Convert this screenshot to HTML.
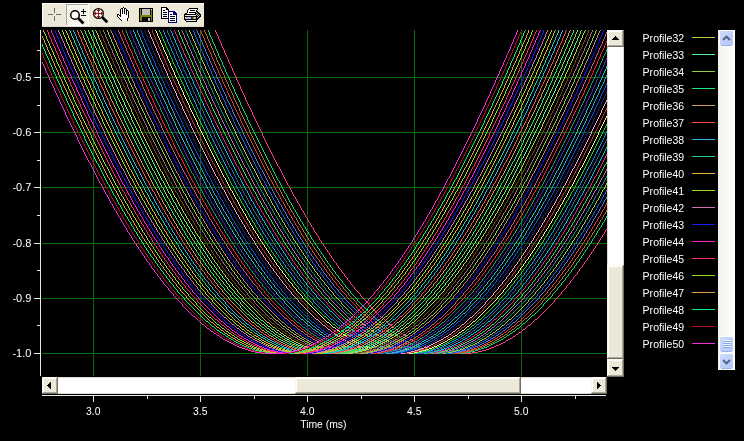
<!DOCTYPE html>
<html><head><meta charset="utf-8"><title>chart</title>
<style>
html,body{margin:0;padding:0;background:#000;}
body{width:744px;height:441px;overflow:hidden;font-family:"Liberation Sans",sans-serif;}
svg{display:block;will-change:transform;}
text{font-family:"Liberation Sans",sans-serif;font-size:11px;fill:#fff;}
</style></head><body>
<svg width="744" height="441" viewBox="0 0 744 441">
<rect x="0" y="0" width="744" height="441" fill="#000"/>
<defs>
<clipPath id="pc"><rect x="41" y="30" width="566" height="346"/></clipPath>
<linearGradient id="trk" x1="0" x2="1" y1="0" y2="0"><stop offset="0" stop-color="#f3f1ec"/><stop offset="1" stop-color="#fefefb"/></linearGradient>
<linearGradient id="btn" x1="0" x2="1" y1="0" y2="1"><stop offset="0" stop-color="#cfdcfd"/><stop offset="1" stop-color="#b3c5f6"/></linearGradient>
<pattern id="chk" x="0" y="0" width="2" height="2" patternUnits="userSpaceOnUse"><rect width="2" height="2" fill="#ece9d8"/><rect x="0" y="0" width="1" height="1" fill="#fff"/><rect x="1" y="1" width="1" height="1" fill="#fff"/></pattern>
</defs>
<g fill="#006e00" shape-rendering="crispEdges">
<rect x="93" y="30" width="1" height="346"/>
<rect x="200" y="30" width="1" height="346"/>
<rect x="307" y="30" width="1" height="346"/>
<rect x="414" y="30" width="1" height="346"/>
<rect x="521" y="30" width="1" height="346"/>
<rect x="42" y="77" width="565" height="1"/>
<rect x="42" y="132" width="565" height="1"/>
<rect x="42" y="187" width="565" height="1"/>
<rect x="42" y="243" width="565" height="1"/>
<rect x="42" y="298" width="565" height="1"/>
<rect x="42" y="353" width="565" height="1"/>
</g>
<g clip-path="url(#pc)" fill="none" stroke-width="1" shape-rendering="crispEdges">
<path d="M215.5 30v2m1 0v2m1 0v2m1 0v3m1 0v2m1 0v2m1 0v3m1 0v2m1 0v2m1 0v3m1 0v2m1 0v2m1 0v2m1 0v3m1 0v2m1 0v2m1 0v2m1 0v3m1 0v2m1 0v2m1 0v2m1 0v3m1 0v2m1 0v2m1 0v2m1 0v3m1 0v2m1 0v2m1 0v2m1 0v2m1 0v3m1 0v2m1 0v2m1 0v2m1 0v2m1 0v2m1 0v2m1 0v3m1 0v2m1 0v2m1 0v2m1 0v2m1 0v2m1 0v2m1 0v2m1 0v2m1 0v2m1 0v3m1 0v2m1 0v2m1 0v2m1 0v2m1 0v2m1 0v2m1 0v2m1 0v2m1 0v2m1 0v2m1 0v2m1 0v2m1 0v2m1 0v2m1 0v2m1 0v1m1 0v2m1 0v2m1 0v2m1 0v2m1 0v2m1 0v2m1 0v2m1 0v2m1 0v2m1 0v1m1 0v2m1 0v2m1 0v2m1 0v2m1 0v2m1 0v1m1 0v2m1 0v2m1 0v2m1 0v1m1 0v2m1 0v2m1 0v2m1 0v1m1 0v2m1 0v2m1 0v2m1 0v1m1 0v2m1 0v2m1 0v1m1 0v2m1 0v2m1 0v1m1 0v2m1 0v2m1 0v1m1 0v2m1 0v1m1 0v2m1 0v2m1 0v1m1 0v2m1 0v1m1 0v2m1 0v1m1 0v2m1 0v1m1 0v2m1 0v1m1 0v2m1 0v1m1 0v2m1 0v1m1 0v2m1 0v1m1 0v1m1 0v2m1 0v1m1 0v2m1 0v1m1 0v1m1 0v2m1 0v1m1 0v1m1 0v2m1 0v1m1 0v1m1 0v2m1 0v1m1 0v1m1 0v2m1 0v1m1 0v1m1 0v1m1 0v2m1 0v1m1 0v1m1 0v1m1 0v1m1 0v1m1 0v2m1 0v1m1 0v1m1 0v1m1 0v1m1 0v1m1 0v1m1 0v1m1 0v2m1 0v1m1 0v1m1 0v1m1 0v1m1 0v1m1 0v1m1 0v1m1 0v1m1 0v1m1 0v1m1 0v1m1 0v1m1 0v1m1 -1v1m1 0v1m1 0v1m1 0v1m1 0v1m1 0v1m1 0v1m1 0v1m1 -1v1m1 0v1m1 0v1m1 0v1m1 0v1m1 -1v1m1 0v1m1 0v1m1 0v1m1 -1v1m1 0v1m1 0v1m1 -1v1m1 0v1m1 0v1m1 -1v1m1 0v1m1 0v1m1 -1v1m1 0v1m1 0v1m1 -1v1m1 0v1m1 -1v1m1 0v1m1 -1v1m1 0v1m1 -1v1m1 0v1m1 -1v1m1 0v1m1 -1v1m1 0v1m1 -1v1m1 0v1m1 -1v1m1 0v1m1 -1v1m1 -1v1m1 0v1m1 -1v1m1 -1v1m1 0v1m1 -1v1m1 -1v1m1 0v1m1 -1v1m1 -1v1m1 0v1m1 -1v1m1 -1v1m1 -1v1m1 0v1m1 -1v1m1 -1v1m1 -1v1m1 -1v1m1 -1v1m1 0v1m1 -1v1m1 -1v1m1 -1v1m1 -1v1m1 -1v1m1 -1v1m1 -1v1m1 -1v1m1 -1v1m1 -1v1m1 -1v1m1 -1v1m1 -1v1m1 -1v1m1 -1v1m1 -1v1m1 -1v1m1 -1v1m1 -1v1m1 -1v1m1 -1v1m1 -1v1m1 -1v1m1 -2v1m1 -1v1m1 -1v1m1 -1v1m1 -1v1m1 -1v1m1 -2v1m1 -1v1m1 -1v1m1 -1v1m1 -2v1m1 -1v1m1 -1v1m1 -1v1m1 -2v1m1 -1v1m1 -1v1m1 -2v1m1 -1v1m1 -2v1m1 -1v1m1 -1v1m1 -2v1m1 -1v1m1 -2v1m1 -1v1m1 -1v1m1 -2v1m1 -1v1m1 -2v1m1 -1v1m1 -2v1m1 -1v1m1 -2v1m1 -2v1m1 -1v1m1 -2v1m1 -1v1m1 -2v1m1 -1v1m1 -2v1m1 -2v1m1 -1v1m1 -2v1m1 -2v1m1 -1v1m1 -2v1m1 -2v1m1 -1v1m1 -2v1m1 -2v1m1 -2v1m1 -1v1m1 -2v1m1 -2v1m1 -2v1m1 -2v1m1 -1v1m1 -2v1m1 -2v1m1 -2v1m1 -2v1m1 -2v1m1 -2v1m1 -1v1m1 -2v1m1 -2v1m1 -2v1m1 -2v1m1 -2v1m1 -2v1m1 -2v1m1 -2v1m1 -2v1m1 -2v1m1 -2v1m1 -2v1m1 -2v1m1 -2v1m1 -2v1m1 -2v1m1 -2v1m1 -3v2m1 -3v1m1 -2v1m1 -2v1m1 -2v1m1 -2v1m1 -2v1m1 -3v2m1 -3v1m1 -2v1m1 -2v1m1 -2v1m1 -3v2m1 -3v1m1 -2v1m1 -2v1m1 -3v2m1 -3v1m1 -2v1m1 -3v2m1 -3v1m1 -2v1m1 -2v1m1 -3v2m1 -3v1m1 -3v2m1 -3v1m1 -2v1m1 -3v2m1 -3v1m1 -3v2m1 -3v1m1 -2v1m1 -3v2m1 -3v1m1 -3v2m1 -3v1m1 -3v2m1 -3v1m1 -3v2m1 -3v1m1 -3v2m1 -3v1m1 -3v2m1 -3v1m1 -3v2m1 -4v2m1 -3v1m1 -3v2m1 -3v1m1 -3v2m1 -4v2m1 -3v1" stroke="#ff3c8c"/>
<path d="M208.5 30v2m1 0v3m1 0v2m1 0v2m1 0v3m1 0v2m1 0v2m1 0v3m1 0v2m1 0v2m1 0v3m1 0v2m1 0v2m1 0v2m1 0v3m1 0v2m1 0v2m1 0v3m1 0v2m1 0v2m1 0v2m1 0v2m1 0v3m1 0v2m1 0v2m1 0v2m1 0v3m1 0v2m1 0v2m1 0v2m1 0v2m1 0v2m1 0v3m1 0v2m1 0v2m1 0v2m1 0v2m1 0v2m1 0v2m1 0v3m1 0v2m1 0v2m1 0v2m1 0v2m1 0v2m1 0v2m1 0v2m1 0v2m1 0v2m1 0v2m1 0v2m1 0v2m1 0v2m1 0v2m1 0v2m1 0v2m1 0v2m1 0v2m1 0v2m1 0v2m1 0v2m1 0v2m1 0v2m1 0v2m1 0v2m1 0v2m1 0v2m1 0v2m1 0v2m1 0v2m1 0v1m1 0v2m1 0v2m1 0v2m1 0v2m1 0v2m1 0v2m1 0v1m1 0v2m1 0v2m1 0v2m1 0v2m1 0v1m1 0v2m1 0v2m1 0v2m1 0v1m1 0v2m1 0v2m1 0v2m1 0v1m1 0v2m1 0v2m1 0v1m1 0v2m1 0v2m1 0v1m1 0v2m1 0v2m1 0v1m1 0v2m1 0v1m1 0v2m1 0v2m1 0v1m1 0v2m1 0v1m1 0v2m1 0v1m1 0v2m1 0v1m1 0v2m1 0v1m1 0v2m1 0v1m1 0v2m1 0v1m1 0v2m1 0v1m1 0v2m1 0v1m1 0v1m1 0v2m1 0v1m1 0v2m1 0v1m1 0v1m1 0v2m1 0v1m1 0v1m1 0v2m1 0v1m1 0v1m1 0v1m1 0v2m1 0v1m1 0v1m1 0v2m1 0v1m1 0v1m1 0v1m1 0v1m1 0v2m1 0v1m1 0v1m1 0v1m1 0v1m1 0v1m1 0v1m1 0v2m1 0v1m1 0v1m1 0v1m1 0v1m1 0v1m1 0v1m1 0v1m1 0v1m1 0v1m1 0v1m1 0v1m1 0v1m1 0v1m1 0v1m1 0v1m1 0v1m1 0v1m1 0v1m1 0v1m1 0v1m1 -1v1m1 0v1m1 0v1m1 0v1m1 0v1m1 0v1m1 -1v1m1 0v1m1 0v1m1 0v1m1 0v1m1 -1v1m1 0v1m1 0v1m1 0v1m1 -1v1m1 0v1m1 0v1m1 -1v1m1 0v1m1 0v1m1 -1v1m1 0v1m1 0v1m1 -1v1m1 0v1m1 -1v1m1 0v1m1 0v1m1 -1v1m1 0v1m1 -1v1m1 0v1m1 -1v1m1 0v1m1 -1v1m1 0v1m1 -1v1m1 -1v1m1 0v1m1 -1v1m1 0v1m1 -1v1m1 0v1m1 -1v1m1 -1v1m1 0v1m1 -1v1m1 -1v1m1 0v1m1 -1v1m1 -1v1m1 -1v1m1 0v1m1 -1v1m1 -1v1m1 -1v1m1 0v1m1 -1v1m1 -1v1m1 -1v1m1 -1v1m1 -1v1m1 0v1m1 -1v1m1 -1v1m1 -1v1m1 -1v1m1 -1v1m1 -1v1m1 -1v1m1 -1v1m1 -1v1m1 -1v1m1 -1v1m1 -1v1m1 -1v1m1 -1v1m1 -1v1m1 -1v1m1 -1v1m1 -1v1m1 -1v1m1 -1v1m1 -1v1m1 -1v1m1 -1v1m1 -2v1m1 -1v1m1 -1v1m1 -1v1m1 -1v1m1 -1v1m1 -2v1m1 -1v1m1 -1v1m1 -1v1m1 -2v1m1 -1v1m1 -1v1m1 -2v1m1 -1v1m1 -1v1m1 -2v1m1 -1v1m1 -1v1m1 -2v1m1 -1v1m1 -1v1m1 -2v1m1 -1v1m1 -2v1m1 -1v1m1 -2v1m1 -1v1m1 -2v1m1 -1v1m1 -2v1m1 -1v1m1 -2v1m1 -1v1m1 -2v1m1 -1v1m1 -2v1m1 -1v1m1 -2v1m1 -2v1m1 -1v1m1 -2v1m1 -2v1m1 -1v1m1 -2v1m1 -2v1m1 -1v1m1 -2v1m1 -2v1m1 -1v1m1 -2v1m1 -2v1m1 -2v1m1 -1v1m1 -2v1m1 -2v1m1 -2v1m1 -2v1m1 -2v1m1 -1v1m1 -2v1m1 -2v1m1 -2v1m1 -2v1m1 -2v1m1 -2v1m1 -2v1m1 -2v1m1 -1v1m1 -2v1m1 -2v1m1 -2v1m1 -2v1m1 -2v1m1 -2v1m1 -2v1m1 -2v1m1 -2v1m1 -3v2m1 -3v1m1 -2v1m1 -2v1m1 -2v1m1 -2v1m1 -2v1m1 -2v1m1 -2v1m1 -3v2m1 -3v1m1 -2v1m1 -2v1m1 -2v1m1 -3v2m1 -3v1m1 -2v1m1 -2v1m1 -3v2m1 -3v1m1 -2v1m1 -2v1m1 -3v2m1 -3v1m1 -2v1m1 -3v2m1 -3v1m1 -2v1m1 -3v2m1 -3v1m1 -2v1m1 -3v2m1 -3v1m1 -3v2m1 -3v1m1 -2v1m1 -3v2m1 -3v1m1 -3v2m1 -3v1m1 -3v2m1 -3v1m1 -3v2m1 -3v1m1 -3v2m1 -3v1m1 -3v2m1 -3v1m1 -3v2m1 -4v2m1 -3v1m1 -3v2m1 -3v1m1 -3v2m1 -4v2m1 -3v1m1 -3v2m1 -3v1m1 -3v2m1 -4v2m1 -3v1m1 -3v2m1 -4v2m1 -4v2" stroke="#10d078"/>
<path d="M204.5 30v2m1 0v2m1 0v2m1 0v3m1 0v2m1 0v2m1 0v3m1 0v2m1 0v2m1 0v3m1 0v2m1 0v2m1 0v3m1 0v2m1 0v2m1 0v2m1 0v3m1 0v2m1 0v2m1 0v2m1 0v3m1 0v2m1 0v2m1 0v2m1 0v3m1 0v2m1 0v2m1 0v2m1 0v2m1 0v3m1 0v2m1 0v2m1 0v2m1 0v2m1 0v2m1 0v3m1 0v2m1 0v2m1 0v2m1 0v2m1 0v2m1 0v2m1 0v2m1 0v2m1 0v2m1 0v3m1 0v2m1 0v2m1 0v2m1 0v2m1 0v2m1 0v2m1 0v2m1 0v2m1 0v2m1 0v2m1 0v2m1 0v2m1 0v2m1 0v2m1 0v2m1 0v2m1 0v2m1 0v2m1 0v2m1 0v1m1 0v2m1 0v2m1 0v2m1 0v2m1 0v2m1 0v2m1 0v2m1 0v2m1 0v1m1 0v2m1 0v2m1 0v2m1 0v2m1 0v2m1 0v1m1 0v2m1 0v2m1 0v2m1 0v1m1 0v2m1 0v2m1 0v2m1 0v1m1 0v2m1 0v2m1 0v1m1 0v2m1 0v2m1 0v2m1 0v1m1 0v2m1 0v1m1 0v2m1 0v2m1 0v1m1 0v2m1 0v2m1 0v1m1 0v2m1 0v1m1 0v2m1 0v1m1 0v2m1 0v1m1 0v2m1 0v1m1 0v2m1 0v1m1 0v2m1 0v1m1 0v2m1 0v1m1 0v2m1 0v1m1 0v2m1 0v1m1 0v1m1 0v2m1 0v1m1 0v2m1 0v1m1 0v1m1 0v2m1 0v1m1 0v1m1 0v2m1 0v1m1 0v1m1 0v1m1 0v2m1 0v1m1 0v1m1 0v1m1 0v2m1 0v1m1 0v1m1 0v1m1 0v1m1 0v2m1 0v1m1 0v1m1 0v1m1 0v1m1 0v1m1 0v1m1 0v1m1 0v2m1 0v1m1 0v1m1 0v1m1 0v1m1 0v1m1 0v1m1 0v1m1 0v1m1 0v1m1 0v1m1 0v1m1 0v1m1 0v1m1 0v1m1 0v1m1 -1v1m1 0v1m1 0v1m1 0v1m1 0v1m1 0v1m1 0v1m1 -1v1m1 0v1m1 0v1m1 0v1m1 0v1m1 -1v1m1 0v1m1 0v1m1 0v1m1 -1v1m1 0v1m1 0v1m1 0v1m1 -1v1m1 0v1m1 0v1m1 -1v1m1 0v1m1 -1v1m1 0v1m1 0v1m1 -1v1m1 0v1m1 -1v1m1 0v1m1 -1v1m1 0v1m1 0v1m1 -1v1m1 0v1m1 -1v1m1 -1v1m1 0v1m1 -1v1m1 0v1m1 -1v1m1 0v1m1 -1v1m1 -1v1m1 0v1m1 -1v1m1 -1v1m1 0v1m1 -1v1m1 -1v1m1 0v1m1 -1v1m1 -1v1m1 0v1m1 -1v1m1 -1v1m1 -1v1m1 0v1m1 -1v1m1 -1v1m1 -1v1m1 -1v1m1 -1v1m1 0v1m1 -1v1m1 -1v1m1 -1v1m1 -1v1m1 -1v1m1 -1v1m1 -1v1m1 -1v1m1 -1v1m1 -1v1m1 -1v1m1 -1v1m1 -1v1m1 -1v1m1 -1v1m1 -1v1m1 -1v1m1 -1v1m1 -1v1m1 -1v1m1 -1v1m1 -1v1m1 -1v1m1 -2v1m1 -1v1m1 -1v1m1 -1v1m1 -1v1m1 -1v1m1 -2v1m1 -1v1m1 -1v1m1 -1v1m1 -2v1m1 -1v1m1 -1v1m1 -2v1m1 -1v1m1 -1v1m1 -1v1m1 -2v1m1 -1v1m1 -2v1m1 -1v1m1 -1v1m1 -2v1m1 -1v1m1 -2v1m1 -1v1m1 -2v1m1 -1v1m1 -1v1m1 -2v1m1 -1v1m1 -2v1m1 -1v1m1 -2v1m1 -2v1m1 -1v1m1 -2v1m1 -1v1m1 -2v1m1 -2v1m1 -1v1m1 -2v1m1 -1v1m1 -2v1m1 -2v1m1 -1v1m1 -2v1m1 -2v1m1 -2v1m1 -1v1m1 -2v1m1 -2v1m1 -1v1m1 -2v1m1 -2v1m1 -2v1m1 -2v1m1 -1v1m1 -2v1m1 -2v1m1 -2v1m1 -2v1m1 -2v1m1 -2v1m1 -2v1m1 -1v1m1 -2v1m1 -2v1m1 -2v1m1 -2v1m1 -2v1m1 -2v1m1 -2v1m1 -2v1m1 -2v1m1 -2v1m1 -2v1m1 -2v1m1 -2v1m1 -2v1m1 -2v1m1 -3v2m1 -3v1m1 -2v1m1 -2v1m1 -2v1m1 -2v1m1 -2v1m1 -2v1m1 -3v2m1 -3v1m1 -2v1m1 -2v1m1 -2v1m1 -3v2m1 -3v1m1 -2v1m1 -2v1m1 -3v2m1 -3v1m1 -2v1m1 -3v2m1 -3v1m1 -2v1m1 -3v2m1 -3v1m1 -2v1m1 -3v2m1 -3v1m1 -2v1m1 -3v2m1 -3v1m1 -3v2m1 -3v1m1 -3v2m1 -3v1m1 -2v1m1 -3v2m1 -3v1m1 -3v2m1 -3v1m1 -3v2m1 -3v1m1 -3v2m1 -3v1m1 -3v2m1 -4v2m1 -3v1m1 -3v2m1 -3v1m1 -3v2m1 -4v2m1 -3v1m1 -3v2m1 -3v1m1 -3v2m1 -4v2m1 -3v1m1 -3v2m1 -4v2m1 -3v1m1 -3v2m1 -4v2m1 -3v1m1 -3v2m1 -4v2" stroke="#b07030"/>
<path d="M200.5 30v1m1 0v3m1 0v2m1 0v2m1 0v3m1 0v2m1 0v2m1 0v3m1 0v2m1 0v2m1 0v2m1 0v3m1 0v2m1 0v2m1 0v3m1 0v2m1 0v2m1 0v2m1 0v3m1 0v2m1 0v2m1 0v2m1 0v3m1 0v2m1 0v2m1 0v2m1 0v2m1 0v3m1 0v2m1 0v2m1 0v2m1 0v2m1 0v2m1 0v3m1 0v2m1 0v2m1 0v2m1 0v2m1 0v2m1 0v2m1 0v3m1 0v2m1 0v2m1 0v2m1 0v2m1 0v2m1 0v2m1 0v2m1 0v2m1 0v2m1 0v2m1 0v2m1 0v2m1 0v2m1 0v2m1 0v2m1 0v2m1 0v2m1 0v2m1 0v2m1 0v2m1 0v2m1 0v2m1 0v2m1 0v2m1 0v2m1 0v2m1 0v2m1 0v2m1 0v2m1 0v1m1 0v2m1 0v2m1 0v2m1 0v2m1 0v2m1 0v2m1 0v1m1 0v2m1 0v2m1 0v2m1 0v2m1 0v1m1 0v2m1 0v2m1 0v2m1 0v1m1 0v2m1 0v2m1 0v2m1 0v1m1 0v2m1 0v2m1 0v1m1 0v2m1 0v2m1 0v1m1 0v2m1 0v2m1 0v1m1 0v2m1 0v2m1 0v1m1 0v2m1 0v1m1 0v2m1 0v1m1 0v2m1 0v2m1 0v1m1 0v2m1 0v1m1 0v2m1 0v1m1 0v2m1 0v1m1 0v2m1 0v1m1 0v1m1 0v2m1 0v1m1 0v2m1 0v1m1 0v1m1 0v2m1 0v1m1 0v2m1 0v1m1 0v1m1 0v2m1 0v1m1 0v1m1 0v2m1 0v1m1 0v1m1 0v1m1 0v2m1 0v1m1 0v1m1 0v1m1 0v2m1 0v1m1 0v1m1 0v1m1 0v1m1 0v1m1 0v2m1 0v1m1 0v1m1 0v1m1 0v1m1 0v1m1 0v1m1 0v1m1 0v1m1 0v1m1 0v2m1 0v1m1 0v1m1 0v1m1 0v1m1 0v1m1 0v1m1 0v1m1 -1v1m1 0v1m1 0v1m1 0v1m1 0v1m1 0v1m1 0v1m1 0v1m1 0v1m1 0v1m1 -1v1m1 0v1m1 0v1m1 0v1m1 0v1m1 -1v1m1 0v1m1 0v1m1 0v1m1 0v1m1 -1v1m1 0v1m1 0v1m1 -1v1m1 0v1m1 0v1m1 -1v1m1 0v1m1 0v1m1 -1v1m1 0v1m1 0v1m1 -1v1m1 0v1m1 -1v1m1 0v1m1 -1v1m1 0v1m1 -1v1m1 0v1m1 -1v1m1 0v1m1 -1v1m1 0v1m1 -1v1m1 0v1m1 -1v1m1 0v1m1 -1v1m1 -1v1m1 0v1m1 -1v1m1 -1v1m1 0v1m1 -1v1m1 -1v1m1 0v1m1 -1v1m1 -1v1m1 0v1m1 -1v1m1 -1v1m1 -1v1m1 -1v1m1 0v1m1 -1v1m1 -1v1m1 -1v1m1 -1v1m1 0v1m1 -1v1m1 -1v1m1 -1v1m1 -1v1m1 -1v1m1 -1v1m1 -1v1m1 -1v1m1 -1v1m1 -1v1m1 -1v1m1 -1v1m1 -1v1m1 -1v1m1 -1v1m1 -1v1m1 -1v1m1 -1v1m1 -1v1m1 -1v1m1 -1v1m1 -1v1m1 -1v1m1 -1v1m1 -2v1m1 -1v1m1 -1v1m1 -1v1m1 -1v1m1 -2v1m1 -1v1m1 -1v1m1 -1v1m1 -2v1m1 -1v1m1 -1v1m1 -1v1m1 -2v1m1 -1v1m1 -1v1m1 -2v1m1 -1v1m1 -1v1m1 -2v1m1 -1v1m1 -2v1m1 -1v1m1 -1v1m1 -2v1m1 -1v1m1 -2v1m1 -1v1m1 -2v1m1 -1v1m1 -2v1m1 -1v1m1 -2v1m1 -1v1m1 -2v1m1 -2v1m1 -1v1m1 -2v1m1 -1v1m1 -2v1m1 -2v1m1 -1v1m1 -2v1m1 -2v1m1 -1v1m1 -2v1m1 -2v1m1 -1v1m1 -2v1m1 -2v1m1 -2v1m1 -1v1m1 -2v1m1 -2v1m1 -2v1m1 -1v1m1 -2v1m1 -2v1m1 -2v1m1 -2v1m1 -2v1m1 -1v1m1 -2v1m1 -2v1m1 -2v1m1 -2v1m1 -2v1m1 -2v1m1 -2v1m1 -2v1m1 -2v1m1 -2v1m1 -2v1m1 -2v1m1 -2v1m1 -2v1m1 -2v1m1 -2v1m1 -2v1m1 -2v1m1 -2v1m1 -2v1m1 -2v1m1 -3v2m1 -3v1m1 -2v1m1 -2v1m1 -2v1m1 -2v1m1 -3v2m1 -3v1m1 -2v1m1 -2v1m1 -2v1m1 -3v2m1 -3v1m1 -2v1m1 -2v1m1 -3v2m1 -3v1m1 -2v1m1 -3v2m1 -3v1m1 -2v1m1 -3v2m1 -3v1m1 -2v1m1 -3v2m1 -3v1m1 -2v1m1 -3v2m1 -3v1m1 -3v2m1 -3v1m1 -3v2m1 -3v1m1 -3v2m1 -3v1m1 -3v2m1 -3v1m1 -3v2m1 -3v1m1 -3v2m1 -3v1m1 -3v2m1 -3v1m1 -3v2m1 -3v1m1 -3v2m1 -3v1m1 -3v2m1 -4v2m1 -3v1m1 -3v2m1 -4v2m1 -3v1m1 -3v2m1 -4v2m1 -3v1m1 -3v2m1 -4v2m1 -3v1m1 -3v2m1 -4v2m1 -4v2m1 -3v1m1 -3v2m1 -4v2m1 -4v2" stroke="#d84030"/>
<path d="M196.5 30v1m1 0v2m1 0v2m1 0v3m1 0v2m1 0v2m1 0v3m1 0v2m1 0v2m1 0v3m1 0v2m1 0v2m1 0v2m1 0v3m1 0v2m1 0v2m1 0v3m1 0v2m1 0v2m1 0v2m1 0v3m1 0v2m1 0v2m1 0v2m1 0v2m1 0v3m1 0v2m1 0v2m1 0v2m1 0v2m1 0v3m1 0v2m1 0v2m1 0v2m1 0v2m1 0v2m1 0v3m1 0v2m1 0v2m1 0v2m1 0v2m1 0v2m1 0v2m1 0v2m1 0v2m1 0v2m1 0v3m1 0v2m1 0v2m1 0v2m1 0v2m1 0v2m1 0v2m1 0v2m1 0v2m1 0v2m1 0v2m1 0v2m1 0v2m1 0v2m1 0v2m1 0v2m1 0v2m1 0v2m1 0v2m1 0v1m1 0v2m1 0v2m1 0v2m1 0v2m1 0v2m1 0v2m1 0v2m1 0v2m1 0v1m1 0v2m1 0v2m1 0v2m1 0v2m1 0v2m1 0v1m1 0v2m1 0v2m1 0v2m1 0v1m1 0v2m1 0v2m1 0v2m1 0v1m1 0v2m1 0v2m1 0v2m1 0v1m1 0v2m1 0v2m1 0v1m1 0v2m1 0v2m1 0v1m1 0v2m1 0v2m1 0v1m1 0v2m1 0v1m1 0v2m1 0v1m1 0v2m1 0v2m1 0v1m1 0v2m1 0v1m1 0v2m1 0v1m1 0v2m1 0v1m1 0v2m1 0v1m1 0v2m1 0v1m1 0v1m1 0v2m1 0v1m1 0v2m1 0v1m1 0v1m1 0v2m1 0v1m1 0v2m1 0v1m1 0v1m1 0v2m1 0v1m1 0v1m1 0v1m1 0v2m1 0v1m1 0v1m1 0v2m1 0v1m1 0v1m1 0v1m1 0v1m1 0v2m1 0v1m1 0v1m1 0v1m1 0v1m1 0v1m1 0v2m1 0v1m1 0v1m1 0v1m1 0v1m1 0v1m1 0v1m1 0v1m1 0v1m1 0v1m1 0v1m1 0v1m1 0v1m1 0v1m1 0v1m1 0v1m1 0v1m1 0v1m1 0v1m1 0v1m1 0v1m1 0v1m1 0v1m1 0v1m1 0v1m1 -1v1m1 0v1m1 0v1m1 0v1m1 0v1m1 -1v1m1 0v1m1 0v1m1 0v1m1 0v1m1 -1v1m1 0v1m1 0v1m1 -1v1m1 0v1m1 0v1m1 0v1m1 -1v1m1 0v1m1 -1v1m1 0v1m1 0v1m1 -1v1m1 0v1m1 0v1m1 -1v1m1 0v1m1 -1v1m1 0v1m1 -1v1m1 0v1m1 -1v1m1 0v1m1 -1v1m1 0v1m1 -1v1m1 0v1m1 -1v1m1 -1v1m1 0v1m1 -1v1m1 0v1m1 -1v1m1 -1v1m1 0v1m1 -1v1m1 -1v1m1 0v1m1 -1v1m1 -1v1m1 -1v1m1 0v1m1 -1v1m1 -1v1m1 -1v1m1 0v1m1 -1v1m1 -1v1m1 -1v1m1 -1v1m1 0v1m1 -1v1m1 -1v1m1 -1v1m1 -1v1m1 -1v1m1 -1v1m1 -1v1m1 -1v1m1 -1v1m1 -1v1m1 -1v1m1 -1v1m1 -1v1m1 -1v1m1 -1v1m1 -1v1m1 -1v1m1 -1v1m1 -1v1m1 -1v1m1 -1v1m1 -1v1m1 -1v1m1 -1v1m1 -2v1m1 -1v1m1 -1v1m1 -1v1m1 -1v1m1 -2v1m1 -1v1m1 -1v1m1 -1v1m1 -2v1m1 -1v1m1 -1v1m1 -1v1m1 -2v1m1 -1v1m1 -1v1m1 -2v1m1 -1v1m1 -1v1m1 -2v1m1 -1v1m1 -2v1m1 -1v1m1 -1v1m1 -2v1m1 -1v1m1 -2v1m1 -1v1m1 -2v1m1 -1v1m1 -2v1m1 -1v1m1 -2v1m1 -1v1m1 -2v1m1 -1v1m1 -2v1m1 -2v1m1 -1v1m1 -2v1m1 -1v1m1 -2v1m1 -2v1m1 -1v1m1 -2v1m1 -2v1m1 -1v1m1 -2v1m1 -2v1m1 -2v1m1 -1v1m1 -2v1m1 -2v1m1 -2v1m1 -1v1m1 -2v1m1 -2v1m1 -2v1m1 -2v1m1 -2v1m1 -1v1m1 -2v1m1 -2v1m1 -2v1m1 -2v1m1 -2v1m1 -2v1m1 -2v1m1 -2v1m1 -2v1m1 -2v1m1 -2v1m1 -2v1m1 -2v1m1 -2v1m1 -2v1m1 -2v1m1 -2v1m1 -2v1m1 -2v1m1 -2v1m1 -2v1m1 -2v1m1 -2v1m1 -2v1m1 -3v2m1 -3v1m1 -2v1m1 -2v1m1 -2v1m1 -2v1m1 -3v2m1 -3v1m1 -2v1m1 -2v1m1 -3v2m1 -3v1m1 -2v1m1 -2v1m1 -3v2m1 -3v1m1 -2v1m1 -3v2m1 -3v1m1 -2v1m1 -3v2m1 -3v1m1 -2v1m1 -3v2m1 -3v1m1 -3v2m1 -3v1m1 -2v1m1 -3v2m1 -3v1m1 -3v2m1 -3v1m1 -3v2m1 -3v1m1 -3v2m1 -3v1m1 -3v2m1 -3v1m1 -3v2m1 -3v1m1 -3v2m1 -3v1m1 -3v2m1 -3v1m1 -3v2m1 -4v2m1 -3v1m1 -3v2m1 -4v2m1 -3v1m1 -3v2m1 -3v1m1 -3v2m1 -4v2m1 -4v2m1 -3v1m1 -3v2m1 -4v2m1 -3v1m1 -3v2m1 -4v2m1 -4v2m1 -3v1m1 -3v2m1 -4v2m1 -4v2m1 -3v1m1 -3v2" stroke="#5878d8"/>
<path d="M193.5 30v2m1 0v3m1 0v2m1 0v2m1 0v3m1 0v2m1 0v2m1 0v3m1 0v2m1 0v2m1 0v3m1 0v2m1 0v2m1 0v2m1 0v3m1 0v2m1 0v2m1 0v2m1 0v3m1 0v2m1 0v2m1 0v2m1 0v3m1 0v2m1 0v2m1 0v2m1 0v2m1 0v3m1 0v2m1 0v2m1 0v2m1 0v2m1 0v3m1 0v2m1 0v2m1 0v2m1 0v2m1 0v2m1 0v2m1 0v2m1 0v3m1 0v2m1 0v2m1 0v2m1 0v2m1 0v2m1 0v2m1 0v2m1 0v2m1 0v2m1 0v2m1 0v2m1 0v2m1 0v2m1 0v2m1 0v2m1 0v2m1 0v2m1 0v2m1 0v2m1 0v2m1 0v2m1 0v2m1 0v2m1 0v2m1 0v2m1 0v2m1 0v2m1 0v2m1 0v2m1 0v1m1 0v2m1 0v2m1 0v2m1 0v2m1 0v2m1 0v1m1 0v2m1 0v2m1 0v2m1 0v2m1 0v1m1 0v2m1 0v2m1 0v2m1 0v2m1 0v1m1 0v2m1 0v2m1 0v1m1 0v2m1 0v2m1 0v2m1 0v1m1 0v2m1 0v2m1 0v1m1 0v2m1 0v1m1 0v2m1 0v2m1 0v1m1 0v2m1 0v1m1 0v2m1 0v2m1 0v1m1 0v2m1 0v1m1 0v2m1 0v1m1 0v2m1 0v1m1 0v2m1 0v1m1 0v2m1 0v1m1 0v2m1 0v1m1 0v2m1 0v1m1 0v1m1 0v2m1 0v1m1 0v2m1 0v1m1 0v1m1 0v2m1 0v1m1 0v1m1 0v2m1 0v1m1 0v1m1 0v1m1 0v2m1 0v1m1 0v1m1 0v1m1 0v2m1 0v1m1 0v1m1 0v1m1 0v2m1 0v1m1 0v1m1 0v1m1 0v1m1 0v1m1 0v1m1 0v2m1 0v1m1 0v1m1 0v1m1 0v1m1 0v1m1 0v1m1 0v1m1 0v1m1 0v1m1 0v1m1 0v1m1 0v1m1 0v1m1 0v1m1 0v1m1 0v1m1 0v1m1 0v1m1 0v1m1 0v1m1 -1v1m1 0v1m1 0v1m1 0v1m1 0v1m1 0v1m1 -1v1m1 0v1m1 0v1m1 0v1m1 0v1m1 -1v1m1 0v1m1 0v1m1 0v1m1 -1v1m1 0v1m1 0v1m1 -1v1m1 0v1m1 0v1m1 -1v1m1 0v1m1 0v1m1 -1v1m1 0v1m1 -1v1m1 0v1m1 0v1m1 -1v1m1 0v1m1 -1v1m1 0v1m1 -1v1m1 0v1m1 -1v1m1 0v1m1 -1v1m1 -1v1m1 0v1m1 -1v1m1 0v1m1 -1v1m1 -1v1m1 0v1m1 -1v1m1 0v1m1 -1v1m1 -1v1m1 0v1m1 -1v1m1 -1v1m1 -1v1m1 0v1m1 -1v1m1 -1v1m1 -1v1m1 0v1m1 -1v1m1 -1v1m1 -1v1m1 -1v1m1 -1v1m1 0v1m1 -1v1m1 -1v1m1 -1v1m1 -1v1m1 -1v1m1 -1v1m1 -1v1m1 -1v1m1 -1v1m1 -1v1m1 -1v1m1 -1v1m1 -1v1m1 -1v1m1 -1v1m1 -1v1m1 -1v1m1 -1v1m1 -1v1m1 -1v1m1 -1v1m1 -1v1m1 -1v1m1 -2v1m1 -1v1m1 -1v1m1 -1v1m1 -1v1m1 -1v1m1 -2v1m1 -1v1m1 -1v1m1 -1v1m1 -2v1m1 -1v1m1 -1v1m1 -2v1m1 -1v1m1 -1v1m1 -2v1m1 -1v1m1 -1v1m1 -2v1m1 -1v1m1 -1v1m1 -2v1m1 -1v1m1 -2v1m1 -1v1m1 -2v1m1 -1v1m1 -2v1m1 -1v1m1 -2v1m1 -1v1m1 -2v1m1 -1v1m1 -2v1m1 -1v1m1 -2v1m1 -1v1m1 -2v1m1 -2v1m1 -1v1m1 -2v1m1 -2v1m1 -1v1m1 -2v1m1 -2v1m1 -1v1m1 -2v1m1 -2v1m1 -1v1m1 -2v1m1 -2v1m1 -2v1m1 -1v1m1 -2v1m1 -2v1m1 -2v1m1 -2v1m1 -1v1m1 -2v1m1 -2v1m1 -2v1m1 -2v1m1 -2v1m1 -2v1m1 -2v1m1 -2v1m1 -1v1m1 -2v1m1 -2v1m1 -2v1m1 -2v1m1 -2v1m1 -2v1m1 -2v1m1 -2v1m1 -2v1m1 -2v1m1 -3v2m1 -3v1m1 -2v1m1 -2v1m1 -2v1m1 -2v1m1 -2v1m1 -2v1m1 -2v1m1 -3v2m1 -3v1m1 -2v1m1 -2v1m1 -2v1m1 -3v2m1 -3v1m1 -2v1m1 -2v1m1 -2v1m1 -3v2m1 -3v1m1 -2v1m1 -3v2m1 -3v1m1 -2v1m1 -3v2m1 -3v1m1 -2v1m1 -3v2m1 -3v1m1 -2v1m1 -3v2m1 -3v1m1 -3v2m1 -3v1m1 -2v1m1 -3v2m1 -3v1m1 -3v2m1 -3v1m1 -3v2m1 -3v1m1 -3v2m1 -3v1m1 -3v2m1 -3v1m1 -3v2m1 -3v1m1 -3v2m1 -4v2m1 -3v1m1 -3v2m1 -3v1m1 -3v2m1 -3v1m1 -3v2m1 -4v2m1 -3v1m1 -3v2m1 -4v2m1 -3v1m1 -3v2m1 -4v2m1 -3v1m1 -3v2m1 -4v2m1 -4v2m1 -3v1m1 -3v2m1 -4v2m1 -4v2m1 -3v1m1 -3v2m1 -4v2m1 -4v2m1 -4v2m1 -3v1m1 -3v2m1 -4v2" stroke="#2060e0"/>
<path d="M189.5 30v2m1 0v2m1 0v2m1 0v3m1 0v2m1 0v2m1 0v3m1 0v2m1 0v2m1 0v3m1 0v2m1 0v2m1 0v3m1 0v2m1 0v2m1 0v2m1 0v3m1 0v2m1 0v2m1 0v2m1 0v3m1 0v2m1 0v2m1 0v2m1 0v2m1 0v3m1 0v2m1 0v2m1 0v2m1 0v2m1 0v3m1 0v2m1 0v2m1 0v2m1 0v2m1 0v2m1 0v3m1 0v2m1 0v2m1 0v2m1 0v2m1 0v2m1 0v2m1 0v2m1 0v2m1 0v2m1 0v3m1 0v2m1 0v2m1 0v2m1 0v2m1 0v2m1 0v2m1 0v2m1 0v2m1 0v2m1 0v2m1 0v2m1 0v2m1 0v2m1 0v2m1 0v2m1 0v2m1 0v2m1 0v1m1 0v2m1 0v2m1 0v2m1 0v2m1 0v2m1 0v2m1 0v2m1 0v2m1 0v1m1 0v2m1 0v2m1 0v2m1 0v2m1 0v2m1 0v1m1 0v2m1 0v2m1 0v2m1 0v2m1 0v1m1 0v2m1 0v2m1 0v2m1 0v1m1 0v2m1 0v2m1 0v1m1 0v2m1 0v2m1 0v1m1 0v2m1 0v2m1 0v1m1 0v2m1 0v2m1 0v1m1 0v2m1 0v1m1 0v2m1 0v2m1 0v1m1 0v2m1 0v1m1 0v2m1 0v1m1 0v2m1 0v1m1 0v2m1 0v1m1 0v2m1 0v1m1 0v2m1 0v1m1 0v2m1 0v1m1 0v2m1 0v1m1 0v1m1 0v2m1 0v1m1 0v2m1 0v1m1 0v1m1 0v2m1 0v1m1 0v1m1 0v2m1 0v1m1 0v1m1 0v1m1 0v2m1 0v1m1 0v1m1 0v1m1 0v2m1 0v1m1 0v1m1 0v1m1 0v1m1 0v2m1 0v1m1 0v1m1 0v1m1 0v1m1 0v1m1 0v1m1 0v1m1 0v2m1 0v1m1 0v1m1 0v1m1 0v1m1 0v1m1 0v1m1 0v1m1 0v1m1 0v1m1 0v1m1 0v1m1 0v1m1 0v1m1 0v1m1 -1v1m1 0v1m1 0v1m1 0v1m1 0v1m1 0v1m1 0v1m1 0v1m1 -1v1m1 0v1m1 0v1m1 0v1m1 0v1m1 -1v1m1 0v1m1 0v1m1 0v1m1 -1v1m1 0v1m1 0v1m1 0v1m1 -1v1m1 0v1m1 0v1m1 -1v1m1 0v1m1 -1v1m1 0v1m1 0v1m1 -1v1m1 0v1m1 -1v1m1 0v1m1 -1v1m1 0v1m1 -1v1m1 0v1m1 -1v1m1 0v1m1 -1v1m1 0v1m1 -1v1m1 0v1m1 -1v1m1 0v1m1 -1v1m1 -1v1m1 0v1m1 -1v1m1 -1v1m1 0v1m1 -1v1m1 -1v1m1 0v1m1 -1v1m1 -1v1m1 0v1m1 -1v1m1 -1v1m1 -1v1m1 0v1m1 -1v1m1 -1v1m1 -1v1m1 -1v1m1 -1v1m1 0v1m1 -1v1m1 -1v1m1 -1v1m1 -1v1m1 -1v1m1 -1v1m1 -1v1m1 -1v1m1 -1v1m1 -1v1m1 -1v1m1 -1v1m1 -1v1m1 -1v1m1 -1v1m1 -1v1m1 -1v1m1 -1v1m1 -1v1m1 -1v1m1 -1v1m1 -1v1m1 -1v1m1 -2v1m1 -1v1m1 -1v1m1 -1v1m1 -1v1m1 -1v1m1 -2v1m1 -1v1m1 -1v1m1 -1v1m1 -2v1m1 -1v1m1 -1v1m1 -1v1m1 -2v1m1 -1v1m1 -1v1m1 -2v1m1 -1v1m1 -2v1m1 -1v1m1 -1v1m1 -2v1m1 -1v1m1 -2v1m1 -1v1m1 -1v1m1 -2v1m1 -1v1m1 -2v1m1 -1v1m1 -2v1m1 -1v1m1 -2v1m1 -2v1m1 -1v1m1 -2v1m1 -1v1m1 -2v1m1 -1v1m1 -2v1m1 -2v1m1 -1v1m1 -2v1m1 -2v1m1 -1v1m1 -2v1m1 -2v1m1 -1v1m1 -2v1m1 -2v1m1 -2v1m1 -1v1m1 -2v1m1 -2v1m1 -2v1m1 -2v1m1 -1v1m1 -2v1m1 -2v1m1 -2v1m1 -2v1m1 -2v1m1 -2v1m1 -1v1m1 -2v1m1 -2v1m1 -2v1m1 -2v1m1 -2v1m1 -2v1m1 -2v1m1 -2v1m1 -2v1m1 -2v1m1 -2v1m1 -2v1m1 -2v1m1 -2v1m1 -2v1m1 -2v1m1 -2v1m1 -3v2m1 -3v1m1 -2v1m1 -2v1m1 -2v1m1 -2v1m1 -2v1m1 -3v2m1 -3v1m1 -2v1m1 -2v1m1 -2v1m1 -3v2m1 -3v1m1 -2v1m1 -2v1m1 -3v2m1 -3v1m1 -2v1m1 -3v2m1 -3v1m1 -2v1m1 -3v2m1 -3v1m1 -2v1m1 -3v2m1 -3v1m1 -2v1m1 -3v2m1 -3v1m1 -3v2m1 -3v1m1 -2v1m1 -3v2m1 -3v1m1 -3v2m1 -3v1m1 -3v2m1 -3v1m1 -3v2m1 -3v1m1 -3v2m1 -3v1m1 -3v2m1 -4v2m1 -3v1m1 -3v2m1 -3v1m1 -3v2m1 -3v1m1 -3v2m1 -4v2m1 -3v1m1 -3v2m1 -4v2m1 -3v1m1 -3v2m1 -4v2m1 -3v1m1 -3v2m1 -4v2m1 -3v1m1 -3v2m1 -4v2m1 -4v2m1 -3v1m1 -3v2m1 -4v2m1 -4v2m1 -3v1m1 -3v2m1 -4v2m1 -4v2m1 -4v2m1 -4v2m1 -3v1m1 -3v2m1 -4v2m1 -4v2" stroke="#a8c848"/>
<path d="M185.5 30v1m1 0v2m1 0v3m1 0v2m1 0v2m1 0v3m1 0v2m1 0v2m1 0v3m1 0v2m1 0v2m1 0v3m1 0v2m1 0v2m1 0v2m1 0v3m1 0v2m1 0v2m1 0v3m1 0v2m1 0v2m1 0v2m1 0v2m1 0v3m1 0v2m1 0v2m1 0v2m1 0v3m1 0v2m1 0v2m1 0v2m1 0v2m1 0v2m1 0v3m1 0v2m1 0v2m1 0v2m1 0v2m1 0v2m1 0v2m1 0v3m1 0v2m1 0v2m1 0v2m1 0v2m1 0v2m1 0v2m1 0v2m1 0v2m1 0v2m1 0v2m1 0v2m1 0v2m1 0v2m1 0v2m1 0v2m1 0v2m1 0v2m1 0v2m1 0v2m1 0v2m1 0v2m1 0v2m1 0v2m1 0v2m1 0v2m1 0v2m1 0v2m1 0v2m1 0v2m1 0v1m1 0v2m1 0v2m1 0v2m1 0v2m1 0v2m1 0v2m1 0v1m1 0v2m1 0v2m1 0v2m1 0v2m1 0v1m1 0v2m1 0v2m1 0v2m1 0v1m1 0v2m1 0v2m1 0v2m1 0v1m1 0v2m1 0v2m1 0v1m1 0v2m1 0v2m1 0v1m1 0v2m1 0v2m1 0v1m1 0v2m1 0v1m1 0v2m1 0v2m1 0v1m1 0v2m1 0v1m1 0v2m1 0v1m1 0v2m1 0v2m1 0v1m1 0v2m1 0v1m1 0v2m1 0v1m1 0v1m1 0v2m1 0v1m1 0v2m1 0v1m1 0v2m1 0v1m1 0v1m1 0v2m1 0v1m1 0v2m1 0v1m1 0v1m1 0v2m1 0v1m1 0v1m1 0v1m1 0v2m1 0v1m1 0v1m1 0v2m1 0v1m1 0v1m1 0v1m1 0v2m1 0v1m1 0v1m1 0v1m1 0v1m1 0v1m1 0v2m1 0v1m1 0v1m1 0v1m1 0v1m1 0v1m1 0v1m1 0v1m1 0v1m1 0v1m1 0v1m1 0v2m1 0v1m1 0v1m1 0v1m1 0v1m1 0v1m1 -1v1m1 0v1m1 0v1m1 0v1m1 0v1m1 0v1m1 0v1m1 0v1m1 0v1m1 0v1m1 0v1m1 -1v1m1 0v1m1 0v1m1 0v1m1 0v1m1 -1v1m1 0v1m1 0v1m1 0v1m1 -1v1m1 0v1m1 0v1m1 0v1m1 -1v1m1 0v1m1 0v1m1 -1v1m1 0v1m1 0v1m1 -1v1m1 0v1m1 -1v1m1 0v1m1 0v1m1 -1v1m1 0v1m1 -1v1m1 0v1m1 -1v1m1 0v1m1 -1v1m1 0v1m1 -1v1m1 0v1m1 -1v1m1 0v1m1 -1v1m1 0v1m1 -1v1m1 -1v1m1 0v1m1 -1v1m1 -1v1m1 0v1m1 -1v1m1 -1v1m1 0v1m1 -1v1m1 -1v1m1 0v1m1 -1v1m1 -1v1m1 -1v1m1 -1v1m1 0v1m1 -1v1m1 -1v1m1 -1v1m1 -1v1m1 0v1m1 -1v1m1 -1v1m1 -1v1m1 -1v1m1 -1v1m1 -1v1m1 -1v1m1 -1v1m1 -1v1m1 -1v1m1 -1v1m1 -1v1m1 -1v1m1 -1v1m1 -1v1m1 -1v1m1 -1v1m1 -1v1m1 -1v1m1 -1v1m1 -1v1m1 -1v1m1 -1v1m1 -1v1m1 -2v1m1 -1v1m1 -1v1m1 -1v1m1 -1v1m1 -2v1m1 -1v1m1 -1v1m1 -1v1m1 -2v1m1 -1v1m1 -1v1m1 -1v1m1 -2v1m1 -1v1m1 -1v1m1 -2v1m1 -1v1m1 -1v1m1 -2v1m1 -1v1m1 -2v1m1 -1v1m1 -1v1m1 -2v1m1 -1v1m1 -2v1m1 -1v1m1 -2v1m1 -1v1m1 -2v1m1 -1v1m1 -2v1m1 -1v1m1 -2v1m1 -2v1m1 -1v1m1 -2v1m1 -1v1m1 -2v1m1 -2v1m1 -1v1m1 -2v1m1 -2v1m1 -1v1m1 -2v1m1 -2v1m1 -1v1m1 -2v1m1 -2v1m1 -2v1m1 -1v1m1 -2v1m1 -2v1m1 -2v1m1 -1v1m1 -2v1m1 -2v1m1 -2v1m1 -2v1m1 -2v1m1 -1v1m1 -2v1m1 -2v1m1 -2v1m1 -2v1m1 -2v1m1 -2v1m1 -2v1m1 -2v1m1 -2v1m1 -2v1m1 -2v1m1 -2v1m1 -2v1m1 -2v1m1 -2v1m1 -2v1m1 -2v1m1 -2v1m1 -2v1m1 -2v1m1 -2v1m1 -3v2m1 -3v1m1 -2v1m1 -2v1m1 -2v1m1 -2v1m1 -2v1m1 -3v2m1 -3v1m1 -2v1m1 -2v1m1 -3v2m1 -3v1m1 -2v1m1 -2v1m1 -3v2m1 -3v1m1 -2v1m1 -3v2m1 -3v1m1 -2v1m1 -3v2m1 -3v1m1 -2v1m1 -3v2m1 -3v1m1 -2v1m1 -3v2m1 -3v1m1 -3v2m1 -3v1m1 -3v2m1 -3v1m1 -2v1m1 -3v2m1 -3v1m1 -3v2m1 -3v1m1 -3v2m1 -3v1m1 -3v2m1 -4v2m1 -3v1m1 -3v2m1 -3v1m1 -3v2m1 -3v1m1 -3v2m1 -4v2m1 -3v1m1 -3v2m1 -4v2m1 -3v1m1 -3v2m1 -4v2m1 -3v1m1 -3v2m1 -4v2m1 -3v1m1 -3v2m1 -4v2m1 -3v1m1 -3v2m1 -4v2m1 -4v2m1 -3v1m1 -3v2m1 -4v2m1 -4v2m1 -4v2m1 -3v1m1 -3v2m1 -4v2m1 -4v2m1 -4v2m1 -4v2m1 -3v1m1 -3v2m1 -4v2m1 -4v2m1 -4v2" stroke="#109070"/>
<path d="M181.5 30v1m1 0v2m1 0v2m1 0v3m1 0v2m1 0v2m1 0v3m1 0v2m1 0v2m1 0v2m1 0v3m1 0v2m1 0v2m1 0v3m1 0v2m1 0v2m1 0v2m1 0v3m1 0v2m1 0v2m1 0v2m1 0v3m1 0v2m1 0v2m1 0v2m1 0v3m1 0v2m1 0v2m1 0v2m1 0v2m1 0v3m1 0v2m1 0v2m1 0v2m1 0v2m1 0v2m1 0v2m1 0v3m1 0v2m1 0v2m1 0v2m1 0v2m1 0v2m1 0v2m1 0v2m1 0v2m1 0v2m1 0v3m1 0v2m1 0v2m1 0v2m1 0v2m1 0v2m1 0v2m1 0v2m1 0v2m1 0v2m1 0v2m1 0v2m1 0v2m1 0v2m1 0v2m1 0v2m1 0v2m1 0v1m1 0v2m1 0v2m1 0v2m1 0v2m1 0v2m1 0v2m1 0v2m1 0v2m1 0v2m1 0v1m1 0v2m1 0v2m1 0v2m1 0v2m1 0v2m1 0v1m1 0v2m1 0v2m1 0v2m1 0v1m1 0v2m1 0v2m1 0v2m1 0v1m1 0v2m1 0v2m1 0v2m1 0v1m1 0v2m1 0v2m1 0v1m1 0v2m1 0v2m1 0v1m1 0v2m1 0v1m1 0v2m1 0v2m1 0v1m1 0v2m1 0v1m1 0v2m1 0v2m1 0v1m1 0v2m1 0v1m1 0v2m1 0v1m1 0v2m1 0v1m1 0v2m1 0v1m1 0v2m1 0v1m1 0v1m1 0v2m1 0v1m1 0v2m1 0v1m1 0v1m1 0v2m1 0v1m1 0v2m1 0v1m1 0v1m1 0v2m1 0v1m1 0v1m1 0v1m1 0v2m1 0v1m1 0v1m1 0v2m1 0v1m1 0v1m1 0v1m1 0v1m1 0v2m1 0v1m1 0v1m1 0v1m1 0v1m1 0v1m1 0v2m1 0v1m1 0v1m1 0v1m1 0v1m1 0v1m1 0v1m1 0v1m1 0v1m1 0v1m1 0v1m1 0v1m1 0v1m1 0v1m1 0v1m1 0v1m1 0v1m1 0v1m1 0v1m1 0v1m1 0v1m1 0v1m1 0v1m1 0v1m1 -1v1m1 0v1m1 0v1m1 0v1m1 0v1m1 0v1m1 -1v1m1 0v1m1 0v1m1 0v1m1 0v1m1 -1v1m1 0v1m1 0v1m1 -1v1m1 0v1m1 0v1m1 0v1m1 -1v1m1 0v1m1 -1v1m1 0v1m1 0v1m1 -1v1m1 0v1m1 0v1m1 -1v1m1 0v1m1 -1v1m1 0v1m1 -1v1m1 0v1m1 -1v1m1 0v1m1 -1v1m1 0v1m1 -1v1m1 0v1m1 -1v1m1 -1v1m1 0v1m1 -1v1m1 0v1m1 -1v1m1 -1v1m1 0v1m1 -1v1m1 -1v1m1 0v1m1 -1v1m1 -1v1m1 -1v1m1 0v1m1 -1v1m1 -1v1m1 -1v1m1 0v1m1 -1v1m1 -1v1m1 -1v1m1 -1v1m1 0v1m1 -1v1m1 -1v1m1 -1v1m1 -1v1m1 -1v1m1 -1v1m1 -1v1m1 -1v1m1 -1v1m1 -1v1m1 -1v1m1 -1v1m1 -1v1m1 -1v1m1 -1v1m1 -1v1m1 -1v1m1 -1v1m1 -1v1m1 -1v1m1 -1v1m1 -1v1m1 -1v1m1 -1v1m1 -2v1m1 -1v1m1 -1v1m1 -1v1m1 -1v1m1 -2v1m1 -1v1m1 -1v1m1 -1v1m1 -1v1m1 -2v1m1 -1v1m1 -1v1m1 -2v1m1 -1v1m1 -1v1m1 -2v1m1 -1v1m1 -1v1m1 -2v1m1 -1v1m1 -2v1m1 -1v1m1 -1v1m1 -2v1m1 -1v1m1 -2v1m1 -1v1m1 -2v1m1 -1v1m1 -2v1m1 -1v1m1 -2v1m1 -1v1m1 -2v1m1 -1v1m1 -2v1m1 -2v1m1 -1v1m1 -2v1m1 -1v1m1 -2v1m1 -2v1m1 -1v1m1 -2v1m1 -2v1m1 -1v1m1 -2v1m1 -2v1m1 -2v1m1 -1v1m1 -2v1m1 -2v1m1 -2v1m1 -1v1m1 -2v1m1 -2v1m1 -2v1m1 -2v1m1 -2v1m1 -1v1m1 -2v1m1 -2v1m1 -2v1m1 -2v1m1 -2v1m1 -2v1m1 -2v1m1 -2v1m1 -2v1m1 -2v1m1 -2v1m1 -2v1m1 -2v1m1 -2v1m1 -2v1m1 -2v1m1 -2v1m1 -2v1m1 -2v1m1 -2v1m1 -2v1m1 -2v1m1 -2v1m1 -2v1m1 -3v2m1 -3v1m1 -2v1m1 -2v1m1 -2v1m1 -2v1m1 -3v2m1 -3v1m1 -2v1m1 -2v1m1 -3v2m1 -3v1m1 -2v1m1 -2v1m1 -3v2m1 -3v1m1 -2v1m1 -3v2m1 -3v1m1 -2v1m1 -3v2m1 -3v1m1 -2v1m1 -3v2m1 -3v1m1 -2v1m1 -3v2m1 -3v1m1 -3v2m1 -3v1m1 -3v2m1 -3v1m1 -3v2m1 -3v1m1 -3v2m1 -3v1m1 -3v2m1 -3v1m1 -3v2m1 -3v1m1 -3v2m1 -3v1m1 -3v2m1 -3v1m1 -3v2m1 -4v2m1 -3v1m1 -3v2m1 -3v1m1 -3v2m1 -4v2m1 -3v1m1 -3v2m1 -4v2m1 -3v1m1 -3v2m1 -4v2m1 -4v2m1 -3v1m1 -3v2m1 -4v2m1 -3v1m1 -3v2m1 -4v2m1 -4v2m1 -4v2m1 -3v1m1 -3v2m1 -4v2m1 -4v2m1 -4v2m1 -3v1m1 -3v2m1 -4v2m1 -4v2m1 -4v2m1 -4v2m1 -4v2m1 -3v1m1 -3v2m1 -4v2m1 -4v2m1 -4v2" stroke="#c060c0"/>
<path d="M178.5 30v2m1 0v3m1 0v2m1 0v2m1 0v3m1 0v2m1 0v2m1 0v3m1 0v2m1 0v2m1 0v2m1 0v3m1 0v2m1 0v2m1 0v3m1 0v2m1 0v2m1 0v2m1 0v3m1 0v2m1 0v2m1 0v2m1 0v3m1 0v2m1 0v2m1 0v2m1 0v2m1 0v3m1 0v2m1 0v2m1 0v2m1 0v2m1 0v2m1 0v3m1 0v2m1 0v2m1 0v2m1 0v2m1 0v2m1 0v2m1 0v3m1 0v2m1 0v2m1 0v2m1 0v2m1 0v2m1 0v2m1 0v2m1 0v2m1 0v2m1 0v2m1 0v2m1 0v2m1 0v2m1 0v2m1 0v2m1 0v2m1 0v2m1 0v2m1 0v2m1 0v2m1 0v2m1 0v2m1 0v2m1 0v2m1 0v2m1 0v2m1 0v2m1 0v2m1 0v1m1 0v2m1 0v2m1 0v2m1 0v2m1 0v2m1 0v2m1 0v1m1 0v2m1 0v2m1 0v2m1 0v2m1 0v1m1 0v2m1 0v2m1 0v2m1 0v1m1 0v2m1 0v2m1 0v2m1 0v1m1 0v2m1 0v2m1 0v1m1 0v2m1 0v2m1 0v1m1 0v2m1 0v2m1 0v1m1 0v2m1 0v2m1 0v1m1 0v2m1 0v1m1 0v2m1 0v2m1 0v1m1 0v2m1 0v1m1 0v2m1 0v1m1 0v2m1 0v1m1 0v2m1 0v1m1 0v2m1 0v1m1 0v2m1 0v1m1 0v1m1 0v2m1 0v1m1 0v2m1 0v1m1 0v1m1 0v2m1 0v1m1 0v2m1 0v1m1 0v1m1 0v2m1 0v1m1 0v1m1 0v1m1 0v2m1 0v1m1 0v1m1 0v1m1 0v2m1 0v1m1 0v1m1 0v1m1 0v1m1 0v2m1 0v1m1 0v1m1 0v1m1 0v1m1 0v1m1 0v1m1 0v2m1 0v1m1 0v1m1 0v1m1 0v1m1 0v1m1 0v1m1 0v1m1 0v1m1 0v1m1 0v1m1 0v1m1 0v1m1 0v1m1 0v1m1 0v1m1 0v1m1 0v1m1 0v1m1 -1v1m1 0v1m1 0v1m1 0v1m1 0v1m1 0v1m1 0v1m1 -1v1m1 0v1m1 0v1m1 0v1m1 0v1m1 -1v1m1 0v1m1 0v1m1 0v1m1 -1v1m1 0v1m1 0v1m1 -1v1m1 0v1m1 0v1m1 -1v1m1 0v1m1 0v1m1 -1v1m1 0v1m1 -1v1m1 0v1m1 -1v1m1 0v1m1 0v1m1 -1v1m1 0v1m1 -1v1m1 0v1m1 -1v1m1 0v1m1 -1v1m1 -1v1m1 0v1m1 -1v1m1 0v1m1 -1v1m1 -1v1m1 0v1m1 -1v1m1 0v1m1 -1v1m1 -1v1m1 0v1m1 -1v1m1 -1v1m1 -1v1m1 0v1m1 -1v1m1 -1v1m1 -1v1m1 0v1m1 -1v1m1 -1v1m1 -1v1m1 -1v1m1 -1v1m1 0v1m1 -1v1m1 -1v1m1 -1v1m1 -1v1m1 -1v1m1 -1v1m1 -1v1m1 -1v1m1 -1v1m1 -1v1m1 -1v1m1 -1v1m1 -1v1m1 -1v1m1 -1v1m1 -1v1m1 -1v1m1 -1v1m1 -1v1m1 -1v1m1 -1v1m1 -1v1m1 -1v1m1 -2v1m1 -1v1m1 -1v1m1 -1v1m1 -1v1m1 -1v1m1 -2v1m1 -1v1m1 -1v1m1 -1v1m1 -2v1m1 -1v1m1 -1v1m1 -2v1m1 -1v1m1 -1v1m1 -2v1m1 -1v1m1 -1v1m1 -2v1m1 -1v1m1 -1v1m1 -2v1m1 -1v1m1 -2v1m1 -1v1m1 -2v1m1 -1v1m1 -2v1m1 -1v1m1 -2v1m1 -1v1m1 -2v1m1 -1v1m1 -2v1m1 -1v1m1 -2v1m1 -1v1m1 -2v1m1 -2v1m1 -1v1m1 -2v1m1 -2v1m1 -1v1m1 -2v1m1 -2v1m1 -1v1m1 -2v1m1 -2v1m1 -1v1m1 -2v1m1 -2v1m1 -2v1m1 -1v1m1 -2v1m1 -2v1m1 -2v1m1 -2v1m1 -1v1m1 -2v1m1 -2v1m1 -2v1m1 -2v1m1 -2v1m1 -2v1m1 -2v1m1 -2v1m1 -1v1m1 -2v1m1 -2v1m1 -2v1m1 -2v1m1 -2v1m1 -2v1m1 -2v1m1 -2v1m1 -2v1m1 -2v1m1 -2v1m1 -3v2m1 -3v1m1 -2v1m1 -2v1m1 -2v1m1 -2v1m1 -2v1m1 -2v1m1 -3v2m1 -3v1m1 -2v1m1 -2v1m1 -2v1m1 -2v1m1 -3v2m1 -3v1m1 -2v1m1 -2v1m1 -3v2m1 -3v1m1 -2v1m1 -3v2m1 -3v1m1 -2v1m1 -3v2m1 -3v1m1 -2v1m1 -3v2m1 -3v1m1 -2v1m1 -3v2m1 -3v1m1 -3v2m1 -3v1m1 -2v1m1 -3v2m1 -3v1m1 -3v2m1 -3v1m1 -3v2m1 -3v1m1 -3v2m1 -3v1m1 -3v2m1 -3v1m1 -3v2m1 -3v1m1 -3v2m1 -3v1m1 -3v2m1 -4v2m1 -3v1m1 -3v2m1 -3v1m1 -3v2m1 -4v2m1 -3v1m1 -3v2m1 -4v2m1 -3v1m1 -3v2m1 -4v2m1 -3v1m1 -3v2m1 -4v2m1 -4v2m1 -3v1m1 -3v2m1 -4v2m1 -4v2m1 -3v1m1 -3v2m1 -4v2m1 -4v2m1 -3v1m1 -3v2m1 -4v2m1 -4v2m1 -4v2m1 -4v2m1 -4v2m1 -3v1m1 -3v2m1 -4v2m1 -4v2m1 -4v2m1 -4v2m1 -4v2m1 -4v2m1 -4v2m1 -4v2m1 -3v1m1 -3v2" stroke="#30e050"/>
<path d="M174.5 30v2m1 0v2m1 0v2m1 0v3m1 0v2m1 0v2m1 0v3m1 0v2m1 0v2m1 0v3m1 0v2m1 0v2m1 0v2m1 0v3m1 0v2m1 0v2m1 0v3m1 0v2m1 0v2m1 0v2m1 0v3m1 0v2m1 0v2m1 0v2m1 0v2m1 0v3m1 0v2m1 0v2m1 0v2m1 0v2m1 0v3m1 0v2m1 0v2m1 0v2m1 0v2m1 0v2m1 0v3m1 0v2m1 0v2m1 0v2m1 0v2m1 0v2m1 0v2m1 0v2m1 0v2m1 0v2m1 0v2m1 0v3m1 0v2m1 0v2m1 0v2m1 0v2m1 0v2m1 0v2m1 0v2m1 0v2m1 0v2m1 0v2m1 0v2m1 0v2m1 0v2m1 0v2m1 0v2m1 0v1m1 0v2m1 0v2m1 0v2m1 0v2m1 0v2m1 0v2m1 0v2m1 0v2m1 0v2m1 0v1m1 0v2m1 0v2m1 0v2m1 0v2m1 0v2m1 0v1m1 0v2m1 0v2m1 0v2m1 0v2m1 0v1m1 0v2m1 0v2m1 0v2m1 0v1m1 0v2m1 0v2m1 0v1m1 0v2m1 0v2m1 0v1m1 0v2m1 0v2m1 0v1m1 0v2m1 0v2m1 0v1m1 0v2m1 0v1m1 0v2m1 0v2m1 0v1m1 0v2m1 0v1m1 0v2m1 0v1m1 0v2m1 0v1m1 0v2m1 0v1m1 0v2m1 0v1m1 0v2m1 0v1m1 0v2m1 0v1m1 0v2m1 0v1m1 0v1m1 0v2m1 0v1m1 0v1m1 0v2m1 0v1m1 0v2m1 0v1m1 0v1m1 0v1m1 0v2m1 0v1m1 0v1m1 0v2m1 0v1m1 0v1m1 0v1m1 0v2m1 0v1m1 0v1m1 0v1m1 0v1m1 0v2m1 0v1m1 0v1m1 0v1m1 0v1m1 0v1m1 0v1m1 0v1m1 0v1m1 0v2m1 0v1m1 0v1m1 0v1m1 0v1m1 0v1m1 0v1m1 0v1m1 0v1m1 0v1m1 0v1m1 0v1m1 0v1m1 0v1m1 -1v1m1 0v1m1 0v1m1 0v1m1 0v1m1 0v1m1 0v1m1 0v1m1 -1v1m1 0v1m1 0v1m1 0v1m1 0v1m1 -1v1m1 0v1m1 0v1m1 0v1m1 -1v1m1 0v1m1 0v1m1 -1v1m1 0v1m1 0v1m1 0v1m1 -1v1m1 0v1m1 -1v1m1 0v1m1 0v1m1 -1v1m1 0v1m1 -1v1m1 0v1m1 -1v1m1 0v1m1 -1v1m1 0v1m1 -1v1m1 0v1m1 -1v1m1 0v1m1 -1v1m1 0v1m1 -1v1m1 0v1m1 -1v1m1 -1v1m1 0v1m1 -1v1m1 -1v1m1 0v1m1 -1v1m1 -1v1m1 0v1m1 -1v1m1 -1v1m1 0v1m1 -1v1m1 -1v1m1 -1v1m1 0v1m1 -1v1m1 -1v1m1 -1v1m1 -1v1m1 -1v1m1 0v1m1 -1v1m1 -1v1m1 -1v1m1 -1v1m1 -1v1m1 -1v1m1 -1v1m1 -1v1m1 -1v1m1 -1v1m1 -1v1m1 -1v1m1 -1v1m1 -1v1m1 -1v1m1 -1v1m1 -1v1m1 -1v1m1 -1v1m1 -1v1m1 -1v1m1 -1v1m1 -1v1m1 -2v1m1 -1v1m1 -1v1m1 -1v1m1 -1v1m1 -1v1m1 -2v1m1 -1v1m1 -1v1m1 -1v1m1 -2v1m1 -1v1m1 -1v1m1 -1v1m1 -2v1m1 -1v1m1 -1v1m1 -2v1m1 -1v1m1 -2v1m1 -1v1m1 -1v1m1 -2v1m1 -1v1m1 -2v1m1 -1v1m1 -1v1m1 -2v1m1 -1v1m1 -2v1m1 -1v1m1 -2v1m1 -1v1m1 -2v1m1 -2v1m1 -1v1m1 -2v1m1 -1v1m1 -2v1m1 -1v1m1 -2v1m1 -2v1m1 -1v1m1 -2v1m1 -2v1m1 -1v1m1 -2v1m1 -2v1m1 -1v1m1 -2v1m1 -2v1m1 -2v1m1 -1v1m1 -2v1m1 -2v1m1 -2v1m1 -2v1m1 -1v1m1 -2v1m1 -2v1m1 -2v1m1 -2v1m1 -2v1m1 -2v1m1 -1v1m1 -2v1m1 -2v1m1 -2v1m1 -2v1m1 -2v1m1 -2v1m1 -2v1m1 -2v1m1 -2v1m1 -2v1m1 -2v1m1 -2v1m1 -2v1m1 -2v1m1 -2v1m1 -2v1m1 -2v1m1 -3v2m1 -3v1m1 -2v1m1 -2v1m1 -2v1m1 -2v1m1 -2v1m1 -3v2m1 -3v1m1 -2v1m1 -2v1m1 -2v1m1 -3v2m1 -3v1m1 -2v1m1 -2v1m1 -3v2m1 -3v1m1 -2v1m1 -3v2m1 -3v1m1 -2v1m1 -3v2m1 -3v1m1 -2v1m1 -3v2m1 -3v1m1 -2v1m1 -3v2m1 -3v1m1 -3v2m1 -3v1m1 -2v1m1 -3v2m1 -3v1m1 -3v2m1 -3v1m1 -3v2m1 -3v1m1 -3v2m1 -3v1m1 -3v2m1 -3v1m1 -3v2m1 -3v1m1 -3v2m1 -4v2m1 -3v1m1 -3v2m1 -3v1m1 -3v2m1 -4v2m1 -3v1m1 -3v2m1 -4v2m1 -3v1m1 -3v2m1 -4v2m1 -3v1m1 -3v2m1 -4v2m1 -3v1m1 -3v2m1 -4v2m1 -4v2m1 -3v1m1 -3v2m1 -4v2m1 -4v2m1 -3v1m1 -3v2m1 -4v2m1 -4v2m1 -4v2m1 -3v1m1 -3v2m1 -4v2m1 -4v2m1 -4v2m1 -4v2m1 -4v2m1 -4v2m1 -3v1m1 -3v2m1 -4v2m1 -4v2m1 -4v2m1 -4v2m1 -4v2m1 -4v2m1 -4v2m1 -4v2m1 -4v2m1 -4v2" stroke="#e02080"/>
<path d="M170.5 30v1m1 0v2m1 0v3m1 0v2m1 0v2m1 0v3m1 0v2m1 0v2m1 0v3m1 0v2m1 0v2m1 0v3m1 0v2m1 0v2m1 0v2m1 0v3m1 0v2m1 0v2m1 0v2m1 0v3m1 0v2m1 0v2m1 0v2m1 0v3m1 0v2m1 0v2m1 0v2m1 0v2m1 0v3m1 0v2m1 0v2m1 0v2m1 0v2m1 0v3m1 0v2m1 0v2m1 0v2m1 0v2m1 0v2m1 0v2m1 0v2m1 0v3m1 0v2m1 0v2m1 0v2m1 0v2m1 0v2m1 0v2m1 0v2m1 0v2m1 0v2m1 0v2m1 0v2m1 0v2m1 0v2m1 0v2m1 0v2m1 0v2m1 0v2m1 0v2m1 0v2m1 0v2m1 0v2m1 0v2m1 0v2m1 0v2m1 0v2m1 0v2m1 0v2m1 0v1m1 0v2m1 0v2m1 0v2m1 0v2m1 0v2m1 0v2m1 0v1m1 0v2m1 0v2m1 0v2m1 0v2m1 0v2m1 0v1m1 0v2m1 0v2m1 0v2m1 0v1m1 0v2m1 0v2m1 0v2m1 0v1m1 0v2m1 0v2m1 0v1m1 0v2m1 0v2m1 0v1m1 0v2m1 0v2m1 0v1m1 0v2m1 0v1m1 0v2m1 0v2m1 0v1m1 0v2m1 0v1m1 0v2m1 0v1m1 0v2m1 0v1m1 0v2m1 0v1m1 0v2m1 0v1m1 0v2m1 0v1m1 0v2m1 0v1m1 0v2m1 0v1m1 0v2m1 0v1m1 0v1m1 0v2m1 0v1m1 0v1m1 0v2m1 0v1m1 0v2m1 0v1m1 0v1m1 0v1m1 0v2m1 0v1m1 0v1m1 0v2m1 0v1m1 0v1m1 0v1m1 0v1m1 0v2m1 0v1m1 0v1m1 0v1m1 0v1m1 0v2m1 0v1m1 0v1m1 0v1m1 0v1m1 0v1m1 0v1m1 0v1m1 0v1m1 0v1m1 0v1m1 0v1m1 0v1m1 0v2m1 0v1m1 -1v1m1 0v1m1 0v1m1 0v1m1 0v1m1 0v1m1 0v1m1 0v1m1 0v1m1 0v1m1 0v1m1 0v1m1 0v1m1 -1v1m1 0v1m1 0v1m1 0v1m1 0v1m1 -1v1m1 0v1m1 0v1m1 0v1m1 -1v1m1 0v1m1 0v1m1 0v1m1 -1v1m1 0v1m1 0v1m1 -1v1m1 0v1m1 0v1m1 -1v1m1 0v1m1 -1v1m1 0v1m1 0v1m1 -1v1m1 0v1m1 -1v1m1 0v1m1 -1v1m1 0v1m1 -1v1m1 0v1m1 -1v1m1 0v1m1 -1v1m1 0v1m1 -1v1m1 -1v1m1 0v1m1 -1v1m1 0v1m1 -1v1m1 -1v1m1 0v1m1 -1v1m1 -1v1m1 0v1m1 -1v1m1 -1v1m1 0v1m1 -1v1m1 -1v1m1 -1v1m1 -1v1m1 0v1m1 -1v1m1 -1v1m1 -1v1m1 -1v1m1 0v1m1 -1v1m1 -1v1m1 -1v1m1 -1v1m1 -1v1m1 -1v1m1 -1v1m1 -1v1m1 -1v1m1 -1v1m1 -1v1m1 -1v1m1 -1v1m1 -1v1m1 -1v1m1 -1v1m1 -1v1m1 -1v1m1 -1v1m1 -1v1m1 -1v1m1 -1v1m1 -1v1m1 -1v1m1 -2v1m1 -1v1m1 -1v1m1 -1v1m1 -1v1m1 -2v1m1 -1v1m1 -1v1m1 -1v1m1 -2v1m1 -1v1m1 -1v1m1 -1v1m1 -2v1m1 -1v1m1 -1v1m1 -2v1m1 -1v1m1 -1v1m1 -2v1m1 -1v1m1 -2v1m1 -1v1m1 -1v1m1 -2v1m1 -1v1m1 -2v1m1 -1v1m1 -2v1m1 -1v1m1 -2v1m1 -1v1m1 -2v1m1 -1v1m1 -2v1m1 -2v1m1 -1v1m1 -2v1m1 -1v1m1 -2v1m1 -2v1m1 -1v1m1 -2v1m1 -2v1m1 -1v1m1 -2v1m1 -2v1m1 -1v1m1 -2v1m1 -2v1m1 -1v1m1 -2v1m1 -2v1m1 -2v1m1 -2v1m1 -1v1m1 -2v1m1 -2v1m1 -2v1m1 -2v1m1 -2v1m1 -1v1m1 -2v1m1 -2v1m1 -2v1m1 -2v1m1 -2v1m1 -2v1m1 -2v1m1 -2v1m1 -2v1m1 -2v1m1 -2v1m1 -2v1m1 -2v1m1 -2v1m1 -2v1m1 -2v1m1 -2v1m1 -2v1m1 -2v1m1 -2v1m1 -2v1m1 -3v2m1 -3v1m1 -2v1m1 -2v1m1 -2v1m1 -2v1m1 -2v1m1 -3v2m1 -3v1m1 -2v1m1 -2v1m1 -3v2m1 -3v1m1 -2v1m1 -2v1m1 -3v2m1 -3v1m1 -2v1m1 -3v2m1 -3v1m1 -2v1m1 -3v2m1 -3v1m1 -2v1m1 -3v2m1 -3v1m1 -2v1m1 -3v2m1 -3v1m1 -3v2m1 -3v1m1 -3v2m1 -3v1m1 -2v1m1 -3v2m1 -3v1m1 -3v2m1 -3v1m1 -3v2m1 -3v1m1 -3v2m1 -4v2m1 -3v1m1 -3v2m1 -3v1m1 -3v2m1 -3v1m1 -3v2m1 -4v2m1 -3v1m1 -3v2m1 -3v1m1 -3v2m1 -4v2m1 -3v1m1 -3v2m1 -4v2m1 -4v2m1 -3v1m1 -3v2m1 -4v2m1 -3v1m1 -3v2m1 -4v2m1 -4v2m1 -3v1m1 -3v2m1 -4v2m1 -4v2m1 -4v2m1 -3v1m1 -3v2m1 -4v2m1 -4v2m1 -4v2m1 -4v2m1 -3v1m1 -3v2m1 -4v2m1 -4v2m1 -4v2m1 -4v2m1 -4v2m1 -4v2m1 -4v2m1 -4v2m1 -3v1m1 -3v2m1 -4v2m1 -4v2m1 -4v2m1 -4v2m1 -4v2m1 -4v2m1 -4v2m1 -4v2" stroke="#00c0e0"/>
<path d="M167.5 30v3m1 0v2m1 0v2m1 0v3m1 0v2m1 0v2m1 0v3m1 0v2m1 0v2m1 0v3m1 0v2m1 0v2m1 0v3m1 0v2m1 0v2m1 0v2m1 0v3m1 0v2m1 0v2m1 0v2m1 0v3m1 0v2m1 0v2m1 0v2m1 0v2m1 0v3m1 0v2m1 0v2m1 0v2m1 0v2m1 0v3m1 0v2m1 0v2m1 0v2m1 0v2m1 0v2m1 0v3m1 0v2m1 0v2m1 0v2m1 0v2m1 0v2m1 0v2m1 0v2m1 0v2m1 0v2m1 0v2m1 0v3m1 0v2m1 0v2m1 0v2m1 0v2m1 0v2m1 0v2m1 0v2m1 0v2m1 0v2m1 0v2m1 0v2m1 0v2m1 0v2m1 0v2m1 0v2m1 0v1m1 0v2m1 0v2m1 0v2m1 0v2m1 0v2m1 0v2m1 0v2m1 0v2m1 0v1m1 0v2m1 0v2m1 0v2m1 0v2m1 0v2m1 0v1m1 0v2m1 0v2m1 0v2m1 0v2m1 0v1m1 0v2m1 0v2m1 0v2m1 0v1m1 0v2m1 0v2m1 0v1m1 0v2m1 0v2m1 0v2m1 0v1m1 0v2m1 0v2m1 0v1m1 0v2m1 0v1m1 0v2m1 0v2m1 0v1m1 0v2m1 0v1m1 0v2m1 0v1m1 0v2m1 0v2m1 0v1m1 0v2m1 0v1m1 0v2m1 0v1m1 0v2m1 0v1m1 0v1m1 0v2m1 0v1m1 0v2m1 0v1m1 0v2m1 0v1m1 0v1m1 0v2m1 0v1m1 0v1m1 0v2m1 0v1m1 0v1m1 0v2m1 0v1m1 0v1m1 0v2m1 0v1m1 0v1m1 0v1m1 0v2m1 0v1m1 0v1m1 0v1m1 0v2m1 0v1m1 0v1m1 0v1m1 0v1m1 0v1m1 0v2m1 0v1m1 0v1m1 0v1m1 0v1m1 0v1m1 0v1m1 0v1m1 0v1m1 0v1m1 0v1m1 0v1m1 0v1m1 0v1m1 0v1m1 0v1m1 0v1m1 0v1m1 0v1m1 0v1m1 0v1m1 0v1m1 0v1m1 0v1m1 -1v1m1 0v1m1 0v1m1 0v1m1 0v1m1 0v1m1 -1v1m1 0v1m1 0v1m1 0v1m1 0v1m1 -1v1m1 0v1m1 0v1m1 -1v1m1 0v1m1 0v1m1 0v1m1 -1v1m1 0v1m1 -1v1m1 0v1m1 0v1m1 -1v1m1 0v1m1 -1v1m1 0v1m1 0v1m1 -1v1m1 0v1m1 -1v1m1 0v1m1 -1v1m1 0v1m1 -1v1m1 0v1m1 -1v1m1 0v1m1 -1v1m1 -1v1m1 0v1m1 -1v1m1 0v1m1 -1v1m1 -1v1m1 0v1m1 -1v1m1 -1v1m1 0v1m1 -1v1m1 -1v1m1 -1v1m1 0v1m1 -1v1m1 -1v1m1 -1v1m1 0v1m1 -1v1m1 -1v1m1 -1v1m1 -1v1m1 0v1m1 -1v1m1 -1v1m1 -1v1m1 -1v1m1 -1v1m1 -1v1m1 -1v1m1 -1v1m1 -1v1m1 -1v1m1 -1v1m1 -1v1m1 -1v1m1 -1v1m1 -1v1m1 -1v1m1 -1v1m1 -1v1m1 -1v1m1 -1v1m1 -1v1m1 -1v1m1 -1v1m1 -1v1m1 -2v1m1 -1v1m1 -1v1m1 -1v1m1 -1v1m1 -2v1m1 -1v1m1 -1v1m1 -1v1m1 -1v1m1 -2v1m1 -1v1m1 -1v1m1 -2v1m1 -1v1m1 -1v1m1 -2v1m1 -1v1m1 -1v1m1 -2v1m1 -1v1m1 -2v1m1 -1v1m1 -1v1m1 -2v1m1 -1v1m1 -2v1m1 -1v1m1 -2v1m1 -1v1m1 -2v1m1 -1v1m1 -2v1m1 -1v1m1 -2v1m1 -1v1m1 -2v1m1 -2v1m1 -1v1m1 -2v1m1 -1v1m1 -2v1m1 -2v1m1 -1v1m1 -2v1m1 -2v1m1 -1v1m1 -2v1m1 -2v1m1 -2v1m1 -1v1m1 -2v1m1 -2v1m1 -2v1m1 -1v1m1 -2v1m1 -2v1m1 -2v1m1 -2v1m1 -1v1m1 -2v1m1 -2v1m1 -2v1m1 -2v1m1 -2v1m1 -2v1m1 -2v1m1 -2v1m1 -2v1m1 -2v1m1 -2v1m1 -2v1m1 -2v1m1 -2v1m1 -2v1m1 -2v1m1 -2v1m1 -2v1m1 -2v1m1 -2v1m1 -2v1m1 -2v1m1 -2v1m1 -2v1m1 -2v1m1 -2v1m1 -3v2m1 -3v1m1 -2v1m1 -2v1m1 -2v1m1 -3v2m1 -3v1m1 -2v1m1 -2v1m1 -2v1m1 -3v2m1 -3v1m1 -2v1m1 -3v2m1 -3v1m1 -2v1m1 -3v2m1 -3v1m1 -2v1m1 -3v2m1 -3v1m1 -2v1m1 -3v2m1 -3v1m1 -2v1m1 -3v2m1 -3v1m1 -3v2m1 -3v1m1 -3v2m1 -3v1m1 -3v2m1 -3v1m1 -3v2m1 -3v1m1 -3v2m1 -3v1m1 -3v2m1 -3v1m1 -3v2m1 -3v1m1 -3v2m1 -3v1m1 -3v2m1 -4v2m1 -3v1m1 -3v2m1 -3v1m1 -3v2m1 -4v2m1 -3v1m1 -3v2m1 -4v2m1 -3v1m1 -3v2m1 -4v2m1 -3v1m1 -3v2m1 -4v2m1 -4v2m1 -3v1m1 -3v2m1 -4v2m1 -4v2m1 -4v2m1 -3v1m1 -3v2m1 -4v2m1 -4v2m1 -4v2m1 -3v1m1 -3v2m1 -4v2m1 -4v2m1 -4v2m1 -4v2m1 -4v2m1 -3v1m1 -3v2m1 -4v2m1 -4v2m1 -4v2m1 -4v2m1 -4v2m1 -4v2m1 -4v2m1 -4v2m1 -4v2m1 -4v2m1 -4v2m1 -4v2m1 -4v2m1 -4v2m1 -4v2m1 -4v2m1 -4v2m1 -4v2" stroke="#406080"/>
<path d="M163.5 30v2m1 0v3m1 0v2m1 0v2m1 0v3m1 0v2m1 0v2m1 0v2m1 0v3m1 0v2m1 0v2m1 0v3m1 0v2m1 0v2m1 0v3m1 0v2m1 0v2m1 0v2m1 0v3m1 0v2m1 0v2m1 0v2m1 0v2m1 0v3m1 0v2m1 0v2m1 0v2m1 0v3m1 0v2m1 0v2m1 0v2m1 0v2m1 0v2m1 0v3m1 0v2m1 0v2m1 0v2m1 0v2m1 0v2m1 0v2m1 0v2m1 0v3m1 0v2m1 0v2m1 0v2m1 0v2m1 0v2m1 0v2m1 0v2m1 0v2m1 0v2m1 0v2m1 0v2m1 0v2m1 0v2m1 0v2m1 0v2m1 0v2m1 0v2m1 0v2m1 0v2m1 0v2m1 0v2m1 0v2m1 0v2m1 0v2m1 0v2m1 0v2m1 0v1m1 0v2m1 0v2m1 0v2m1 0v2m1 0v2m1 0v2m1 0v2m1 0v1m1 0v2m1 0v2m1 0v2m1 0v2m1 0v1m1 0v2m1 0v2m1 0v2m1 0v1m1 0v2m1 0v2m1 0v2m1 0v1m1 0v2m1 0v2m1 0v1m1 0v2m1 0v2m1 0v1m1 0v2m1 0v2m1 0v1m1 0v2m1 0v2m1 0v1m1 0v2m1 0v1m1 0v2m1 0v2m1 0v1m1 0v2m1 0v1m1 0v2m1 0v1m1 0v2m1 0v1m1 0v2m1 0v1m1 0v2m1 0v1m1 0v2m1 0v1m1 0v1m1 0v2m1 0v1m1 0v2m1 0v1m1 0v1m1 0v2m1 0v1m1 0v1m1 0v2m1 0v1m1 0v1m1 0v2m1 0v1m1 0v1m1 0v2m1 0v1m1 0v1m1 0v1m1 0v2m1 0v1m1 0v1m1 0v1m1 0v1m1 0v2m1 0v1m1 0v1m1 0v1m1 0v1m1 0v1m1 0v1m1 0v2m1 0v1m1 0v1m1 0v1m1 0v1m1 0v1m1 0v1m1 0v1m1 0v1m1 0v1m1 0v1m1 0v1m1 0v1m1 0v1m1 0v1m1 0v1m1 0v1m1 0v1m1 0v1m1 -1v1m1 0v1m1 0v1m1 0v1m1 0v1m1 0v1m1 0v1m1 -1v1m1 0v1m1 0v1m1 0v1m1 0v1m1 -1v1m1 0v1m1 0v1m1 0v1m1 -1v1m1 0v1m1 0v1m1 -1v1m1 0v1m1 0v1m1 -1v1m1 0v1m1 0v1m1 -1v1m1 0v1m1 -1v1m1 0v1m1 -1v1m1 0v1m1 0v1m1 -1v1m1 0v1m1 -1v1m1 0v1m1 -1v1m1 0v1m1 -1v1m1 -1v1m1 0v1m1 -1v1m1 0v1m1 -1v1m1 -1v1m1 0v1m1 -1v1m1 0v1m1 -1v1m1 -1v1m1 0v1m1 -1v1m1 -1v1m1 -1v1m1 0v1m1 -1v1m1 -1v1m1 -1v1m1 0v1m1 -1v1m1 -1v1m1 -1v1m1 -1v1m1 -1v1m1 0v1m1 -1v1m1 -1v1m1 -1v1m1 -1v1m1 -1v1m1 -1v1m1 -1v1m1 -1v1m1 -1v1m1 -1v1m1 -1v1m1 -1v1m1 -1v1m1 -1v1m1 -1v1m1 -1v1m1 -1v1m1 -1v1m1 -1v1m1 -1v1m1 -1v1m1 -1v1m1 -1v1m1 -2v1m1 -1v1m1 -1v1m1 -1v1m1 -1v1m1 -1v1m1 -2v1m1 -1v1m1 -1v1m1 -1v1m1 -2v1m1 -1v1m1 -1v1m1 -2v1m1 -1v1m1 -1v1m1 -2v1m1 -1v1m1 -1v1m1 -2v1m1 -1v1m1 -1v1m1 -2v1m1 -1v1m1 -2v1m1 -1v1m1 -2v1m1 -1v1m1 -2v1m1 -1v1m1 -2v1m1 -1v1m1 -2v1m1 -1v1m1 -2v1m1 -1v1m1 -2v1m1 -1v1m1 -2v1m1 -2v1m1 -1v1m1 -2v1m1 -2v1m1 -1v1m1 -2v1m1 -2v1m1 -1v1m1 -2v1m1 -2v1m1 -1v1m1 -2v1m1 -2v1m1 -2v1m1 -1v1m1 -2v1m1 -2v1m1 -2v1m1 -2v1m1 -1v1m1 -2v1m1 -2v1m1 -2v1m1 -2v1m1 -2v1m1 -2v1m1 -2v1m1 -1v1m1 -2v1m1 -2v1m1 -2v1m1 -2v1m1 -2v1m1 -2v1m1 -2v1m1 -2v1m1 -2v1m1 -2v1m1 -2v1m1 -2v1m1 -3v2m1 -3v1m1 -2v1m1 -2v1m1 -2v1m1 -2v1m1 -2v1m1 -2v1m1 -2v1m1 -3v2m1 -3v1m1 -2v1m1 -2v1m1 -2v1m1 -3v2m1 -3v1m1 -2v1m1 -2v1m1 -3v2m1 -3v1m1 -2v1m1 -3v2m1 -3v1m1 -2v1m1 -2v1m1 -3v2m1 -3v1m1 -3v2m1 -3v1m1 -2v1m1 -3v2m1 -3v1m1 -2v1m1 -3v2m1 -3v1m1 -3v2m1 -3v1m1 -3v2m1 -3v1m1 -3v2m1 -3v1m1 -3v2m1 -3v1m1 -3v2m1 -3v1m1 -3v2m1 -3v1m1 -3v2m1 -3v1m1 -3v2m1 -4v2m1 -3v1m1 -3v2m1 -3v1m1 -3v2m1 -4v2m1 -3v1m1 -3v2m1 -4v2m1 -3v1m1 -3v2m1 -4v2m1 -3v1m1 -3v2m1 -4v2m1 -3v1m1 -3v2m1 -4v2m1 -4v2m1 -3v1m1 -3v2m1 -4v2m1 -4v2m1 -4v2m1 -3v1m1 -3v2m1 -4v2m1 -4v2m1 -4v2m1 -4v2m1 -3v1m1 -3v2m1 -4v2m1 -4v2m1 -4v2m1 -4v2m1 -4v2m1 -4v2m1 -4v2m1 -4v2m1 -3v1m1 -3v2m1 -4v2m1 -4v2m1 -4v2m1 -4v2m1 -4v2m1 -4v2m1 -4v2m1 -4v2m1 -4v2m1 -4v2m1 -4v2m1 -4v2m1 -4v2m1 -4v2m1 -5v3m1 -5v2" stroke="#1090f0"/>
<path d="M159.5 30v2m1 0v2m1 0v2m1 0v3m1 0v2m1 0v2m1 0v3m1 0v2m1 0v2m1 0v2m1 0v3m1 0v2m1 0v2m1 0v3m1 0v2m1 0v2m1 0v2m1 0v3m1 0v2m1 0v2m1 0v2m1 0v3m1 0v2m1 0v2m1 0v2m1 0v3m1 0v2m1 0v2m1 0v2m1 0v2m1 0v3m1 0v2m1 0v2m1 0v2m1 0v2m1 0v2m1 0v2m1 0v3m1 0v2m1 0v2m1 0v2m1 0v2m1 0v2m1 0v2m1 0v2m1 0v2m1 0v2m1 0v2m1 0v3m1 0v2m1 0v2m1 0v2m1 0v2m1 0v2m1 0v2m1 0v2m1 0v2m1 0v2m1 0v2m1 0v2m1 0v2m1 0v2m1 0v1m1 0v2m1 0v2m1 0v2m1 0v2m1 0v2m1 0v2m1 0v2m1 0v2m1 0v2m1 0v2m1 0v1m1 0v2m1 0v2m1 0v2m1 0v2m1 0v2m1 0v1m1 0v2m1 0v2m1 0v2m1 0v1m1 0v2m1 0v2m1 0v2m1 0v1m1 0v2m1 0v2m1 0v2m1 0v1m1 0v2m1 0v2m1 0v1m1 0v2m1 0v2m1 0v1m1 0v2m1 0v2m1 0v1m1 0v2m1 0v1m1 0v2m1 0v2m1 0v1m1 0v2m1 0v1m1 0v2m1 0v1m1 0v2m1 0v1m1 0v2m1 0v1m1 0v2m1 0v1m1 0v2m1 0v1m1 0v2m1 0v1m1 0v1m1 0v2m1 0v1m1 0v2m1 0v1m1 0v1m1 0v2m1 0v1m1 0v1m1 0v2m1 0v1m1 0v1m1 0v2m1 0v1m1 0v1m1 0v2m1 0v1m1 0v1m1 0v1m1 0v2m1 0v1m1 0v1m1 0v1m1 0v1m1 0v1m1 0v2m1 0v1m1 0v1m1 0v1m1 0v1m1 0v1m1 0v1m1 0v1m1 0v2m1 0v1m1 0v1m1 0v1m1 0v1m1 0v1m1 0v1m1 0v1m1 0v1m1 0v1m1 0v1m1 0v1m1 0v1m1 -1v1m1 0v1m1 0v1m1 0v1m1 0v1m1 0v1m1 0v1m1 0v1m1 0v1m1 -1v1m1 0v1m1 0v1m1 0v1m1 0v1m1 -1v1m1 0v1m1 0v1m1 0v1m1 -1v1m1 0v1m1 0v1m1 -1v1m1 0v1m1 0v1m1 -1v1m1 0v1m1 0v1m1 -1v1m1 0v1m1 0v1m1 -1v1m1 0v1m1 -1v1m1 0v1m1 -1v1m1 0v1m1 -1v1m1 0v1m1 -1v1m1 0v1m1 -1v1m1 0v1m1 -1v1m1 0v1m1 -1v1m1 0v1m1 -1v1m1 -1v1m1 0v1m1 -1v1m1 -1v1m1 0v1m1 -1v1m1 -1v1m1 0v1m1 -1v1m1 -1v1m1 0v1m1 -1v1m1 -1v1m1 -1v1m1 0v1m1 -1v1m1 -1v1m1 -1v1m1 -1v1m1 -1v1m1 0v1m1 -1v1m1 -1v1m1 -1v1m1 -1v1m1 -1v1m1 -1v1m1 -1v1m1 -1v1m1 -1v1m1 -1v1m1 -1v1m1 -1v1m1 -1v1m1 -1v1m1 -1v1m1 -1v1m1 -1v1m1 -1v1m1 -1v1m1 -1v1m1 -1v1m1 -1v1m1 -1v1m1 -2v1m1 -1v1m1 -1v1m1 -1v1m1 -1v1m1 -1v1m1 -2v1m1 -1v1m1 -1v1m1 -1v1m1 -2v1m1 -1v1m1 -1v1m1 -1v1m1 -2v1m1 -1v1m1 -1v1m1 -2v1m1 -1v1m1 -2v1m1 -1v1m1 -1v1m1 -2v1m1 -1v1m1 -2v1m1 -1v1m1 -1v1m1 -2v1m1 -1v1m1 -2v1m1 -1v1m1 -2v1m1 -1v1m1 -2v1m1 -2v1m1 -1v1m1 -2v1m1 -1v1m1 -2v1m1 -1v1m1 -2v1m1 -2v1m1 -1v1m1 -2v1m1 -2v1m1 -1v1m1 -2v1m1 -2v1m1 -1v1m1 -2v1m1 -2v1m1 -2v1m1 -1v1m1 -2v1m1 -2v1m1 -2v1m1 -2v1m1 -1v1m1 -2v1m1 -2v1m1 -2v1m1 -2v1m1 -2v1m1 -2v1m1 -1v1m1 -2v1m1 -2v1m1 -2v1m1 -2v1m1 -2v1m1 -2v1m1 -2v1m1 -2v1m1 -2v1m1 -2v1m1 -2v1m1 -2v1m1 -2v1m1 -2v1m1 -2v1m1 -2v1m1 -2v1m1 -3v2m1 -3v1m1 -2v1m1 -2v1m1 -2v1m1 -2v1m1 -2v1m1 -3v2m1 -3v1m1 -2v1m1 -2v1m1 -2v1m1 -3v2m1 -3v1m1 -2v1m1 -2v1m1 -3v2m1 -3v1m1 -2v1m1 -3v2m1 -3v1m1 -2v1m1 -2v1m1 -3v2m1 -3v1m1 -3v2m1 -3v1m1 -2v1m1 -3v2m1 -3v1m1 -3v2m1 -3v1m1 -2v1m1 -3v2m1 -3v1m1 -3v2m1 -3v1m1 -3v2m1 -3v1m1 -3v2m1 -3v1m1 -3v2m1 -3v1m1 -3v2m1 -3v1m1 -3v2m1 -4v2m1 -3v1m1 -3v2m1 -3v1m1 -3v2m1 -4v2m1 -3v1m1 -3v2m1 -4v2m1 -3v1m1 -3v2m1 -4v2m1 -3v1m1 -3v2m1 -4v2m1 -3v1m1 -3v2m1 -4v2m1 -4v2m1 -3v1m1 -3v2m1 -4v2m1 -4v2m1 -3v1m1 -3v2m1 -4v2m1 -4v2m1 -4v2m1 -3v1m1 -3v2m1 -4v2m1 -4v2m1 -4v2m1 -4v2m1 -4v2m1 -3v1m1 -3v2m1 -4v2m1 -4v2m1 -4v2m1 -4v2m1 -4v2m1 -4v2m1 -4v2m1 -4v2m1 -4v2m1 -4v2m1 -4v2m1 -4v2m1 -4v2m1 -4v2m1 -4v2m1 -4v2m1 -4v2m1 -4v2m1 -4v2m1 -4v2m1 -4v2m1 -4v2m1 -4v2m1 -4v2m1 -4v2m1 -4v2" stroke="#20d020"/>
<path d="M155.5 30v1m1 0v2m1 0v3m1 0v2m1 0v2m1 0v3m1 0v2m1 0v2m1 0v3m1 0v2m1 0v2m1 0v2m1 0v3m1 0v2m1 0v2m1 0v3m1 0v2m1 0v2m1 0v2m1 0v3m1 0v2m1 0v2m1 0v2m1 0v3m1 0v2m1 0v2m1 0v2m1 0v2m1 0v3m1 0v2m1 0v2m1 0v2m1 0v2m1 0v2m1 0v3m1 0v2m1 0v2m1 0v2m1 0v2m1 0v2m1 0v2m1 0v2m1 0v3m1 0v2m1 0v2m1 0v2m1 0v2m1 0v2m1 0v2m1 0v2m1 0v2m1 0v2m1 0v2m1 0v2m1 0v2m1 0v2m1 0v2m1 0v2m1 0v2m1 0v2m1 0v2m1 0v2m1 0v2m1 0v2m1 0v2m1 0v2m1 0v2m1 0v2m1 0v2m1 0v1m1 0v2m1 0v2m1 0v2m1 0v2m1 0v2m1 0v2m1 0v1m1 0v2m1 0v2m1 0v2m1 0v2m1 0v1m1 0v2m1 0v2m1 0v2m1 0v2m1 0v1m1 0v2m1 0v2m1 0v1m1 0v2m1 0v2m1 0v2m1 0v1m1 0v2m1 0v2m1 0v1m1 0v2m1 0v2m1 0v1m1 0v2m1 0v1m1 0v2m1 0v2m1 0v1m1 0v2m1 0v1m1 0v2m1 0v1m1 0v2m1 0v1m1 0v2m1 0v1m1 0v2m1 0v1m1 0v2m1 0v1m1 0v2m1 0v1m1 0v2m1 0v1m1 0v2m1 0v1m1 0v1m1 0v2m1 0v1m1 0v1m1 0v2m1 0v1m1 0v1m1 0v2m1 0v1m1 0v1m1 0v2m1 0v1m1 0v1m1 0v1m1 0v2m1 0v1m1 0v1m1 0v1m1 0v2m1 0v1m1 0v1m1 0v1m1 0v1m1 0v1m1 0v2m1 0v1m1 0v1m1 0v1m1 0v1m1 0v1m1 0v1m1 0v1m1 0v1m1 0v1m1 0v1m1 0v1m1 0v1m1 0v1m1 0v1m1 0v1m1 0v1m1 0v1m1 0v1m1 0v1m1 0v1m1 0v1m1 0v1m1 0v1m1 0v1m1 0v1m1 -1v1m1 0v1m1 0v1m1 0v1m1 0v1m1 0v1m1 -1v1m1 0v1m1 0v1m1 0v1m1 -1v1m1 0v1m1 0v1m1 0v1m1 -1v1m1 0v1m1 0v1m1 -1v1m1 0v1m1 0v1m1 -1v1m1 0v1m1 -1v1m1 0v1m1 0v1m1 -1v1m1 0v1m1 -1v1m1 0v1m1 -1v1m1 0v1m1 -1v1m1 0v1m1 -1v1m1 0v1m1 -1v1m1 0v1m1 -1v1m1 -1v1m1 0v1m1 -1v1m1 0v1m1 -1v1m1 -1v1m1 0v1m1 -1v1m1 -1v1m1 0v1m1 -1v1m1 -1v1m1 0v1m1 -1v1m1 -1v1m1 -1v1m1 -1v1m1 0v1m1 -1v1m1 -1v1m1 -1v1m1 -1v1m1 0v1m1 -1v1m1 -1v1m1 -1v1m1 -1v1m1 -1v1m1 -1v1m1 -1v1m1 -1v1m1 -1v1m1 -1v1m1 -1v1m1 -1v1m1 -1v1m1 -1v1m1 -1v1m1 -1v1m1 -1v1m1 -1v1m1 -1v1m1 -1v1m1 -1v1m1 -1v1m1 -1v1m1 -1v1m1 -2v1m1 -1v1m1 -1v1m1 -1v1m1 -1v1m1 -2v1m1 -1v1m1 -1v1m1 -1v1m1 -2v1m1 -1v1m1 -1v1m1 -1v1m1 -2v1m1 -1v1m1 -1v1m1 -2v1m1 -1v1m1 -1v1m1 -2v1m1 -1v1m1 -2v1m1 -1v1m1 -1v1m1 -2v1m1 -1v1m1 -2v1m1 -1v1m1 -2v1m1 -1v1m1 -2v1m1 -1v1m1 -2v1m1 -1v1m1 -2v1m1 -2v1m1 -1v1m1 -2v1m1 -1v1m1 -2v1m1 -2v1m1 -1v1m1 -2v1m1 -1v1m1 -2v1m1 -2v1m1 -2v1m1 -1v1m1 -2v1m1 -2v1m1 -1v1m1 -2v1m1 -2v1m1 -2v1m1 -2v1m1 -1v1m1 -2v1m1 -2v1m1 -2v1m1 -2v1m1 -2v1m1 -1v1m1 -2v1m1 -2v1m1 -2v1m1 -2v1m1 -2v1m1 -2v1m1 -2v1m1 -2v1m1 -2v1m1 -2v1m1 -2v1m1 -2v1m1 -2v1m1 -2v1m1 -2v1m1 -2v1m1 -2v1m1 -2v1m1 -2v1m1 -2v1m1 -2v1m1 -2v1m1 -3v2m1 -3v1m1 -2v1m1 -2v1m1 -2v1m1 -2v1m1 -3v2m1 -3v1m1 -2v1m1 -2v1m1 -3v2m1 -3v1m1 -2v1m1 -2v1m1 -3v2m1 -3v1m1 -2v1m1 -2v1m1 -3v2m1 -3v1m1 -2v1m1 -3v2m1 -3v1m1 -3v2m1 -3v1m1 -2v1m1 -3v2m1 -3v1m1 -3v2m1 -3v1m1 -2v1m1 -3v2m1 -3v1m1 -3v2m1 -3v1m1 -3v2m1 -3v1m1 -3v2m1 -3v1m1 -3v2m1 -3v1m1 -3v2m1 -4v2m1 -3v1m1 -3v2m1 -3v1m1 -3v2m1 -4v2m1 -3v1m1 -3v2m1 -3v1m1 -3v2m1 -4v2m1 -3v1m1 -3v2m1 -4v2m1 -3v1m1 -3v2m1 -4v2m1 -4v2m1 -3v1m1 -3v2m1 -4v2m1 -4v2m1 -3v1m1 -3v2m1 -4v2m1 -4v2m1 -3v1m1 -3v2m1 -4v2m1 -4v2m1 -4v2m1 -4v2m1 -3v1m1 -3v2m1 -4v2m1 -4v2m1 -4v2m1 -4v2m1 -4v2m1 -4v2m1 -4v2m1 -4v2m1 -3v1m1 -3v2m1 -4v2m1 -4v2m1 -4v2m1 -4v2m1 -4v2m1 -4v2m1 -4v2m1 -4v2m1 -4v2m1 -4v2m1 -4v2m1 -4v2m1 -4v2m1 -4v2m1 -4v2m1 -5v3m1 -5v2m1 -4v2m1 -4v2m1 -4v2m1 -4v2m1 -4v2m1 -4v2m1 -4v2" stroke="#f0f098"/>
<path d="M152.5 30v3m1 0v2m1 0v2m1 0v3m1 0v2m1 0v2m1 0v3m1 0v2m1 0v2m1 0v3m1 0v2m1 0v2m1 0v2m1 0v3m1 0v2m1 0v2m1 0v3m1 0v2m1 0v2m1 0v2m1 0v3m1 0v2m1 0v2m1 0v2m1 0v2m1 0v3m1 0v2m1 0v2m1 0v2m1 0v2m1 0v3m1 0v2m1 0v2m1 0v2m1 0v2m1 0v2m1 0v2m1 0v3m1 0v2m1 0v2m1 0v2m1 0v2m1 0v2m1 0v2m1 0v2m1 0v2m1 0v2m1 0v2m1 0v3m1 0v2m1 0v2m1 0v2m1 0v2m1 0v2m1 0v2m1 0v2m1 0v2m1 0v2m1 0v2m1 0v2m1 0v2m1 0v1m1 0v2m1 0v2m1 0v2m1 0v2m1 0v2m1 0v2m1 0v2m1 0v2m1 0v2m1 0v2m1 0v1m1 0v2m1 0v2m1 0v2m1 0v2m1 0v2m1 0v1m1 0v2m1 0v2m1 0v2m1 0v2m1 0v1m1 0v2m1 0v2m1 0v2m1 0v1m1 0v2m1 0v2m1 0v1m1 0v2m1 0v2m1 0v1m1 0v2m1 0v2m1 0v1m1 0v2m1 0v2m1 0v1m1 0v2m1 0v2m1 0v1m1 0v2m1 0v1m1 0v2m1 0v1m1 0v2m1 0v2m1 0v1m1 0v2m1 0v1m1 0v2m1 0v1m1 0v2m1 0v1m1 0v1m1 0v2m1 0v1m1 0v2m1 0v1m1 0v2m1 0v1m1 0v1m1 0v2m1 0v1m1 0v1m1 0v2m1 0v1m1 0v1m1 0v2m1 0v1m1 0v1m1 0v2m1 0v1m1 0v1m1 0v1m1 0v2m1 0v1m1 0v1m1 0v1m1 0v2m1 0v1m1 0v1m1 0v1m1 0v1m1 0v1m1 0v1m1 0v2m1 0v1m1 0v1m1 0v1m1 0v1m1 0v1m1 0v1m1 0v1m1 0v1m1 0v1m1 0v1m1 0v1m1 0v1m1 0v1m1 0v1m1 0v1m1 0v1m1 0v1m1 0v1m1 0v1m1 0v1m1 0v1m1 0v1m1 -1v1m1 0v1m1 0v1m1 0v1m1 0v1m1 0v1m1 -1v1m1 0v1m1 0v1m1 0v1m1 0v1m1 -1v1m1 0v1m1 0v1m1 -1v1m1 0v1m1 0v1m1 -1v1m1 0v1m1 0v1m1 -1v1m1 0v1m1 0v1m1 -1v1m1 0v1m1 -1v1m1 0v1m1 0v1m1 -1v1m1 0v1m1 -1v1m1 0v1m1 -1v1m1 0v1m1 -1v1m1 0v1m1 -1v1m1 0v1m1 -1v1m1 -1v1m1 0v1m1 -1v1m1 0v1m1 -1v1m1 -1v1m1 0v1m1 -1v1m1 -1v1m1 0v1m1 -1v1m1 -1v1m1 -1v1m1 0v1m1 -1v1m1 -1v1m1 -1v1m1 0v1m1 -1v1m1 -1v1m1 -1v1m1 -1v1m1 0v1m1 -1v1m1 -1v1m1 -1v1m1 -1v1m1 -1v1m1 -1v1m1 -1v1m1 -1v1m1 -1v1m1 -1v1m1 -1v1m1 -1v1m1 -1v1m1 -1v1m1 -1v1m1 -1v1m1 -1v1m1 -1v1m1 -1v1m1 -1v1m1 -1v1m1 -1v1m1 -1v1m1 -1v1m1 -2v1m1 -1v1m1 -1v1m1 -1v1m1 -1v1m1 -2v1m1 -1v1m1 -1v1m1 -1v1m1 -1v1m1 -2v1m1 -1v1m1 -1v1m1 -2v1m1 -1v1m1 -1v1m1 -2v1m1 -1v1m1 -1v1m1 -2v1m1 -1v1m1 -1v1m1 -2v1m1 -1v1m1 -2v1m1 -1v1m1 -2v1m1 -1v1m1 -2v1m1 -1v1m1 -2v1m1 -1v1m1 -2v1m1 -1v1m1 -2v1m1 -1v1m1 -2v1m1 -2v1m1 -1v1m1 -2v1m1 -1v1m1 -2v1m1 -2v1m1 -1v1m1 -2v1m1 -2v1m1 -1v1m1 -2v1m1 -2v1m1 -2v1m1 -1v1m1 -2v1m1 -2v1m1 -2v1m1 -1v1m1 -2v1m1 -2v1m1 -2v1m1 -2v1m1 -1v1m1 -2v1m1 -2v1m1 -2v1m1 -2v1m1 -2v1m1 -2v1m1 -2v1m1 -2v1m1 -2v1m1 -2v1m1 -2v1m1 -1v1m1 -2v1m1 -2v1m1 -3v2m1 -3v1m1 -2v1m1 -2v1m1 -2v1m1 -2v1m1 -2v1m1 -2v1m1 -2v1m1 -2v1m1 -2v1m1 -2v1m1 -3v2m1 -3v1m1 -2v1m1 -2v1m1 -2v1m1 -3v2m1 -3v1m1 -2v1m1 -2v1m1 -2v1m1 -3v2m1 -3v1m1 -2v1m1 -3v2m1 -3v1m1 -2v1m1 -2v1m1 -3v2m1 -3v1m1 -2v1m1 -3v2m1 -3v1m1 -3v2m1 -3v1m1 -2v1m1 -3v2m1 -3v1m1 -3v2m1 -3v1m1 -3v2m1 -3v1m1 -2v1m1 -3v2m1 -3v1m1 -3v2m1 -3v1m1 -3v2m1 -4v2m1 -3v1m1 -3v2m1 -3v1m1 -3v2m1 -3v1m1 -3v2m1 -4v2m1 -3v1m1 -3v2m1 -3v1m1 -3v2m1 -4v2m1 -3v1m1 -3v2m1 -4v2m1 -3v1m1 -3v2m1 -4v2m1 -3v1m1 -3v2m1 -4v2m1 -4v2m1 -3v1m1 -3v2m1 -4v2m1 -4v2m1 -3v1m1 -3v2m1 -4v2m1 -4v2m1 -4v2m1 -3v1m1 -3v2m1 -4v2m1 -4v2m1 -4v2m1 -4v2m1 -4v2m1 -3v1m1 -3v2m1 -4v2m1 -4v2m1 -4v2m1 -4v2m1 -4v2m1 -4v2m1 -4v2m1 -4v2m1 -4v2m1 -4v2m1 -4v2m1 -4v2m1 -4v2m1 -4v2m1 -4v2m1 -4v2m1 -4v2m1 -4v2m1 -4v2m1 -4v2m1 -4v2m1 -4v2m1 -4v2m1 -4v2m1 -4v2m1 -4v2m1 -4v2m1 -5v3m1 -5v2m1 -4v2m1 -4v2m1 -4v2m1 -4v2m1 -4v2" stroke="#b83828"/>
<path d="M148.5 30v2m1 0v2m1 0v3m1 0v2m1 0v2m1 0v3m1 0v2m1 0v2m1 0v3m1 0v2m1 0v2m1 0v3m1 0v2m1 0v2m1 0v2m1 0v3m1 0v2m1 0v2m1 0v2m1 0v3m1 0v2m1 0v2m1 0v2m1 0v3m1 0v2m1 0v2m1 0v2m1 0v2m1 0v3m1 0v2m1 0v2m1 0v2m1 0v2m1 0v2m1 0v3m1 0v2m1 0v2m1 0v2m1 0v2m1 0v2m1 0v2m1 0v2m1 0v3m1 0v2m1 0v2m1 0v2m1 0v2m1 0v2m1 0v2m1 0v2m1 0v2m1 0v2m1 0v2m1 0v2m1 0v2m1 0v2m1 0v2m1 0v2m1 0v2m1 0v2m1 0v2m1 0v2m1 0v2m1 0v2m1 0v2m1 0v2m1 0v2m1 0v2m1 0v1m1 0v2m1 0v2m1 0v2m1 0v2m1 0v2m1 0v2m1 0v1m1 0v2m1 0v2m1 0v2m1 0v2m1 0v2m1 0v1m1 0v2m1 0v2m1 0v2m1 0v1m1 0v2m1 0v2m1 0v2m1 0v1m1 0v2m1 0v2m1 0v1m1 0v2m1 0v2m1 0v1m1 0v2m1 0v2m1 0v1m1 0v2m1 0v2m1 0v1m1 0v2m1 0v1m1 0v2m1 0v1m1 0v2m1 0v2m1 0v1m1 0v2m1 0v1m1 0v2m1 0v1m1 0v2m1 0v1m1 0v2m1 0v1m1 0v2m1 0v1m1 0v1m1 0v2m1 0v1m1 0v2m1 0v1m1 0v1m1 0v2m1 0v1m1 0v1m1 0v2m1 0v1m1 0v1m1 0v2m1 0v1m1 0v1m1 0v2m1 0v1m1 0v1m1 0v1m1 0v2m1 0v1m1 0v1m1 0v1m1 0v1m1 0v2m1 0v1m1 0v1m1 0v1m1 0v1m1 0v1m1 0v1m1 0v2m1 0v1m1 0v1m1 0v1m1 0v1m1 0v1m1 0v1m1 0v1m1 0v1m1 0v1m1 0v1m1 0v1m1 0v1m1 0v1m1 0v1m1 0v1m1 0v1m1 0v1m1 0v1m1 -1v1m1 0v1m1 0v1m1 0v1m1 0v1m1 0v1m1 0v1m1 -1v1m1 0v1m1 0v1m1 0v1m1 0v1m1 -1v1m1 0v1m1 0v1m1 0v1m1 -1v1m1 0v1m1 0v1m1 -1v1m1 0v1m1 0v1m1 -1v1m1 0v1m1 0v1m1 -1v1m1 0v1m1 -1v1m1 0v1m1 -1v1m1 0v1m1 0v1m1 -1v1m1 0v1m1 -1v1m1 0v1m1 -1v1m1 0v1m1 -1v1m1 -1v1m1 0v1m1 -1v1m1 0v1m1 -1v1m1 -1v1m1 0v1m1 -1v1m1 0v1m1 -1v1m1 -1v1m1 0v1m1 -1v1m1 -1v1m1 -1v1m1 0v1m1 -1v1m1 -1v1m1 -1v1m1 0v1m1 -1v1m1 -1v1m1 -1v1m1 -1v1m1 -1v1m1 0v1m1 -1v1m1 -1v1m1 -1v1m1 -1v1m1 -1v1m1 -1v1m1 -1v1m1 -1v1m1 -1v1m1 -1v1m1 -1v1m1 -1v1m1 -1v1m1 -1v1m1 -1v1m1 -1v1m1 -1v1m1 -1v1m1 -1v1m1 -1v1m1 -1v1m1 -1v1m1 -1v1m1 -2v1m1 -1v1m1 -1v1m1 -1v1m1 -1v1m1 -1v1m1 -2v1m1 -1v1m1 -1v1m1 -1v1m1 -2v1m1 -1v1m1 -1v1m1 -2v1m1 -1v1m1 -1v1m1 -2v1m1 -1v1m1 -1v1m1 -2v1m1 -1v1m1 -1v1m1 -2v1m1 -1v1m1 -2v1m1 -1v1m1 -2v1m1 -1v1m1 -2v1m1 -1v1m1 -2v1m1 -1v1m1 -2v1m1 -1v1m1 -2v1m1 -1v1m1 -2v1m1 -1v1m1 -2v1m1 -2v1m1 -1v1m1 -2v1m1 -1v1m1 -2v1m1 -2v1m1 -1v1m1 -2v1m1 -2v1m1 -2v1m1 -1v1m1 -2v1m1 -2v1m1 -2v1m1 -1v1m1 -2v1m1 -2v1m1 -2v1m1 -2v1m1 -1v1m1 -2v1m1 -2v1m1 -2v1m1 -2v1m1 -2v1m1 -2v1m1 -2v1m1 -1v1m1 -2v1m1 -2v1m1 -2v1m1 -2v1m1 -2v1m1 -2v1m1 -2v1m1 -2v1m1 -2v1m1 -2v1m1 -2v1m1 -2v1m1 -2v1m1 -3v2m1 -3v1m1 -2v1m1 -2v1m1 -2v1m1 -2v1m1 -2v1m1 -2v1m1 -3v2m1 -3v1m1 -2v1m1 -2v1m1 -2v1m1 -3v2m1 -3v1m1 -2v1m1 -2v1m1 -3v2m1 -3v1m1 -2v1m1 -2v1m1 -3v2m1 -3v1m1 -2v1m1 -3v2m1 -3v1m1 -2v1m1 -3v2m1 -3v1m1 -3v2m1 -3v1m1 -2v1m1 -3v2m1 -3v1m1 -3v2m1 -3v1m1 -3v2m1 -3v1m1 -3v2m1 -3v1m1 -3v2m1 -3v1m1 -3v2m1 -3v1m1 -3v2m1 -3v1m1 -3v2m1 -3v1m1 -3v2m1 -4v2m1 -3v1m1 -3v2m1 -3v1m1 -3v2m1 -4v2m1 -3v1m1 -3v2m1 -4v2m1 -3v1m1 -3v2m1 -4v2m1 -3v1m1 -3v2m1 -4v2m1 -3v1m1 -3v2m1 -4v2m1 -4v2m1 -3v1m1 -3v2m1 -4v2m1 -4v2m1 -4v2m1 -3v1m1 -3v2m1 -4v2m1 -4v2m1 -4v2m1 -4v2m1 -3v1m1 -3v2m1 -4v2m1 -4v2m1 -4v2m1 -4v2m1 -4v2m1 -4v2m1 -4v2m1 -3v1m1 -3v2m1 -4v2m1 -4v2m1 -4v2m1 -4v2m1 -4v2m1 -4v2m1 -4v2m1 -4v2m1 -4v2m1 -4v2m1 -4v2m1 -4v2m1 -4v2m1 -4v2m1 -4v2m1 -4v2m1 -5v3m1 -5v2m1 -4v2m1 -4v2m1 -4v2m1 -4v2m1 -4v2m1 -4v2m1 -4v2m1 -4v2m1 -5v3m1 -5v2m1 -4v2m1 -4v2m1 -4v2m1 -4v2" stroke="#f0a0d8"/>
<path d="M144.5 30v1m1 0v3m1 0v2m1 0v3m1 0v2m1 0v2m1 0v2m1 0v3m1 0v2m1 0v2m1 0v3m1 0v2m1 0v2m1 0v3m1 0v2m1 0v2m1 0v2m1 0v3m1 0v2m1 0v2m1 0v2m1 0v3m1 0v2m1 0v2m1 0v2m1 0v2m1 0v3m1 0v2m1 0v2m1 0v2m1 0v2m1 0v3m1 0v2m1 0v2m1 0v2m1 0v2m1 0v2m1 0v3m1 0v2m1 0v2m1 0v2m1 0v2m1 0v2m1 0v2m1 0v2m1 0v2m1 0v2m1 0v2m1 0v2m1 0v3m1 0v2m1 0v2m1 0v2m1 0v2m1 0v2m1 0v2m1 0v2m1 0v2m1 0v2m1 0v2m1 0v2m1 0v1m1 0v2m1 0v2m1 0v2m1 0v2m1 0v2m1 0v2m1 0v2m1 0v2m1 0v2m1 0v2m1 0v1m1 0v2m1 0v2m1 0v2m1 0v2m1 0v2m1 0v1m1 0v2m1 0v2m1 0v2m1 0v2m1 0v1m1 0v2m1 0v2m1 0v2m1 0v1m1 0v2m1 0v2m1 0v2m1 0v1m1 0v2m1 0v2m1 0v1m1 0v2m1 0v2m1 0v1m1 0v2m1 0v2m1 0v1m1 0v2m1 0v1m1 0v2m1 0v2m1 0v1m1 0v2m1 0v1m1 0v2m1 0v1m1 0v2m1 0v1m1 0v2m1 0v1m1 0v2m1 0v1m1 0v2m1 0v1m1 0v2m1 0v1m1 0v1m1 0v2m1 0v1m1 0v2m1 0v1m1 0v1m1 0v2m1 0v1m1 0v1m1 0v2m1 0v1m1 0v1m1 0v2m1 0v1m1 0v1m1 0v2m1 0v1m1 0v1m1 0v1m1 0v1m1 0v2m1 0v1m1 0v1m1 0v1m1 0v1m1 0v2m1 0v1m1 0v1m1 0v1m1 0v1m1 0v1m1 0v1m1 0v1m1 0v1m1 0v2m1 0v1m1 0v1m1 0v1m1 0v1m1 0v1m1 0v1m1 0v1m1 0v1m1 0v1m1 0v1m1 0v1m1 -1v1m1 0v1m1 0v1m1 0v1m1 0v1m1 0v1m1 0v1m1 0v1m1 0v1m1 -1v1m1 0v1m1 0v1m1 0v1m1 0v1m1 -1v1m1 0v1m1 0v1m1 0v1m1 -1v1m1 0v1m1 0v1m1 -1v1m1 0v1m1 0v1m1 -1v1m1 0v1m1 0v1m1 -1v1m1 0v1m1 0v1m1 -1v1m1 0v1m1 -1v1m1 0v1m1 -1v1m1 0v1m1 -1v1m1 0v1m1 -1v1m1 0v1m1 -1v1m1 0v1m1 -1v1m1 0v1m1 -1v1m1 0v1m1 -1v1m1 -1v1m1 0v1m1 -1v1m1 -1v1m1 0v1m1 -1v1m1 -1v1m1 0v1m1 -1v1m1 -1v1m1 0v1m1 -1v1m1 -1v1m1 -1v1m1 0v1m1 -1v1m1 -1v1m1 -1v1m1 -1v1m1 -1v1m1 0v1m1 -1v1m1 -1v1m1 -1v1m1 -1v1m1 -1v1m1 -1v1m1 -1v1m1 -1v1m1 -1v1m1 -1v1m1 -1v1m1 -1v1m1 -1v1m1 -1v1m1 -1v1m1 -1v1m1 -1v1m1 -1v1m1 -1v1m1 -1v1m1 -1v1m1 -1v1m1 -1v1m1 -2v1m1 -1v1m1 -1v1m1 -1v1m1 -1v1m1 -1v1m1 -2v1m1 -1v1m1 -1v1m1 -1v1m1 -2v1m1 -1v1m1 -1v1m1 -1v1m1 -2v1m1 -1v1m1 -1v1m1 -2v1m1 -1v1m1 -2v1m1 -1v1m1 -1v1m1 -2v1m1 -1v1m1 -2v1m1 -1v1m1 -1v1m1 -2v1m1 -1v1m1 -2v1m1 -1v1m1 -2v1m1 -1v1m1 -2v1m1 -2v1m1 -1v1m1 -2v1m1 -1v1m1 -2v1m1 -1v1m1 -2v1m1 -2v1m1 -1v1m1 -2v1m1 -2v1m1 -1v1m1 -2v1m1 -2v1m1 -1v1m1 -2v1m1 -2v1m1 -2v1m1 -1v1m1 -2v1m1 -2v1m1 -2v1m1 -2v1m1 -1v1m1 -2v1m1 -2v1m1 -2v1m1 -2v1m1 -2v1m1 -1v1m1 -2v1m1 -2v1m1 -2v1m1 -2v1m1 -2v1m1 -2v1m1 -2v1m1 -2v1m1 -2v1m1 -2v1m1 -2v1m1 -2v1m1 -2v1m1 -2v1m1 -2v1m1 -2v1m1 -2v1m1 -2v1m1 -2v1m1 -3v2m1 -3v1m1 -2v1m1 -2v1m1 -2v1m1 -2v1m1 -3v2m1 -3v1m1 -2v1m1 -2v1m1 -2v1m1 -3v2m1 -3v1m1 -2v1m1 -2v1m1 -3v2m1 -3v1m1 -2v1m1 -2v1m1 -3v2m1 -3v1m1 -2v1m1 -3v2m1 -3v1m1 -3v2m1 -3v1m1 -2v1m1 -3v2m1 -3v1m1 -2v1m1 -3v2m1 -3v1m1 -3v2m1 -3v1m1 -3v2m1 -3v1m1 -3v2m1 -3v1m1 -3v2m1 -3v1m1 -3v2m1 -3v1m1 -3v2m1 -3v1m1 -3v2m1 -4v2m1 -3v1m1 -3v2m1 -3v1m1 -3v2m1 -4v2m1 -3v1m1 -3v2m1 -3v1m1 -3v2m1 -4v2m1 -3v1m1 -3v2m1 -4v2m1 -4v2m1 -3v1m1 -3v2m1 -4v2m1 -3v1m1 -3v2m1 -4v2m1 -4v2m1 -4v2m1 -3v1m1 -3v2m1 -4v2m1 -4v2m1 -4v2m1 -3v1m1 -3v2m1 -4v2m1 -4v2m1 -4v2m1 -4v2m1 -4v2m1 -3v1m1 -3v2m1 -4v2m1 -4v2m1 -4v2m1 -4v2m1 -4v2m1 -4v2m1 -4v2m1 -4v2m1 -4v2m1 -4v2m1 -4v2m1 -4v2m1 -4v2m1 -4v2m1 -4v2m1 -4v2m1 -4v2m1 -4v2m1 -4v2m1 -4v2m1 -4v2m1 -4v2m1 -4v2m1 -4v2m1 -4v2m1 -4v2m1 -4v2m1 -5v3m1 -5v2m1 -4v2m1 -4v2m1 -4v2m1 -4v2m1 -4v2m1 -4v2m1 -5v3m1 -5v2m1 -4v2m1 -4v2m1 -4v2m1 -5v3" stroke="#202850"/>
<path d="M140.5 30v1m1 0v2m1 0v3m1 0v2m1 0v2m1 0v3m1 0v2m1 0v2m1 0v3m1 0v2m1 0v2m1 0v2m1 0v3m1 0v2m1 0v2m1 0v3m1 0v2m1 0v2m1 0v2m1 0v3m1 0v2m1 0v2m1 0v2m1 0v2m1 0v3m1 0v2m1 0v2m1 0v2m1 0v3m1 0v2m1 0v2m1 0v2m1 0v2m1 0v2m1 0v3m1 0v2m1 0v2m1 0v2m1 0v2m1 0v2m1 0v2m1 0v2m1 0v3m1 0v2m1 0v2m1 0v2m1 0v2m1 0v2m1 0v2m1 0v2m1 0v2m1 0v2m1 0v2m1 0v2m1 0v2m1 0v2m1 0v2m1 0v2m1 0v2m1 0v2m1 0v2m1 0v2m1 0v2m1 0v2m1 0v2m1 0v2m1 0v2m1 0v2m1 0v1m1 0v2m1 0v2m1 0v2m1 0v2m1 0v2m1 0v2m1 0v2m1 0v1m1 0v2m1 0v2m1 0v2m1 0v2m1 0v1m1 0v2m1 0v2m1 0v2m1 0v1m1 0v2m1 0v2m1 0v2m1 0v1m1 0v2m1 0v2m1 0v2m1 0v1m1 0v2m1 0v2m1 0v1m1 0v2m1 0v1m1 0v2m1 0v2m1 0v1m1 0v2m1 0v2m1 0v1m1 0v2m1 0v1m1 0v2m1 0v1m1 0v2m1 0v1m1 0v2m1 0v1m1 0v2m1 0v1m1 0v2m1 0v1m1 0v2m1 0v1m1 0v2m1 0v1m1 0v1m1 0v2m1 0v1m1 0v2m1 0v1m1 0v1m1 0v2m1 0v1m1 0v1m1 0v2m1 0v1m1 0v1m1 0v2m1 0v1m1 0v1m1 0v1m1 0v2m1 0v1m1 0v1m1 0v1m1 0v2m1 0v1m1 0v1m1 0v1m1 0v1m1 0v1m1 0v2m1 0v1m1 0v1m1 0v1m1 0v1m1 0v1m1 0v1m1 0v1m1 0v1m1 0v1m1 0v1m1 0v1m1 0v1m1 0v1m1 0v1m1 0v1m1 0v1m1 0v1m1 0v1m1 0v1m1 0v1m1 0v1m1 0v1m1 0v1m1 0v1m1 0v1m1 -1v1m1 0v1m1 0v1m1 0v1m1 0v1m1 0v1m1 -1v1m1 0v1m1 0v1m1 0v1m1 -1v1m1 0v1m1 0v1m1 0v1m1 -1v1m1 0v1m1 0v1m1 -1v1m1 0v1m1 0v1m1 -1v1m1 0v1m1 -1v1m1 0v1m1 0v1m1 -1v1m1 0v1m1 -1v1m1 0v1m1 -1v1m1 0v1m1 -1v1m1 0v1m1 -1v1m1 0v1m1 -1v1m1 0v1m1 -1v1m1 -1v1m1 0v1m1 -1v1m1 0v1m1 -1v1m1 -1v1m1 0v1m1 -1v1m1 -1v1m1 0v1m1 -1v1m1 -1v1m1 0v1m1 -1v1m1 -1v1m1 -1v1m1 -1v1m1 0v1m1 -1v1m1 -1v1m1 -1v1m1 -1v1m1 0v1m1 -1v1m1 -1v1m1 -1v1m1 -1v1m1 -1v1m1 -1v1m1 -1v1m1 -1v1m1 -1v1m1 -1v1m1 -1v1m1 -1v1m1 -1v1m1 -1v1m1 -1v1m1 -1v1m1 -1v1m1 -1v1m1 -1v1m1 -1v1m1 -1v1m1 -1v1m1 -1v1m1 -1v1m1 -2v1m1 -1v1m1 -1v1m1 -1v1m1 -1v1m1 -2v1m1 -1v1m1 -1v1m1 -1v1m1 -2v1m1 -1v1m1 -1v1m1 -1v1m1 -2v1m1 -1v1m1 -1v1m1 -2v1m1 -1v1m1 -1v1m1 -2v1m1 -1v1m1 -2v1m1 -1v1m1 -1v1m1 -2v1m1 -1v1m1 -2v1m1 -1v1m1 -2v1m1 -1v1m1 -2v1m1 -1v1m1 -2v1m1 -1v1m1 -2v1m1 -1v1m1 -2v1m1 -2v1m1 -1v1m1 -2v1m1 -2v1m1 -1v1m1 -2v1m1 -1v1m1 -2v1m1 -2v1m1 -2v1m1 -1v1m1 -2v1m1 -2v1m1 -1v1m1 -2v1m1 -2v1m1 -2v1m1 -2v1m1 -1v1m1 -2v1m1 -2v1m1 -2v1m1 -2v1m1 -2v1m1 -1v1m1 -2v1m1 -2v1m1 -2v1m1 -2v1m1 -2v1m1 -2v1m1 -2v1m1 -2v1m1 -2v1m1 -2v1m1 -2v1m1 -2v1m1 -2v1m1 -2v1m1 -2v1m1 -2v1m1 -2v1m1 -2v1m1 -2v1m1 -2v1m1 -2v1m1 -2v1m1 -3v2m1 -3v1m1 -2v1m1 -2v1m1 -2v1m1 -2v1m1 -3v2m1 -3v1m1 -2v1m1 -2v1m1 -2v1m1 -3v2m1 -3v1m1 -2v1m1 -3v2m1 -3v1m1 -2v1m1 -2v1m1 -3v2m1 -3v1m1 -2v1m1 -3v2m1 -3v1m1 -3v2m1 -3v1m1 -2v1m1 -3v2m1 -3v1m1 -3v2m1 -3v1m1 -2v1m1 -3v2m1 -3v1m1 -3v2m1 -3v1m1 -3v2m1 -3v1m1 -3v2m1 -3v1m1 -3v2m1 -3v1m1 -3v2m1 -4v2m1 -3v1m1 -3v2m1 -3v1m1 -3v2m1 -4v2m1 -3v1m1 -3v2m1 -3v1m1 -3v2m1 -4v2m1 -3v1m1 -3v2m1 -4v2m1 -3v1m1 -3v2m1 -4v2m1 -4v2m1 -3v1m1 -3v2m1 -4v2m1 -4v2m1 -3v1m1 -3v2m1 -4v2m1 -4v2m1 -3v1m1 -3v2m1 -4v2m1 -4v2m1 -4v2m1 -4v2m1 -3v1m1 -3v2m1 -4v2m1 -4v2m1 -4v2m1 -4v2m1 -4v2m1 -4v2m1 -4v2m1 -3v1m1 -3v2m1 -4v2m1 -4v2m1 -4v2m1 -4v2m1 -4v2m1 -4v2m1 -4v2m1 -4v2m1 -4v2m1 -4v2m1 -4v2m1 -4v2m1 -4v2m1 -4v2m1 -4v2m1 -4v2m1 -4v2m1 -5v3m1 -5v2m1 -4v2m1 -4v2m1 -4v2m1 -4v2m1 -4v2m1 -4v2m1 -4v2m1 -4v2m1 -5v3m1 -5v2m1 -4v2m1 -4v2m1 -4v2m1 -4v2m1 -5v3m1 -5v2m1 -4v2m1 -4v2m1 -4v2m1 -5v3m1 -5v2" stroke="#1050e0"/>
<path d="M137.5 30v3m1 0v2m1 0v2m1 0v3m1 0v2m1 0v2m1 0v3m1 0v2m1 0v2m1 0v3m1 0v2m1 0v2m1 0v2m1 0v3m1 0v2m1 0v2m1 0v2m1 0v3m1 0v2m1 0v2m1 0v2m1 0v3m1 0v2m1 0v2m1 0v2m1 0v3m1 0v2m1 0v2m1 0v2m1 0v2m1 0v2m1 0v3m1 0v2m1 0v2m1 0v2m1 0v2m1 0v2m1 0v3m1 0v2m1 0v2m1 0v2m1 0v2m1 0v2m1 0v2m1 0v2m1 0v2m1 0v2m1 0v2m1 0v2m1 0v3m1 0v2m1 0v2m1 0v2m1 0v2m1 0v2m1 0v2m1 0v2m1 0v2m1 0v2m1 0v2m1 0v1m1 0v2m1 0v2m1 0v2m1 0v2m1 0v2m1 0v2m1 0v2m1 0v2m1 0v2m1 0v2m1 0v1m1 0v2m1 0v2m1 0v2m1 0v2m1 0v2m1 0v2m1 0v1m1 0v2m1 0v2m1 0v2m1 0v2m1 0v1m1 0v2m1 0v2m1 0v2m1 0v1m1 0v2m1 0v2m1 0v1m1 0v2m1 0v2m1 0v1m1 0v2m1 0v2m1 0v1m1 0v2m1 0v2m1 0v1m1 0v2m1 0v2m1 0v1m1 0v2m1 0v1m1 0v2m1 0v1m1 0v2m1 0v1m1 0v2m1 0v2m1 0v1m1 0v2m1 0v1m1 0v1m1 0v2m1 0v1m1 0v2m1 0v1m1 0v2m1 0v1m1 0v2m1 0v1m1 0v1m1 0v2m1 0v1m1 0v1m1 0v2m1 0v1m1 0v1m1 0v2m1 0v1m1 0v1m1 0v2m1 0v1m1 0v1m1 0v1m1 0v2m1 0v1m1 0v1m1 0v1m1 0v1m1 0v2m1 0v1m1 0v1m1 0v1m1 0v1m1 0v1m1 0v2m1 0v1m1 0v1m1 0v1m1 0v1m1 0v1m1 0v1m1 0v1m1 0v1m1 0v1m1 0v1m1 0v1m1 0v1m1 0v1m1 0v1m1 0v1m1 0v1m1 0v1m1 0v1m1 0v1m1 0v1m1 0v1m1 0v1m1 -1v1m1 0v1m1 0v1m1 0v1m1 0v1m1 0v1m1 -1v1m1 0v1m1 0v1m1 0v1m1 -1v1m1 0v1m1 0v1m1 0v1m1 -1v1m1 0v1m1 0v1m1 -1v1m1 0v1m1 0v1m1 -1v1m1 0v1m1 0v1m1 -1v1m1 0v1m1 -1v1m1 0v1m1 0v1m1 -1v1m1 0v1m1 -1v1m1 0v1m1 -1v1m1 0v1m1 -1v1m1 0v1m1 -1v1m1 0v1m1 -1v1m1 -1v1m1 0v1m1 -1v1m1 0v1m1 -1v1m1 -1v1m1 0v1m1 -1v1m1 -1v1m1 0v1m1 -1v1m1 -1v1m1 -1v1m1 0v1m1 -1v1m1 -1v1m1 -1v1m1 0v1m1 -1v1m1 -1v1m1 -1v1m1 -1v1m1 0v1m1 -1v1m1 -1v1m1 -1v1m1 -1v1m1 -1v1m1 -1v1m1 -1v1m1 -1v1m1 -1v1m1 -1v1m1 -1v1m1 -1v1m1 -1v1m1 -1v1m1 -1v1m1 -1v1m1 -1v1m1 -1v1m1 -1v1m1 -1v1m1 -1v1m1 -1v1m1 -1v1m1 -1v1m1 -2v1m1 -1v1m1 -1v1m1 -1v1m1 -1v1m1 -2v1m1 -1v1m1 -1v1m1 -1v1m1 -1v1m1 -2v1m1 -1v1m1 -1v1m1 -2v1m1 -1v1m1 -1v1m1 -2v1m1 -1v1m1 -1v1m1 -2v1m1 -1v1m1 -1v1m1 -2v1m1 -1v1m1 -2v1m1 -1v1m1 -2v1m1 -1v1m1 -2v1m1 -1v1m1 -2v1m1 -1v1m1 -2v1m1 -1v1m1 -2v1m1 -1v1m1 -2v1m1 -2v1m1 -1v1m1 -2v1m1 -1v1m1 -2v1m1 -2v1m1 -1v1m1 -2v1m1 -2v1m1 -1v1m1 -2v1m1 -2v1m1 -1v1m1 -2v1m1 -2v1m1 -2v1m1 -2v1m1 -1v1m1 -2v1m1 -2v1m1 -2v1m1 -2v1m1 -1v1m1 -2v1m1 -2v1m1 -2v1m1 -2v1m1 -2v1m1 -2v1m1 -2v1m1 -2v1m1 -2v1m1 -2v1m1 -1v1m1 -2v1m1 -2v1m1 -2v1m1 -2v1m1 -3v2m1 -3v1m1 -2v1m1 -2v1m1 -2v1m1 -2v1m1 -2v1m1 -2v1m1 -2v1m1 -2v1m1 -2v1m1 -3v2m1 -3v1m1 -2v1m1 -2v1m1 -2v1m1 -2v1m1 -3v2m1 -3v1m1 -2v1m1 -2v1m1 -3v2m1 -3v1m1 -2v1m1 -2v1m1 -3v2m1 -3v1m1 -2v1m1 -3v2m1 -3v1m1 -2v1m1 -3v2m1 -3v1m1 -3v2m1 -3v1m1 -2v1m1 -3v2m1 -3v1m1 -3v2m1 -3v1m1 -3v2m1 -3v1m1 -2v1m1 -3v2m1 -3v1m1 -3v2m1 -3v1m1 -3v2m1 -3v1m1 -3v2m1 -4v2m1 -3v1m1 -3v2m1 -3v1m1 -3v2m1 -3v1m1 -3v2m1 -4v2m1 -3v1m1 -3v2m1 -4v2m1 -3v1m1 -3v2m1 -4v2m1 -3v1m1 -3v2m1 -4v2m1 -3v1m1 -3v2m1 -4v2m1 -4v2m1 -3v1m1 -3v2m1 -4v2m1 -4v2m1 -3v1m1 -3v2m1 -4v2m1 -4v2m1 -4v2m1 -3v1m1 -3v2m1 -4v2m1 -4v2m1 -4v2m1 -4v2m1 -4v2m1 -3v1m1 -3v2m1 -4v2m1 -4v2m1 -4v2m1 -4v2m1 -4v2m1 -4v2m1 -4v2m1 -4v2m1 -4v2m1 -4v2m1 -4v2m1 -4v2m1 -4v2m1 -4v2m1 -4v2m1 -4v2m1 -4v2m1 -4v2m1 -4v2m1 -4v2m1 -4v2m1 -4v2m1 -4v2m1 -4v2m1 -4v2m1 -4v2m1 -4v2m1 -4v2m1 -5v3m1 -5v2m1 -4v2m1 -4v2m1 -4v2m1 -4v2m1 -4v2m1 -5v3m1 -5v2m1 -4v2m1 -4v2m1 -4v2m1 -4v2m1 -5v3m1 -5v2m1 -4v2m1 -4v2m1 -4v2m1 -5v3m1 -5v2m1 -4v2" stroke="#30a0c0"/>
<path d="M133.5 30v2m1 0v2m1 0v3m1 0v2m1 0v2m1 0v3m1 0v2m1 0v2m1 0v3m1 0v2m1 0v2m1 0v3m1 0v2m1 0v2m1 0v2m1 0v3m1 0v2m1 0v2m1 0v2m1 0v3m1 0v2m1 0v2m1 0v2m1 0v3m1 0v2m1 0v2m1 0v2m1 0v2m1 0v3m1 0v2m1 0v2m1 0v2m1 0v2m1 0v2m1 0v3m1 0v2m1 0v2m1 0v2m1 0v2m1 0v2m1 0v2m1 0v2m1 0v3m1 0v2m1 0v2m1 0v2m1 0v2m1 0v2m1 0v2m1 0v2m1 0v2m1 0v2m1 0v2m1 0v2m1 0v2m1 0v2m1 0v2m1 0v2m1 0v2m1 0v2m1 0v2m1 0v2m1 0v2m1 0v2m1 0v2m1 0v2m1 0v2m1 0v1m1 0v2m1 0v2m1 0v2m1 0v2m1 0v2m1 0v2m1 0v2m1 0v1m1 0v2m1 0v2m1 0v2m1 0v2m1 0v1m1 0v2m1 0v2m1 0v2m1 0v2m1 0v1m1 0v2m1 0v2m1 0v2m1 0v1m1 0v2m1 0v2m1 0v1m1 0v2m1 0v2m1 0v1m1 0v2m1 0v2m1 0v1m1 0v2m1 0v2m1 0v1m1 0v2m1 0v1m1 0v2m1 0v1m1 0v2m1 0v2m1 0v1m1 0v2m1 0v1m1 0v2m1 0v1m1 0v2m1 0v1m1 0v2m1 0v1m1 0v1m1 0v2m1 0v1m1 0v2m1 0v1m1 0v2m1 0v1m1 0v1m1 0v2m1 0v1m1 0v1m1 0v2m1 0v1m1 0v1m1 0v2m1 0v1m1 0v1m1 0v2m1 0v1m1 0v1m1 0v1m1 0v2m1 0v1m1 0v1m1 0v1m1 0v1m1 0v2m1 0v1m1 0v1m1 0v1m1 0v1m1 0v1m1 0v1m1 0v1m1 0v2m1 0v1m1 0v1m1 0v1m1 0v1m1 0v1m1 0v1m1 0v1m1 0v1m1 0v1m1 0v1m1 0v1m1 0v1m1 0v1m1 0v1m1 0v1m1 0v1m1 0v1m1 -1v1m1 0v1m1 0v1m1 0v1m1 0v1m1 0v1m1 0v1m1 -1v1m1 0v1m1 0v1m1 0v1m1 0v1m1 -1v1m1 0v1m1 0v1m1 -1v1m1 0v1m1 0v1m1 0v1m1 -1v1m1 0v1m1 0v1m1 -1v1m1 0v1m1 0v1m1 -1v1m1 0v1m1 -1v1m1 0v1m1 -1v1m1 0v1m1 0v1m1 -1v1m1 0v1m1 -1v1m1 0v1m1 -1v1m1 0v1m1 -1v1m1 -1v1m1 0v1m1 -1v1m1 0v1m1 -1v1m1 -1v1m1 0v1m1 -1v1m1 0v1m1 -1v1m1 -1v1m1 -1v1m1 0v1m1 -1v1m1 -1v1m1 0v1m1 -1v1m1 -1v1m1 -1v1m1 0v1m1 -1v1m1 -1v1m1 -1v1m1 -1v1m1 -1v1m1 0v1m1 -1v1m1 -1v1m1 -1v1m1 -1v1m1 -1v1m1 -1v1m1 -1v1m1 -1v1m1 -1v1m1 -1v1m1 -1v1m1 -1v1m1 -1v1m1 -1v1m1 -1v1m1 -1v1m1 -1v1m1 -1v1m1 -1v1m1 -1v1m1 -1v1m1 -1v1m1 -1v1m1 -2v1m1 -1v1m1 -1v1m1 -1v1m1 -1v1m1 -1v1m1 -2v1m1 -1v1m1 -1v1m1 -1v1m1 -2v1m1 -1v1m1 -1v1m1 -2v1m1 -1v1m1 -1v1m1 -2v1m1 -1v1m1 -1v1m1 -2v1m1 -1v1m1 -1v1m1 -2v1m1 -1v1m1 -2v1m1 -1v1m1 -2v1m1 -1v1m1 -1v1m1 -2v1m1 -1v1m1 -2v1m1 -2v1m1 -1v1m1 -2v1m1 -1v1m1 -2v1m1 -1v1m1 -2v1m1 -2v1m1 -1v1m1 -2v1m1 -1v1m1 -2v1m1 -2v1m1 -1v1m1 -2v1m1 -2v1m1 -2v1m1 -1v1m1 -2v1m1 -2v1m1 -2v1m1 -1v1m1 -2v1m1 -2v1m1 -2v1m1 -2v1m1 -1v1m1 -2v1m1 -2v1m1 -2v1m1 -2v1m1 -2v1m1 -2v1m1 -2v1m1 -1v1m1 -2v1m1 -2v1m1 -2v1m1 -2v1m1 -2v1m1 -2v1m1 -2v1m1 -2v1m1 -2v1m1 -2v1m1 -2v1m1 -2v1m1 -2v1m1 -3v2m1 -3v1m1 -2v1m1 -2v1m1 -2v1m1 -2v1m1 -2v1m1 -2v1m1 -3v2m1 -3v1m1 -2v1m1 -2v1m1 -2v1m1 -3v2m1 -3v1m1 -2v1m1 -2v1m1 -3v2m1 -3v1m1 -2v1m1 -2v1m1 -3v2m1 -3v1m1 -2v1m1 -3v2m1 -3v1m1 -2v1m1 -3v2m1 -3v1m1 -3v2m1 -3v1m1 -2v1m1 -3v2m1 -3v1m1 -3v2m1 -3v1m1 -3v2m1 -3v1m1 -3v2m1 -3v1m1 -3v2m1 -3v1m1 -3v2m1 -3v1m1 -3v2m1 -3v1m1 -3v2m1 -3v1m1 -3v2m1 -3v1m1 -3v2m1 -4v2m1 -3v1m1 -3v2m1 -4v2m1 -3v1m1 -3v2m1 -4v2m1 -3v1m1 -3v2m1 -4v2m1 -3v1m1 -3v2m1 -4v2m1 -3v1m1 -3v2m1 -4v2m1 -4v2m1 -3v1m1 -3v2m1 -4v2m1 -4v2m1 -4v2m1 -3v1m1 -3v2m1 -4v2m1 -4v2m1 -4v2m1 -3v1m1 -3v2m1 -4v2m1 -4v2m1 -4v2m1 -4v2m1 -4v2m1 -4v2m1 -4v2m1 -3v1m1 -3v2m1 -4v2m1 -4v2m1 -4v2m1 -4v2m1 -4v2m1 -4v2m1 -4v2m1 -4v2m1 -4v2m1 -4v2m1 -4v2m1 -4v2m1 -4v2m1 -4v2m1 -4v2m1 -4v2m1 -4v2m1 -4v2m1 -5v3m1 -5v2m1 -4v2m1 -4v2m1 -4v2m1 -4v2m1 -4v2m1 -4v2m1 -4v2m1 -5v3m1 -5v2m1 -4v2m1 -4v2m1 -4v2m1 -4v2m1 -4v2m1 -5v3m1 -5v2m1 -4v2m1 -4v2m1 -4v2m1 -5v3m1 -5v2m1 -4v2m1 -4v2m1 -5v3m1 -5v2m1 -4v2m1 -4v2m1 -5v3" stroke="#20c0c0"/>
<path d="M129.5 30v1m1 0v3m1 0v2m1 0v2m1 0v3m1 0v2m1 0v2m1 0v3m1 0v2m1 0v2m1 0v3m1 0v2m1 0v2m1 0v3m1 0v2m1 0v2m1 0v2m1 0v3m1 0v2m1 0v2m1 0v2m1 0v3m1 0v2m1 0v2m1 0v2m1 0v2m1 0v3m1 0v2m1 0v2m1 0v2m1 0v2m1 0v3m1 0v2m1 0v2m1 0v2m1 0v2m1 0v2m1 0v2m1 0v3m1 0v2m1 0v2m1 0v2m1 0v2m1 0v2m1 0v2m1 0v2m1 0v2m1 0v2m1 0v2m1 0v2m1 0v3m1 0v2m1 0v2m1 0v2m1 0v2m1 0v2m1 0v2m1 0v2m1 0v2m1 0v2m1 0v1m1 0v2m1 0v2m1 0v2m1 0v2m1 0v2m1 0v2m1 0v2m1 0v2m1 0v2m1 0v2m1 0v2m1 0v1m1 0v2m1 0v2m1 0v2m1 0v2m1 0v2m1 0v1m1 0v2m1 0v2m1 0v2m1 0v2m1 0v1m1 0v2m1 0v2m1 0v2m1 0v1m1 0v2m1 0v2m1 0v2m1 0v1m1 0v2m1 0v2m1 0v1m1 0v2m1 0v2m1 0v1m1 0v2m1 0v1m1 0v2m1 0v2m1 0v1m1 0v2m1 0v1m1 0v2m1 0v2m1 0v1m1 0v2m1 0v1m1 0v2m1 0v1m1 0v2m1 0v1m1 0v2m1 0v1m1 0v2m1 0v1m1 0v2m1 0v1m1 0v1m1 0v2m1 0v1m1 0v2m1 0v1m1 0v1m1 0v2m1 0v1m1 0v1m1 0v2m1 0v1m1 0v1m1 0v2m1 0v1m1 0v1m1 0v1m1 0v2m1 0v1m1 0v1m1 0v1m1 0v2m1 0v1m1 0v1m1 0v1m1 0v1m1 0v2m1 0v1m1 0v1m1 0v1m1 0v1m1 0v1m1 0v1m1 0v1m1 0v1m1 0v2m1 0v1m1 0v1m1 0v1m1 0v1m1 0v1m1 0v1m1 0v1m1 0v1m1 0v1m1 0v1m1 0v1m1 -1v1m1 0v1m1 0v1m1 0v1m1 0v1m1 0v1m1 0v1m1 0v1m1 0v1m1 -1v1m1 0v1m1 0v1m1 0v1m1 0v1m1 -1v1m1 0v1m1 0v1m1 0v1m1 -1v1m1 0v1m1 0v1m1 -1v1m1 0v1m1 0v1m1 -1v1m1 0v1m1 0v1m1 -1v1m1 0v1m1 0v1m1 -1v1m1 0v1m1 -1v1m1 0v1m1 -1v1m1 0v1m1 -1v1m1 0v1m1 -1v1m1 0v1m1 -1v1m1 0v1m1 -1v1m1 0v1m1 -1v1m1 0v1m1 -1v1m1 -1v1m1 0v1m1 -1v1m1 -1v1m1 0v1m1 -1v1m1 -1v1m1 0v1m1 -1v1m1 -1v1m1 0v1m1 -1v1m1 -1v1m1 -1v1m1 0v1m1 -1v1m1 -1v1m1 -1v1m1 -1v1m1 -1v1m1 0v1m1 -1v1m1 -1v1m1 -1v1m1 -1v1m1 -1v1m1 -1v1m1 -1v1m1 -1v1m1 -1v1m1 -1v1m1 -1v1m1 -1v1m1 -1v1m1 -1v1m1 -1v1m1 -1v1m1 -1v1m1 -1v1m1 -1v1m1 -1v1m1 -1v1m1 -1v1m1 -1v1m1 -2v1m1 -1v1m1 -1v1m1 -1v1m1 -1v1m1 -1v1m1 -2v1m1 -1v1m1 -1v1m1 -1v1m1 -2v1m1 -1v1m1 -1v1m1 -1v1m1 -2v1m1 -1v1m1 -1v1m1 -2v1m1 -1v1m1 -2v1m1 -1v1m1 -1v1m1 -2v1m1 -1v1m1 -2v1m1 -1v1m1 -1v1m1 -2v1m1 -1v1m1 -2v1m1 -1v1m1 -2v1m1 -1v1m1 -2v1m1 -1v1m1 -2v1m1 -2v1m1 -1v1m1 -2v1m1 -1v1m1 -2v1m1 -2v1m1 -1v1m1 -2v1m1 -2v1m1 -1v1m1 -2v1m1 -2v1m1 -1v1m1 -2v1m1 -2v1m1 -2v1m1 -1v1m1 -2v1m1 -2v1m1 -2v1m1 -2v1m1 -1v1m1 -2v1m1 -2v1m1 -2v1m1 -2v1m1 -2v1m1 -1v1m1 -2v1m1 -2v1m1 -2v1m1 -2v1m1 -2v1m1 -2v1m1 -2v1m1 -2v1m1 -2v1m1 -2v1m1 -2v1m1 -2v1m1 -2v1m1 -2v1m1 -2v1m1 -2v1m1 -2v1m1 -2v1m1 -2v1m1 -3v2m1 -3v1m1 -2v1m1 -2v1m1 -2v1m1 -2v1m1 -2v1m1 -3v2m1 -3v1m1 -2v1m1 -2v1m1 -3v2m1 -3v1m1 -2v1m1 -2v1m1 -3v2m1 -3v1m1 -2v1m1 -2v1m1 -3v2m1 -3v1m1 -2v1m1 -3v2m1 -3v1m1 -2v1m1 -3v2m1 -3v1m1 -3v2m1 -3v1m1 -2v1m1 -3v2m1 -3v1m1 -3v2m1 -3v1m1 -3v2m1 -3v1m1 -3v2m1 -3v1m1 -3v2m1 -3v1m1 -3v2m1 -3v1m1 -3v2m1 -3v1m1 -3v2m1 -3v1m1 -3v2m1 -4v2m1 -3v1m1 -3v2m1 -3v1m1 -3v2m1 -4v2m1 -3v1m1 -3v2m1 -4v2m1 -3v1m1 -3v2m1 -4v2m1 -4v2m1 -3v1m1 -3v2m1 -4v2m1 -3v1m1 -3v2m1 -4v2m1 -4v2m1 -3v1m1 -3v2m1 -4v2m1 -4v2m1 -4v2m1 -3v1m1 -3v2m1 -4v2m1 -4v2m1 -4v2m1 -4v2m1 -4v2m1 -3v1m1 -3v2m1 -4v2m1 -4v2m1 -4v2m1 -4v2m1 -4v2m1 -4v2m1 -4v2m1 -4v2m1 -4v2m1 -4v2m1 -4v2m1 -4v2m1 -4v2m1 -4v2m1 -4v2m1 -4v2m1 -4v2m1 -4v2m1 -4v2m1 -4v2m1 -4v2m1 -4v2m1 -4v2m1 -4v2m1 -4v2m1 -4v2m1 -4v2m1 -4v2m1 -4v2m1 -5v3m1 -5v2m1 -4v2m1 -4v2m1 -4v2m1 -4v2m1 -4v2m1 -5v3m1 -5v2m1 -4v2m1 -4v2m1 -4v2m1 -4v2m1 -5v3m1 -5v2m1 -4v2m1 -4v2m1 -5v3m1 -5v2m1 -4v2m1 -4v2m1 -5v3m1 -5v2m1 -4v2m1 -4v2m1 -5v3m1 -5v2m1 -4v2" stroke="#5020c0"/>
<path d="M125.5 30v1m1 0v2m1 0v3m1 0v2m1 0v2m1 0v2m1 0v3m1 0v2m1 0v2m1 0v3m1 0v2m1 0v2m1 0v3m1 0v2m1 0v2m1 0v2m1 0v3m1 0v2m1 0v2m1 0v2m1 0v3m1 0v2m1 0v2m1 0v2m1 0v3m1 0v2m1 0v2m1 0v2m1 0v2m1 0v3m1 0v2m1 0v2m1 0v2m1 0v2m1 0v2m1 0v3m1 0v2m1 0v2m1 0v2m1 0v2m1 0v2m1 0v2m1 0v2m1 0v3m1 0v2m1 0v2m1 0v2m1 0v2m1 0v2m1 0v2m1 0v2m1 0v2m1 0v2m1 0v2m1 0v2m1 0v2m1 0v2m1 0v2m1 0v2m1 0v2m1 0v2m1 0v2m1 0v2m1 0v2m1 0v2m1 0v2m1 0v2m1 0v1m1 0v2m1 0v2m1 0v2m1 0v2m1 0v2m1 0v2m1 0v2m1 0v1m1 0v2m1 0v2m1 0v2m1 0v2m1 0v2m1 0v1m1 0v2m1 0v2m1 0v2m1 0v1m1 0v2m1 0v2m1 0v2m1 0v1m1 0v2m1 0v2m1 0v1m1 0v2m1 0v2m1 0v1m1 0v2m1 0v2m1 0v1m1 0v2m1 0v2m1 0v1m1 0v2m1 0v1m1 0v2m1 0v2m1 0v1m1 0v2m1 0v1m1 0v2m1 0v1m1 0v2m1 0v1m1 0v2m1 0v1m1 0v2m1 0v1m1 0v2m1 0v1m1 0v2m1 0v1m1 0v1m1 0v2m1 0v1m1 0v2m1 0v1m1 0v1m1 0v2m1 0v1m1 0v1m1 0v2m1 0v1m1 0v1m1 0v2m1 0v1m1 0v1m1 0v1m1 0v2m1 0v1m1 0v1m1 0v1m1 0v2m1 0v1m1 0v1m1 0v1m1 0v1m1 0v1m1 0v2m1 0v1m1 0v1m1 0v1m1 0v1m1 0v1m1 0v1m1 0v1m1 0v1m1 0v1m1 0v1m1 0v1m1 0v1m1 0v1m1 0v1m1 0v1m1 0v1m1 0v1m1 0v1m1 0v1m1 0v1m1 0v1m1 0v1m1 0v1m1 0v1m1 0v1m1 -1v1m1 0v1m1 0v1m1 0v1m1 0v1m1 0v1m1 -1v1m1 0v1m1 0v1m1 0v1m1 -1v1m1 0v1m1 0v1m1 0v1m1 -1v1m1 0v1m1 0v1m1 -1v1m1 0v1m1 0v1m1 -1v1m1 0v1m1 -1v1m1 0v1m1 0v1m1 -1v1m1 0v1m1 -1v1m1 0v1m1 -1v1m1 0v1m1 -1v1m1 0v1m1 -1v1m1 0v1m1 -1v1m1 0v1m1 -1v1m1 -1v1m1 0v1m1 -1v1m1 0v1m1 -1v1m1 -1v1m1 0v1m1 -1v1m1 -1v1m1 0v1m1 -1v1m1 -1v1m1 -1v1m1 0v1m1 -1v1m1 -1v1m1 -1v1m1 0v1m1 -1v1m1 -1v1m1 -1v1m1 -1v1m1 0v1m1 -1v1m1 -1v1m1 -1v1m1 -1v1m1 -1v1m1 -1v1m1 -1v1m1 -1v1m1 -1v1m1 -1v1m1 -1v1m1 -1v1m1 -1v1m1 -1v1m1 -1v1m1 -1v1m1 -1v1m1 -1v1m1 -1v1m1 -1v1m1 -1v1m1 -1v1m1 -1v1m1 -1v1m1 -2v1m1 -1v1m1 -1v1m1 -1v1m1 -1v1m1 -2v1m1 -1v1m1 -1v1m1 -1v1m1 -2v1m1 -1v1m1 -1v1m1 -1v1m1 -2v1m1 -1v1m1 -1v1m1 -2v1m1 -1v1m1 -1v1m1 -2v1m1 -1v1m1 -2v1m1 -1v1m1 -1v1m1 -2v1m1 -1v1m1 -2v1m1 -1v1m1 -2v1m1 -1v1m1 -2v1m1 -1v1m1 -2v1m1 -1v1m1 -2v1m1 -1v1m1 -2v1m1 -2v1m1 -1v1m1 -2v1m1 -1v1m1 -2v1m1 -2v1m1 -1v1m1 -2v1m1 -2v1m1 -2v1m1 -1v1m1 -2v1m1 -2v1m1 -1v1m1 -2v1m1 -2v1m1 -2v1m1 -1v1m1 -2v1m1 -2v1m1 -2v1m1 -2v1m1 -2v1m1 -1v1m1 -2v1m1 -2v1m1 -2v1m1 -2v1m1 -2v1m1 -2v1m1 -2v1m1 -2v1m1 -2v1m1 -2v1m1 -2v1m1 -2v1m1 -2v1m1 -2v1m1 -2v1m1 -2v1m1 -2v1m1 -2v1m1 -2v1m1 -2v1m1 -2v1m1 -2v1m1 -2v1m1 -3v2m1 -3v1m1 -2v1m1 -2v1m1 -2v1m1 -2v1m1 -3v2m1 -3v1m1 -2v1m1 -2v1m1 -2v1m1 -3v2m1 -3v1m1 -2v1m1 -2v1m1 -3v2m1 -3v1m1 -2v1m1 -3v2m1 -3v1m1 -2v1m1 -3v2m1 -3v1m1 -2v1m1 -3v2m1 -3v1m1 -3v2m1 -3v1m1 -3v2m1 -3v1m1 -2v1m1 -3v2m1 -3v1m1 -3v2m1 -3v1m1 -3v2m1 -3v1m1 -3v2m1 -3v1m1 -3v2m1 -3v1m1 -3v2m1 -3v1m1 -3v2m1 -4v2m1 -3v1m1 -3v2m1 -3v1m1 -3v2m1 -4v2m1 -3v1m1 -3v2m1 -4v2m1 -3v1m1 -3v2m1 -4v2m1 -3v1m1 -3v2m1 -4v2m1 -3v1m1 -3v2m1 -4v2m1 -4v2m1 -3v1m1 -3v2m1 -4v2m1 -4v2m1 -4v2m1 -3v1m1 -3v2m1 -4v2m1 -4v2m1 -4v2m1 -4v2m1 -3v1m1 -3v2m1 -4v2m1 -4v2m1 -4v2m1 -4v2m1 -4v2m1 -4v2m1 -3v1m1 -3v2m1 -4v2m1 -4v2m1 -4v2m1 -4v2m1 -4v2m1 -4v2m1 -4v2m1 -4v2m1 -4v2m1 -4v2m1 -4v2m1 -4v2m1 -4v2m1 -4v2m1 -4v2m1 -4v2m1 -4v2m1 -4v2m1 -4v2m1 -5v3m1 -5v2m1 -4v2m1 -4v2m1 -4v2m1 -4v2m1 -4v2m1 -4v2m1 -4v2m1 -5v3m1 -5v2m1 -4v2m1 -4v2m1 -4v2m1 -4v2m1 -5v3m1 -5v2m1 -4v2m1 -4v2m1 -4v2m1 -5v3m1 -5v2m1 -4v2m1 -4v2m1 -4v2m1 -5v3m1 -5v2m1 -4v2m1 -4v2m1 -5v3m1 -5v2m1 -4v2m1 -5v3m1 -5v2m1 -4v2m1 -4v2m1 -5v3" stroke="#10a070"/>
<path d="M122.5 30v3m1 0v2m1 0v2m1 0v3m1 0v2m1 0v2m1 0v3m1 0v2m1 0v2m1 0v2m1 0v3m1 0v2m1 0v2m1 0v3m1 0v2m1 0v2m1 0v2m1 0v3m1 0v2m1 0v2m1 0v2m1 0v3m1 0v2m1 0v2m1 0v2m1 0v2m1 0v3m1 0v2m1 0v2m1 0v2m1 0v2m1 0v3m1 0v2m1 0v2m1 0v2m1 0v2m1 0v2m1 0v2m1 0v3m1 0v2m1 0v2m1 0v2m1 0v2m1 0v2m1 0v2m1 0v2m1 0v2m1 0v2m1 0v2m1 0v2m1 0v2m1 0v3m1 0v2m1 0v2m1 0v2m1 0v2m1 0v2m1 0v2m1 0v1m1 0v2m1 0v2m1 0v2m1 0v2m1 0v2m1 0v2m1 0v2m1 0v2m1 0v2m1 0v2m1 0v2m1 0v2m1 0v1m1 0v2m1 0v2m1 0v2m1 0v2m1 0v2m1 0v1m1 0v2m1 0v2m1 0v2m1 0v2m1 0v1m1 0v2m1 0v2m1 0v2m1 0v1m1 0v2m1 0v2m1 0v2m1 0v1m1 0v2m1 0v2m1 0v1m1 0v2m1 0v2m1 0v1m1 0v2m1 0v2m1 0v1m1 0v2m1 0v1m1 0v2m1 0v2m1 0v1m1 0v2m1 0v1m1 0v2m1 0v1m1 0v2m1 0v1m1 0v2m1 0v1m1 0v2m1 0v1m1 0v2m1 0v1m1 0v2m1 0v1m1 0v2m1 0v1m1 0v1m1 0v2m1 0v1m1 0v2m1 0v1m1 0v1m1 0v2m1 0v1m1 0v1m1 0v2m1 0v1m1 0v1m1 0v2m1 0v1m1 0v1m1 0v1m1 0v2m1 0v1m1 0v1m1 0v1m1 0v1m1 0v2m1 0v1m1 0v1m1 0v1m1 0v1m1 0v1m1 0v2m1 0v1m1 0v1m1 0v1m1 0v1m1 0v1m1 0v1m1 0v1m1 0v1m1 0v1m1 0v1m1 0v1m1 0v1m1 0v1m1 0v1m1 0v1m1 0v1m1 0v1m1 0v1m1 0v1m1 0v1m1 0v1m1 -1v1m1 0v1m1 0v1m1 0v1m1 0v1m1 0v1m1 0v1m1 -1v1m1 0v1m1 0v1m1 0v1m1 -1v1m1 0v1m1 0v1m1 0v1m1 -1v1m1 0v1m1 0v1m1 -1v1m1 0v1m1 0v1m1 -1v1m1 0v1m1 0v1m1 -1v1m1 0v1m1 -1v1m1 0v1m1 0v1m1 -1v1m1 0v1m1 -1v1m1 0v1m1 -1v1m1 0v1m1 -1v1m1 0v1m1 -1v1m1 0v1m1 -1v1m1 -1v1m1 0v1m1 -1v1m1 0v1m1 -1v1m1 -1v1m1 0v1m1 -1v1m1 -1v1m1 0v1m1 -1v1m1 -1v1m1 -1v1m1 0v1m1 -1v1m1 -1v1m1 -1v1m1 0v1m1 -1v1m1 -1v1m1 -1v1m1 -1v1m1 -1v1m1 0v1m1 -1v1m1 -1v1m1 -1v1m1 -1v1m1 -1v1m1 -1v1m1 -1v1m1 -1v1m1 -1v1m1 -1v1m1 -1v1m1 -1v1m1 -1v1m1 -1v1m1 -1v1m1 -1v1m1 -1v1m1 -1v1m1 -1v1m1 -1v1m1 -1v1m1 -1v1m1 -1v1m1 -2v1m1 -1v1m1 -1v1m1 -1v1m1 -1v1m1 -2v1m1 -1v1m1 -1v1m1 -1v1m1 -1v1m1 -2v1m1 -1v1m1 -1v1m1 -2v1m1 -1v1m1 -1v1m1 -2v1m1 -1v1m1 -1v1m1 -2v1m1 -1v1m1 -1v1m1 -2v1m1 -1v1m1 -2v1m1 -1v1m1 -2v1m1 -1v1m1 -2v1m1 -1v1m1 -2v1m1 -1v1m1 -2v1m1 -1v1m1 -2v1m1 -1v1m1 -2v1m1 -1v1m1 -2v1m1 -2v1m1 -1v1m1 -2v1m1 -2v1m1 -1v1m1 -2v1m1 -2v1m1 -1v1m1 -2v1m1 -2v1m1 -1v1m1 -2v1m1 -2v1m1 -2v1m1 -2v1m1 -1v1m1 -2v1m1 -2v1m1 -2v1m1 -2v1m1 -1v1m1 -2v1m1 -2v1m1 -2v1m1 -2v1m1 -2v1m1 -2v1m1 -2v1m1 -2v1m1 -2v1m1 -1v1m1 -2v1m1 -2v1m1 -2v1m1 -2v1m1 -2v1m1 -2v1m1 -3v2m1 -3v1m1 -2v1m1 -2v1m1 -2v1m1 -2v1m1 -2v1m1 -2v1m1 -2v1m1 -2v1m1 -3v2m1 -3v1m1 -2v1m1 -2v1m1 -2v1m1 -2v1m1 -3v2m1 -3v1m1 -2v1m1 -2v1m1 -3v2m1 -3v1m1 -2v1m1 -2v1m1 -3v2m1 -3v1m1 -2v1m1 -3v2m1 -3v1m1 -2v1m1 -3v2m1 -3v1m1 -3v2m1 -3v1m1 -2v1m1 -3v2m1 -3v1m1 -3v2m1 -3v1m1 -2v1m1 -3v2m1 -3v1m1 -3v2m1 -3v1m1 -3v2m1 -3v1m1 -3v2m1 -3v1m1 -3v2m1 -4v2m1 -3v1m1 -3v2m1 -3v1m1 -3v2m1 -3v1m1 -3v2m1 -4v2m1 -3v1m1 -3v2m1 -4v2m1 -3v1m1 -3v2m1 -4v2m1 -3v1m1 -3v2m1 -4v2m1 -3v1m1 -3v2m1 -4v2m1 -4v2m1 -3v1m1 -3v2m1 -4v2m1 -4v2m1 -3v1m1 -3v2m1 -4v2m1 -4v2m1 -4v2m1 -3v1m1 -3v2m1 -4v2m1 -4v2m1 -4v2m1 -4v2m1 -3v1m1 -3v2m1 -4v2m1 -4v2m1 -4v2m1 -4v2m1 -4v2m1 -4v2m1 -4v2m1 -4v2m1 -4v2m1 -4v2m1 -4v2m1 -4v2m1 -4v2m1 -4v2m1 -4v2m1 -4v2m1 -4v2m1 -4v2m1 -4v2m1 -4v2m1 -4v2m1 -4v2m1 -4v2m1 -4v2m1 -4v2m1 -4v2m1 -4v2m1 -4v2m1 -4v2m1 -4v2m1 -5v3m1 -5v2m1 -4v2m1 -4v2m1 -4v2m1 -4v2m1 -4v2m1 -5v3m1 -5v2m1 -4v2m1 -4v2m1 -4v2m1 -5v3m1 -5v2m1 -4v2m1 -4v2m1 -4v2m1 -5v3m1 -5v2m1 -4v2m1 -4v2m1 -5v3m1 -5v2m1 -4v2m1 -4v2m1 -5v3m1 -5v2m1 -4v2m1 -5v3m1 -5v2m1 -4v2m1 -4v2m1 -5v3m1 -5v2m1 -4v2" stroke="#f02040"/>
<path d="M118.5 30v2m1 0v2m1 0v3m1 0v2m1 0v2m1 0v3m1 0v2m1 0v2m1 0v3m1 0v2m1 0v2m1 0v2m1 0v3m1 0v2m1 0v2m1 0v3m1 0v2m1 0v2m1 0v2m1 0v3m1 0v2m1 0v2m1 0v2m1 0v2m1 0v3m1 0v2m1 0v2m1 0v2m1 0v3m1 0v2m1 0v2m1 0v2m1 0v2m1 0v2m1 0v3m1 0v2m1 0v2m1 0v2m1 0v2m1 0v2m1 0v2m1 0v2m1 0v2m1 0v3m1 0v2m1 0v2m1 0v2m1 0v2m1 0v2m1 0v2m1 0v2m1 0v2m1 0v2m1 0v2m1 0v2m1 0v2m1 0v2m1 0v2m1 0v2m1 0v2m1 0v2m1 0v2m1 0v2m1 0v2m1 0v2m1 0v2m1 0v2m1 0v1m1 0v2m1 0v2m1 0v2m1 0v2m1 0v2m1 0v2m1 0v2m1 0v1m1 0v2m1 0v2m1 0v2m1 0v2m1 0v1m1 0v2m1 0v2m1 0v2m1 0v2m1 0v1m1 0v2m1 0v2m1 0v1m1 0v2m1 0v2m1 0v2m1 0v1m1 0v2m1 0v2m1 0v1m1 0v2m1 0v2m1 0v1m1 0v2m1 0v1m1 0v2m1 0v2m1 0v1m1 0v2m1 0v1m1 0v2m1 0v1m1 0v2m1 0v2m1 0v1m1 0v2m1 0v1m1 0v2m1 0v1m1 0v2m1 0v1m1 0v1m1 0v2m1 0v1m1 0v2m1 0v1m1 0v2m1 0v1m1 0v1m1 0v2m1 0v1m1 0v1m1 0v2m1 0v1m1 0v1m1 0v2m1 0v1m1 0v1m1 0v2m1 0v1m1 0v1m1 0v1m1 0v1m1 0v2m1 0v1m1 0v1m1 0v1m1 0v2m1 0v1m1 0v1m1 0v1m1 0v1m1 0v1m1 0v1m1 0v1m1 0v2m1 0v1m1 0v1m1 0v1m1 0v1m1 0v1m1 0v1m1 0v1m1 0v1m1 0v1m1 0v1m1 0v1m1 0v1m1 0v1m1 0v1m1 0v1m1 0v1m1 -1v1m1 0v1m1 0v1m1 0v1m1 0v1m1 0v1m1 0v1m1 0v1m1 -1v1m1 0v1m1 0v1m1 0v1m1 0v1m1 -1v1m1 0v1m1 0v1m1 -1v1m1 0v1m1 0v1m1 0v1m1 -1v1m1 0v1m1 0v1m1 -1v1m1 0v1m1 -1v1m1 0v1m1 0v1m1 -1v1m1 0v1m1 -1v1m1 0v1m1 0v1m1 -1v1m1 0v1m1 -1v1m1 0v1m1 -1v1m1 -1v1m1 0v1m1 -1v1m1 0v1m1 -1v1m1 0v1m1 -1v1m1 -1v1m1 0v1m1 -1v1m1 0v1m1 -1v1m1 -1v1m1 -1v1m1 0v1m1 -1v1m1 -1v1m1 0v1m1 -1v1m1 -1v1m1 -1v1m1 0v1m1 -1v1m1 -1v1m1 -1v1m1 -1v1m1 -1v1m1 0v1m1 -1v1m1 -1v1m1 -1v1m1 -1v1m1 -1v1m1 -1v1m1 -1v1m1 -1v1m1 -1v1m1 -1v1m1 -1v1m1 -1v1m1 -1v1m1 -1v1m1 -1v1m1 -1v1m1 -1v1m1 -1v1m1 -1v1m1 -1v1m1 -1v1m1 -1v1m1 -1v1m1 -2v1m1 -1v1m1 -1v1m1 -1v1m1 -1v1m1 -1v1m1 -2v1m1 -1v1m1 -1v1m1 -1v1m1 -2v1m1 -1v1m1 -1v1m1 -2v1m1 -1v1m1 -1v1m1 -2v1m1 -1v1m1 -1v1m1 -2v1m1 -1v1m1 -1v1m1 -2v1m1 -1v1m1 -2v1m1 -1v1m1 -2v1m1 -1v1m1 -1v1m1 -2v1m1 -1v1m1 -2v1m1 -2v1m1 -1v1m1 -2v1m1 -1v1m1 -2v1m1 -1v1m1 -2v1m1 -2v1m1 -1v1m1 -2v1m1 -1v1m1 -2v1m1 -2v1m1 -1v1m1 -2v1m1 -2v1m1 -2v1m1 -1v1m1 -2v1m1 -2v1m1 -2v1m1 -1v1m1 -2v1m1 -2v1m1 -2v1m1 -2v1m1 -1v1m1 -2v1m1 -2v1m1 -2v1m1 -2v1m1 -2v1m1 -2v1m1 -1v1m1 -2v1m1 -2v1m1 -2v1m1 -2v1m1 -2v1m1 -2v1m1 -2v1m1 -2v1m1 -2v1m1 -2v1m1 -2v1m1 -2v1m1 -2v1m1 -2v1m1 -3v2m1 -3v1m1 -2v1m1 -2v1m1 -2v1m1 -2v1m1 -2v1m1 -2v1m1 -3v2m1 -3v1m1 -2v1m1 -2v1m1 -2v1m1 -3v2m1 -3v1m1 -2v1m1 -2v1m1 -3v2m1 -3v1m1 -2v1m1 -2v1m1 -3v2m1 -3v1m1 -2v1m1 -3v2m1 -3v1m1 -2v1m1 -3v2m1 -3v1m1 -3v2m1 -3v1m1 -2v1m1 -3v2m1 -3v1m1 -3v2m1 -3v1m1 -3v2m1 -3v1m1 -2v1m1 -3v2m1 -3v1m1 -3v2m1 -4v2m1 -3v1m1 -3v2m1 -3v1m1 -3v2m1 -3v1m1 -3v2m1 -3v1m1 -3v2m1 -4v2m1 -3v1m1 -3v2m1 -3v1m1 -3v2m1 -4v2m1 -3v1m1 -3v2m1 -4v2m1 -3v1m1 -3v2m1 -4v2m1 -4v2m1 -3v1m1 -3v2m1 -4v2m1 -4v2m1 -3v1m1 -3v2m1 -4v2m1 -4v2m1 -3v1m1 -3v2m1 -4v2m1 -4v2m1 -4v2m1 -4v2m1 -3v1m1 -3v2m1 -4v2m1 -4v2m1 -4v2m1 -4v2m1 -4v2m1 -4v2m1 -3v1m1 -3v2m1 -4v2m1 -4v2m1 -4v2m1 -4v2m1 -4v2m1 -4v2m1 -4v2m1 -4v2m1 -4v2m1 -4v2m1 -4v2m1 -4v2m1 -4v2m1 -4v2m1 -4v2m1 -4v2m1 -4v2m1 -4v2m1 -4v2m1 -4v2m1 -5v3m1 -5v2m1 -4v2m1 -4v2m1 -4v2m1 -4v2m1 -4v2m1 -4v2m1 -4v2m1 -5v3m1 -5v2m1 -4v2m1 -4v2m1 -4v2m1 -4v2m1 -5v3m1 -5v2m1 -4v2m1 -4v2m1 -4v2m1 -5v3m1 -5v2m1 -4v2m1 -4v2m1 -5v3m1 -5v2m1 -4v2m1 -4v2m1 -5v3m1 -5v2m1 -4v2m1 -4v2m1 -5v3m1 -5v2m1 -4v2m1 -5v3m1 -5v2m1 -4v2m1 -4v2m1 -5v3m1 -5v2m1 -4v2m1 -5v3m1 -5v2" stroke="#c06070"/>
<path d="M114.5 30v1m1 0v3m1 0v2m1 0v2m1 0v3m1 0v2m1 0v2m1 0v3m1 0v2m1 0v2m1 0v3m1 0v2m1 0v2m1 0v2m1 0v3m1 0v2m1 0v2m1 0v2m1 0v3m1 0v2m1 0v2m1 0v2m1 0v3m1 0v2m1 0v2m1 0v2m1 0v3m1 0v2m1 0v2m1 0v2m1 0v2m1 0v2m1 0v3m1 0v2m1 0v2m1 0v2m1 0v2m1 0v2m1 0v2m1 0v3m1 0v2m1 0v2m1 0v2m1 0v2m1 0v2m1 0v2m1 0v2m1 0v2m1 0v2m1 0v2m1 0v2m1 0v2m1 0v2m1 0v3m1 0v2m1 0v2m1 0v2m1 0v1m1 0v2m1 0v2m1 0v2m1 0v2m1 0v2m1 0v2m1 0v2m1 0v2m1 0v2m1 0v2m1 0v2m1 0v2m1 0v2m1 0v1m1 0v2m1 0v2m1 0v2m1 0v2m1 0v2m1 0v2m1 0v1m1 0v2m1 0v2m1 0v2m1 0v2m1 0v1m1 0v2m1 0v2m1 0v2m1 0v1m1 0v2m1 0v2m1 0v1m1 0v2m1 0v2m1 0v2m1 0v1m1 0v2m1 0v2m1 0v1m1 0v2m1 0v1m1 0v2m1 0v2m1 0v1m1 0v2m1 0v1m1 0v2m1 0v2m1 0v1m1 0v2m1 0v1m1 0v2m1 0v1m1 0v2m1 0v1m1 0v2m1 0v1m1 0v2m1 0v1m1 0v1m1 0v2m1 0v1m1 0v2m1 0v1m1 0v2m1 0v1m1 0v1m1 0v2m1 0v1m1 0v1m1 0v2m1 0v1m1 0v1m1 0v2m1 0v1m1 0v1m1 0v1m1 0v2m1 0v1m1 0v1m1 0v1m1 0v2m1 0v1m1 0v1m1 0v1m1 0v1m1 0v2m1 0v1m1 0v1m1 0v1m1 0v1m1 0v1m1 0v1m1 0v1m1 0v1m1 0v1m1 0v2m1 0v1m1 0v1m1 0v1m1 0v1m1 0v1m1 0v1m1 0v1m1 0v1m1 0v1m1 -1v1m1 0v1m1 0v1m1 0v1m1 0v1m1 0v1m1 0v1m1 0v1m1 0v1m1 -1v1m1 0v1m1 0v1m1 0v1m1 0v1m1 0v1m1 -1v1m1 0v1m1 0v1m1 0v1m1 -1v1m1 0v1m1 0v1m1 -1v1m1 0v1m1 0v1m1 -1v1m1 0v1m1 0v1m1 -1v1m1 0v1m1 0v1m1 -1v1m1 0v1m1 -1v1m1 0v1m1 -1v1m1 0v1m1 -1v1m1 0v1m1 -1v1m1 0v1m1 -1v1m1 0v1m1 -1v1m1 0v1m1 -1v1m1 0v1m1 -1v1m1 -1v1m1 0v1m1 -1v1m1 -1v1m1 0v1m1 -1v1m1 -1v1m1 0v1m1 -1v1m1 -1v1m1 0v1m1 -1v1m1 -1v1m1 -1v1m1 0v1m1 -1v1m1 -1v1m1 -1v1m1 -1v1m1 -1v1m1 0v1m1 -1v1m1 -1v1m1 -1v1m1 -1v1m1 -1v1m1 -1v1m1 -1v1m1 -1v1m1 -1v1m1 -1v1m1 -1v1m1 -1v1m1 -1v1m1 -1v1m1 -1v1m1 -1v1m1 -1v1m1 -1v1m1 -1v1m1 -1v1m1 -1v1m1 -1v1m1 -1v1m1 -2v1m1 -1v1m1 -1v1m1 -1v1m1 -1v1m1 -1v1m1 -2v1m1 -1v1m1 -1v1m1 -1v1m1 -2v1m1 -1v1m1 -1v1m1 -1v1m1 -2v1m1 -1v1m1 -1v1m1 -2v1m1 -1v1m1 -1v1m1 -2v1m1 -1v1m1 -2v1m1 -1v1m1 -2v1m1 -1v1m1 -1v1m1 -2v1m1 -1v1m1 -2v1m1 -1v1m1 -2v1m1 -1v1m1 -2v1m1 -1v1m1 -2v1m1 -2v1m1 -1v1m1 -2v1m1 -1v1m1 -2v1m1 -2v1m1 -1v1m1 -2v1m1 -2v1m1 -1v1m1 -2v1m1 -2v1m1 -1v1m1 -2v1m1 -2v1m1 -2v1m1 -1v1m1 -2v1m1 -2v1m1 -2v1m1 -1v1m1 -2v1m1 -2v1m1 -2v1m1 -2v1m1 -2v1m1 -2v1m1 -1v1m1 -2v1m1 -2v1m1 -2v1m1 -2v1m1 -2v1m1 -2v1m1 -2v1m1 -2v1m1 -2v1m1 -2v1m1 -2v1m1 -2v1m1 -2v1m1 -2v1m1 -2v1m1 -2v1m1 -2v1m1 -2v1m1 -2v1m1 -3v2m1 -3v1m1 -2v1m1 -2v1m1 -2v1m1 -2v1m1 -2v1m1 -3v2m1 -3v1m1 -2v1m1 -2v1m1 -2v1m1 -3v2m1 -3v1m1 -2v1m1 -2v1m1 -3v2m1 -3v1m1 -2v1m1 -3v2m1 -3v1m1 -2v1m1 -3v2m1 -3v1m1 -2v1m1 -3v2m1 -3v1m1 -3v2m1 -3v1m1 -2v1m1 -3v2m1 -3v1m1 -3v2m1 -3v1m1 -3v2m1 -3v1m1 -3v2m1 -3v1m1 -3v2m1 -3v1m1 -3v2m1 -3v1m1 -3v2m1 -3v1m1 -3v2m1 -3v1m1 -3v2m1 -4v2m1 -3v1m1 -3v2m1 -3v1m1 -3v2m1 -4v2m1 -3v1m1 -3v2m1 -4v2m1 -3v1m1 -3v2m1 -4v2m1 -3v1m1 -3v2m1 -4v2m1 -4v2m1 -3v1m1 -3v2m1 -4v2m1 -4v2m1 -3v1m1 -3v2m1 -4v2m1 -4v2m1 -4v2m1 -3v1m1 -3v2m1 -4v2m1 -4v2m1 -4v2m1 -4v2m1 -4v2m1 -3v1m1 -3v2m1 -4v2m1 -4v2m1 -4v2m1 -4v2m1 -4v2m1 -4v2m1 -4v2m1 -4v2m1 -4v2m1 -4v2m1 -4v2m1 -4v2m1 -4v2m1 -4v2m1 -4v2m1 -4v2m1 -4v2m1 -4v2m1 -4v2m1 -4v2m1 -4v2m1 -4v2m1 -4v2m1 -4v2m1 -4v2m1 -4v2m1 -4v2m1 -4v2m1 -4v2m1 -5v3m1 -5v2m1 -4v2m1 -4v2m1 -4v2m1 -4v2m1 -4v2m1 -5v3m1 -5v2m1 -4v2m1 -4v2m1 -4v2m1 -4v2m1 -5v3m1 -5v2m1 -4v2m1 -4v2m1 -4v2m1 -5v3m1 -5v2m1 -4v2m1 -4v2m1 -5v3m1 -5v2m1 -4v2m1 -4v2m1 -5v3m1 -5v2m1 -4v2m1 -5v3m1 -5v2m1 -4v2m1 -5v3m1 -5v2m1 -4v2m1 -5v3m1 -5v2m1 -4v2m1 -5v3m1 -5v2" stroke="#1010f0"/>
<path d="M110.5 30v1m1 0v2m1 0v2m1 0v3m1 0v2m1 0v2m1 0v3m1 0v2m1 0v2m1 0v3m1 0v2m1 0v2m1 0v3m1 0v2m1 0v2m1 0v2m1 0v3m1 0v2m1 0v2m1 0v2m1 0v3m1 0v2m1 0v2m1 0v2m1 0v3m1 0v2m1 0v2m1 0v2m1 0v2m1 0v3m1 0v2m1 0v2m1 0v2m1 0v2m1 0v2m1 0v3m1 0v2m1 0v2m1 0v2m1 0v2m1 0v2m1 0v2m1 0v2m1 0v2m1 0v3m1 0v2m1 0v2m1 0v2m1 0v2m1 0v2m1 0v2m1 0v2m1 0v2m1 0v2m1 0v2m1 0v2m1 0v2m1 0v2m1 0v2m1 0v2m1 0v2m1 0v2m1 0v2m1 0v2m1 0v2m1 0v2m1 0v2m1 0v1m1 0v2m1 0v2m1 0v2m1 0v2m1 0v2m1 0v2m1 0v2m1 0v1m1 0v2m1 0v2m1 0v2m1 0v2m1 0v1m1 0v2m1 0v2m1 0v2m1 0v2m1 0v1m1 0v2m1 0v2m1 0v2m1 0v1m1 0v2m1 0v2m1 0v1m1 0v2m1 0v2m1 0v1m1 0v2m1 0v2m1 0v1m1 0v2m1 0v2m1 0v1m1 0v2m1 0v1m1 0v2m1 0v2m1 0v1m1 0v2m1 0v1m1 0v2m1 0v1m1 0v2m1 0v1m1 0v2m1 0v1m1 0v2m1 0v1m1 0v2m1 0v1m1 0v2m1 0v1m1 0v1m1 0v2m1 0v1m1 0v2m1 0v1m1 0v1m1 0v2m1 0v1m1 0v1m1 0v2m1 0v1m1 0v1m1 0v2m1 0v1m1 0v1m1 0v1m1 0v2m1 0v1m1 0v1m1 0v1m1 0v2m1 0v1m1 0v1m1 0v1m1 0v1m1 0v1m1 0v2m1 0v1m1 0v1m1 0v1m1 0v1m1 0v1m1 0v1m1 0v1m1 0v1m1 0v1m1 0v1m1 0v1m1 0v1m1 0v1m1 0v1m1 0v1m1 0v1m1 0v1m1 0v1m1 0v1m1 0v1m1 0v1m1 0v1m1 0v1m1 0v1m1 0v1m1 -1v1m1 0v1m1 0v1m1 0v1m1 0v1m1 0v1m1 -1v1m1 0v1m1 0v1m1 0v1m1 -1v1m1 0v1m1 0v1m1 0v1m1 -1v1m1 0v1m1 0v1m1 -1v1m1 0v1m1 0v1m1 -1v1m1 0v1m1 -1v1m1 0v1m1 0v1m1 -1v1m1 0v1m1 -1v1m1 0v1m1 -1v1m1 0v1m1 -1v1m1 0v1m1 -1v1m1 0v1m1 -1v1m1 0v1m1 -1v1m1 -1v1m1 0v1m1 -1v1m1 0v1m1 -1v1m1 -1v1m1 0v1m1 -1v1m1 -1v1m1 0v1m1 -1v1m1 -1v1m1 -1v1m1 0v1m1 -1v1m1 -1v1m1 -1v1m1 0v1m1 -1v1m1 -1v1m1 -1v1m1 -1v1m1 0v1m1 -1v1m1 -1v1m1 -1v1m1 -1v1m1 -1v1m1 -1v1m1 -1v1m1 -1v1m1 -1v1m1 -1v1m1 -1v1m1 -1v1m1 -1v1m1 -1v1m1 -1v1m1 -1v1m1 -1v1m1 -1v1m1 -1v1m1 -1v1m1 -1v1m1 -1v1m1 -1v1m1 -1v1m1 -2v1m1 -1v1m1 -1v1m1 -1v1m1 -1v1m1 -2v1m1 -1v1m1 -1v1m1 -1v1m1 -2v1m1 -1v1m1 -1v1m1 -1v1m1 -2v1m1 -1v1m1 -1v1m1 -2v1m1 -1v1m1 -1v1m1 -2v1m1 -1v1m1 -2v1m1 -1v1m1 -1v1m1 -2v1m1 -1v1m1 -2v1m1 -1v1m1 -2v1m1 -1v1m1 -2v1m1 -1v1m1 -2v1m1 -1v1m1 -2v1m1 -1v1m1 -2v1m1 -2v1m1 -1v1m1 -2v1m1 -1v1m1 -2v1m1 -2v1m1 -1v1m1 -2v1m1 -2v1m1 -1v1m1 -2v1m1 -2v1m1 -2v1m1 -1v1m1 -2v1m1 -2v1m1 -2v1m1 -1v1m1 -2v1m1 -2v1m1 -2v1m1 -2v1m1 -2v1m1 -1v1m1 -2v1m1 -2v1m1 -2v1m1 -2v1m1 -2v1m1 -2v1m1 -2v1m1 -2v1m1 -2v1m1 -2v1m1 -2v1m1 -2v1m1 -2v1m1 -2v1m1 -2v1m1 -2v1m1 -2v1m1 -2v1m1 -2v1m1 -2v1m1 -2v1m1 -2v1m1 -2v1m1 -2v1m1 -3v2m1 -3v1m1 -2v1m1 -2v1m1 -2v1m1 -3v2m1 -3v1m1 -2v1m1 -2v1m1 -2v1m1 -3v2m1 -3v1m1 -2v1m1 -2v1m1 -3v2m1 -3v1m1 -2v1m1 -3v2m1 -3v1m1 -2v1m1 -3v2m1 -3v1m1 -2v1m1 -3v2m1 -3v1m1 -3v2m1 -3v1m1 -2v1m1 -3v2m1 -3v1m1 -3v2m1 -3v1m1 -3v2m1 -3v1m1 -3v2m1 -3v1m1 -3v2m1 -3v1m1 -3v2m1 -3v1m1 -3v2m1 -3v1m1 -3v2m1 -4v2m1 -3v1m1 -3v2m1 -3v1m1 -3v2m1 -4v2m1 -3v1m1 -3v2m1 -4v2m1 -3v1m1 -3v2m1 -4v2m1 -3v1m1 -3v2m1 -4v2m1 -3v1m1 -3v2m1 -4v2m1 -4v2m1 -3v1m1 -3v2m1 -4v2m1 -4v2m1 -4v2m1 -3v1m1 -3v2m1 -4v2m1 -4v2m1 -4v2m1 -3v1m1 -3v2m1 -4v2m1 -4v2m1 -4v2m1 -4v2m1 -4v2m1 -4v2m1 -3v1m1 -3v2m1 -4v2m1 -4v2m1 -4v2m1 -4v2m1 -4v2m1 -4v2m1 -4v2m1 -4v2m1 -4v2m1 -4v2m1 -4v2m1 -4v2m1 -4v2m1 -4v2m1 -4v2m1 -4v2m1 -4v2m1 -4v2m1 -4v2m1 -4v2m1 -4v2m1 -5v3m1 -5v2m1 -4v2m1 -4v2m1 -4v2m1 -4v2m1 -4v2m1 -4v2m1 -4v2m1 -5v3m1 -5v2m1 -4v2m1 -4v2m1 -4v2m1 -4v2m1 -5v3m1 -5v2m1 -4v2m1 -4v2m1 -4v2m1 -5v3m1 -5v2m1 -4v2m1 -4v2m1 -5v3m1 -5v2m1 -4v2m1 -4v2m1 -5v3m1 -5v2m1 -4v2m1 -4v2m1 -5v3m1 -5v2m1 -4v2m1 -5v3m1 -5v2m1 -4v2m1 -5v3m1 -5v2m1 -4v2m1 -5v3m1 -5v2m1 -4v2m1 -3v1" stroke="#c08070"/>
<path d="M107.5 30v2m1 0v3m1 0v2m1 0v2m1 0v3m1 0v2m1 0v2m1 0v3m1 0v2m1 0v2m1 0v3m1 0v2m1 0v2m1 0v3m1 0v2m1 0v2m1 0v2m1 0v3m1 0v2m1 0v2m1 0v2m1 0v3m1 0v2m1 0v2m1 0v2m1 0v2m1 0v3m1 0v2m1 0v2m1 0v2m1 0v2m1 0v3m1 0v2m1 0v2m1 0v2m1 0v2m1 0v2m1 0v2m1 0v3m1 0v2m1 0v2m1 0v2m1 0v2m1 0v2m1 0v2m1 0v2m1 0v2m1 0v2m1 0v2m1 0v2m1 0v2m1 0v2m1 0v2m1 0v2m1 0v2m1 0v2m1 0v2m1 0v2m1 0v2m1 0v2m1 0v2m1 0v2m1 0v2m1 0v2m1 0v2m1 0v2m1 0v2m1 0v2m1 0v2m1 0v2m1 0v2m1 0v1m1 0v2m1 0v2m1 0v2m1 0v2m1 0v2m1 0v1m1 0v2m1 0v2m1 0v2m1 0v2m1 0v1m1 0v2m1 0v2m1 0v2m1 0v1m1 0v2m1 0v2m1 0v2m1 0v1m1 0v2m1 0v2m1 0v1m1 0v2m1 0v2m1 0v1m1 0v2m1 0v2m1 0v1m1 0v2m1 0v1m1 0v2m1 0v2m1 0v1m1 0v2m1 0v1m1 0v2m1 0v1m1 0v2m1 0v1m1 0v2m1 0v1m1 0v2m1 0v1m1 0v2m1 0v1m1 0v2m1 0v1m1 0v2m1 0v1m1 0v1m1 0v2m1 0v1m1 0v2m1 0v1m1 0v1m1 0v2m1 0v1m1 0v1m1 0v2m1 0v1m1 0v1m1 0v2m1 0v1m1 0v1m1 0v1m1 0v2m1 0v1m1 0v1m1 0v1m1 0v1m1 0v2m1 0v1m1 0v1m1 0v1m1 0v1m1 0v1m1 0v1m1 0v2m1 0v1m1 0v1m1 0v1m1 0v1m1 0v1m1 0v1m1 0v1m1 0v1m1 0v1m1 0v1m1 0v1m1 0v1m1 0v1m1 0v1m1 0v1m1 0v1m1 0v1m1 0v1m1 0v1m1 0v1m1 -1v1m1 0v1m1 0v1m1 0v1m1 0v1m1 0v1m1 0v1m1 -1v1m1 0v1m1 0v1m1 0v1m1 -1v1m1 0v1m1 0v1m1 0v1m1 -1v1m1 0v1m1 0v1m1 -1v1m1 0v1m1 0v1m1 -1v1m1 0v1m1 0v1m1 -1v1m1 0v1m1 -1v1m1 0v1m1 0v1m1 -1v1m1 0v1m1 -1v1m1 0v1m1 -1v1m1 0v1m1 -1v1m1 0v1m1 -1v1m1 -1v1m1 0v1m1 -1v1m1 0v1m1 -1v1m1 0v1m1 -1v1m1 -1v1m1 0v1m1 -1v1m1 -1v1m1 0v1m1 -1v1m1 -1v1m1 -1v1m1 0v1m1 -1v1m1 -1v1m1 -1v1m1 0v1m1 -1v1m1 -1v1m1 -1v1m1 -1v1m1 -1v1m1 0v1m1 -1v1m1 -1v1m1 -1v1m1 -1v1m1 -1v1m1 -1v1m1 -1v1m1 -1v1m1 -1v1m1 -1v1m1 -1v1m1 -1v1m1 -1v1m1 -1v1m1 -1v1m1 -1v1m1 -1v1m1 -1v1m1 -1v1m1 -1v1m1 -1v1m1 -1v1m1 -1v1m1 -2v1m1 -1v1m1 -1v1m1 -1v1m1 -1v1m1 -1v1m1 -2v1m1 -1v1m1 -1v1m1 -1v1m1 -2v1m1 -1v1m1 -1v1m1 -2v1m1 -1v1m1 -1v1m1 -2v1m1 -1v1m1 -1v1m1 -2v1m1 -1v1m1 -1v1m1 -2v1m1 -1v1m1 -2v1m1 -1v1m1 -2v1m1 -1v1m1 -2v1m1 -1v1m1 -2v1m1 -1v1m1 -2v1m1 -1v1m1 -2v1m1 -1v1m1 -2v1m1 -1v1m1 -2v1m1 -2v1m1 -1v1m1 -2v1m1 -2v1m1 -1v1m1 -2v1m1 -2v1m1 -1v1m1 -2v1m1 -2v1m1 -1v1m1 -2v1m1 -2v1m1 -2v1m1 -1v1m1 -2v1m1 -2v1m1 -2v1m1 -2v1m1 -2v1m1 -1v1m1 -2v1m1 -2v1m1 -2v1m1 -2v1m1 -2v1m1 -2v1m1 -2v1m1 -2v1m1 -1v1m1 -2v1m1 -2v1m1 -2v1m1 -2v1m1 -2v1m1 -2v1m1 -2v1m1 -2v1m1 -3v2m1 -3v1m1 -2v1m1 -2v1m1 -2v1m1 -2v1m1 -2v1m1 -2v1m1 -2v1m1 -2v1m1 -3v2m1 -3v1m1 -2v1m1 -2v1m1 -2v1m1 -3v2m1 -3v1m1 -2v1m1 -2v1m1 -3v2m1 -3v1m1 -2v1m1 -2v1m1 -3v2m1 -3v1m1 -2v1m1 -3v2m1 -3v1m1 -2v1m1 -3v2m1 -3v1m1 -2v1m1 -3v2m1 -3v1m1 -3v2m1 -3v1m1 -3v2m1 -3v1m1 -2v1m1 -3v2m1 -3v1m1 -3v2m1 -3v1m1 -3v2m1 -3v1m1 -3v2m1 -3v1m1 -3v2m1 -3v1m1 -3v2m1 -4v2m1 -3v1m1 -3v2m1 -3v1m1 -3v2m1 -4v2m1 -3v1m1 -3v2m1 -4v2m1 -3v1m1 -3v2m1 -3v1m1 -3v2m1 -4v2m1 -4v2m1 -3v1m1 -3v2m1 -4v2m1 -3v1m1 -3v2m1 -4v2m1 -4v2m1 -3v1m1 -3v2m1 -4v2m1 -4v2m1 -4v2m1 -3v1m1 -3v2m1 -4v2m1 -4v2m1 -4v2m1 -4v2m1 -4v2m1 -3v1m1 -3v2m1 -4v2m1 -4v2m1 -4v2m1 -4v2m1 -4v2m1 -4v2m1 -4v2m1 -4v2m1 -4v2m1 -4v2m1 -4v2m1 -4v2m1 -4v2m1 -4v2m1 -4v2m1 -4v2m1 -4v2m1 -4v2m1 -4v2m1 -4v2m1 -4v2m1 -4v2m1 -4v2m1 -4v2m1 -4v2m1 -4v2m1 -4v2m1 -4v2m1 -4v2m1 -4v2m1 -5v3m1 -5v2m1 -4v2m1 -4v2m1 -4v2m1 -4v2m1 -4v2m1 -5v3m1 -5v2m1 -4v2m1 -4v2m1 -4v2m1 -4v2m1 -5v3m1 -5v2m1 -4v2m1 -4v2m1 -5v3m1 -5v2m1 -4v2m1 -4v2m1 -5v3m1 -5v2m1 -4v2m1 -4v2m1 -5v3m1 -5v2m1 -4v2m1 -4v2m1 -5v3m1 -5v2m1 -4v2m1 -5v3m1 -5v2m1 -4v2m1 -5v3m1 -5v2m1 -4v2m1 -5v3m1 -4v1" stroke="#80d040"/>
<path d="M103.5 30v2m1 0v2m1 0v3m1 0v2m1 0v2m1 0v3m1 0v2m1 0v2m1 0v2m1 0v3m1 0v2m1 0v2m1 0v3m1 0v2m1 0v2m1 0v2m1 0v3m1 0v2m1 0v2m1 0v3m1 0v2m1 0v2m1 0v2m1 0v2m1 0v3m1 0v2m1 0v2m1 0v2m1 0v2m1 0v3m1 0v2m1 0v2m1 0v2m1 0v2m1 0v2m1 0v3m1 0v2m1 0v2m1 0v2m1 0v2m1 0v2m1 0v2m1 0v2m1 0v2m1 0v3m1 0v2m1 0v2m1 0v2m1 0v2m1 0v2m1 0v2m1 0v2m1 0v2m1 0v2m1 0v2m1 0v2m1 0v2m1 0v2m1 0v2m1 0v2m1 0v2m1 0v2m1 0v2m1 0v2m1 0v2m1 0v2m1 0v1m1 0v2m1 0v2m1 0v2m1 0v2m1 0v2m1 0v2m1 0v2m1 0v1m1 0v2m1 0v2m1 0v2m1 0v2m1 0v2m1 0v1m1 0v2m1 0v2m1 0v2m1 0v1m1 0v2m1 0v2m1 0v2m1 0v1m1 0v2m1 0v2m1 0v2m1 0v1m1 0v2m1 0v2m1 0v1m1 0v2m1 0v2m1 0v1m1 0v2m1 0v1m1 0v2m1 0v2m1 0v1m1 0v2m1 0v1m1 0v2m1 0v1m1 0v2m1 0v2m1 0v1m1 0v2m1 0v1m1 0v2m1 0v1m1 0v1m1 0v2m1 0v1m1 0v2m1 0v1m1 0v2m1 0v1m1 0v1m1 0v2m1 0v1m1 0v2m1 0v1m1 0v1m1 0v2m1 0v1m1 0v1m1 0v2m1 0v1m1 0v1m1 0v1m1 0v2m1 0v1m1 0v1m1 0v1m1 0v2m1 0v1m1 0v1m1 0v1m1 0v1m1 0v2m1 0v1m1 0v1m1 0v1m1 0v1m1 0v1m1 0v1m1 0v2m1 0v1m1 0v1m1 0v1m1 0v1m1 0v1m1 0v1m1 0v1m1 0v1m1 0v1m1 0v1m1 0v1m1 0v1m1 0v1m1 0v1m1 0v1m1 0v1m1 -1v1m1 0v1m1 0v1m1 0v1m1 0v1m1 0v1m1 0v1m1 -1v1m1 0v1m1 0v1m1 0v1m1 0v1m1 -1v1m1 0v1m1 0v1m1 0v1m1 -1v1m1 0v1m1 0v1m1 0v1m1 -1v1m1 0v1m1 0v1m1 -1v1m1 0v1m1 -1v1m1 0v1m1 0v1m1 -1v1m1 0v1m1 -1v1m1 0v1m1 -1v1m1 0v1m1 0v1m1 -1v1m1 0v1m1 -1v1m1 -1v1m1 0v1m1 -1v1m1 0v1m1 -1v1m1 0v1m1 -1v1m1 -1v1m1 0v1m1 -1v1m1 0v1m1 -1v1m1 -1v1m1 -1v1m1 0v1m1 -1v1m1 -1v1m1 0v1m1 -1v1m1 -1v1m1 -1v1m1 0v1m1 -1v1m1 -1v1m1 -1v1m1 -1v1m1 -1v1m1 0v1m1 -1v1m1 -1v1m1 -1v1m1 -1v1m1 -1v1m1 -1v1m1 -1v1m1 -1v1m1 -1v1m1 -1v1m1 -1v1m1 -1v1m1 -1v1m1 -1v1m1 -1v1m1 -1v1m1 -1v1m1 -1v1m1 -1v1m1 -1v1m1 -1v1m1 -1v1m1 -1v1m1 -2v1m1 -1v1m1 -1v1m1 -1v1m1 -1v1m1 -1v1m1 -2v1m1 -1v1m1 -1v1m1 -1v1m1 -2v1m1 -1v1m1 -1v1m1 -2v1m1 -1v1m1 -1v1m1 -1v1m1 -2v1m1 -1v1m1 -2v1m1 -1v1m1 -1v1m1 -2v1m1 -1v1m1 -2v1m1 -1v1m1 -2v1m1 -1v1m1 -1v1m1 -2v1m1 -1v1m1 -2v1m1 -2v1m1 -1v1m1 -2v1m1 -1v1m1 -2v1m1 -1v1m1 -2v1m1 -2v1m1 -1v1m1 -2v1m1 -1v1m1 -2v1m1 -2v1m1 -1v1m1 -2v1m1 -2v1m1 -2v1m1 -1v1m1 -2v1m1 -2v1m1 -2v1m1 -1v1m1 -2v1m1 -2v1m1 -2v1m1 -1v1m1 -2v1m1 -2v1m1 -2v1m1 -2v1m1 -2v1m1 -2v1m1 -2v1m1 -1v1m1 -2v1m1 -2v1m1 -2v1m1 -2v1m1 -2v1m1 -2v1m1 -2v1m1 -2v1m1 -2v1m1 -2v1m1 -2v1m1 -2v1m1 -2v1m1 -2v1m1 -2v1m1 -3v2m1 -3v1m1 -2v1m1 -2v1m1 -2v1m1 -2v1m1 -2v1m1 -3v2m1 -3v1m1 -2v1m1 -2v1m1 -2v1m1 -3v2m1 -3v1m1 -2v1m1 -2v1m1 -3v2m1 -3v1m1 -2v1m1 -2v1m1 -3v2m1 -3v1m1 -2v1m1 -3v2m1 -3v1m1 -2v1m1 -3v2m1 -3v1m1 -2v1m1 -3v2m1 -3v1m1 -3v2m1 -3v1m1 -3v2m1 -3v1m1 -3v2m1 -3v1m1 -2v1m1 -3v2m1 -3v1m1 -3v2m1 -3v1m1 -3v2m1 -4v2m1 -3v1m1 -3v2m1 -3v1m1 -3v2m1 -3v1m1 -3v2m1 -4v2m1 -3v1m1 -3v2m1 -3v1m1 -3v2m1 -4v2m1 -3v1m1 -3v2m1 -4v2m1 -3v1m1 -3v2m1 -4v2m1 -4v2m1 -3v1m1 -3v2m1 -4v2m1 -4v2m1 -3v1m1 -3v2m1 -4v2m1 -4v2m1 -3v1m1 -3v2m1 -4v2m1 -4v2m1 -4v2m1 -4v2m1 -3v1m1 -3v2m1 -4v2m1 -4v2m1 -4v2m1 -4v2m1 -4v2m1 -4v2m1 -3v1m1 -3v2m1 -4v2m1 -4v2m1 -4v2m1 -4v2m1 -4v2m1 -4v2m1 -4v2m1 -4v2m1 -4v2m1 -4v2m1 -4v2m1 -4v2m1 -4v2m1 -4v2m1 -4v2m1 -4v2m1 -4v2m1 -4v2m1 -4v2m1 -4v2m1 -4v2m1 -5v3m1 -5v2m1 -4v2m1 -4v2m1 -4v2m1 -4v2m1 -4v2m1 -4v2m1 -5v3m1 -5v2m1 -4v2m1 -4v2m1 -4v2m1 -4v2m1 -5v3m1 -5v2m1 -4v2m1 -4v2m1 -4v2m1 -5v3m1 -5v2m1 -4v2m1 -4v2m1 -4v2m1 -5v3m1 -5v2m1 -4v2m1 -4v2m1 -5v3m1 -5v2m1 -4v2m1 -5v3m1 -5v2m1 -4v2m1 -4v2m1 -5v3m1 -5v2m1 -4v2m1 -5v3m1 -5v2m1 -4v2m1 -5v3m1 -5v2m1 -4v2" stroke="#b06878"/>
<path d="M99.5 30v1m1 0v3m1 0v2m1 0v2m1 0v3m1 0v2m1 0v2m1 0v3m1 0v2m1 0v2m1 0v2m1 0v3m1 0v2m1 0v2m1 0v3m1 0v2m1 0v2m1 0v2m1 0v3m1 0v2m1 0v2m1 0v2m1 0v3m1 0v2m1 0v2m1 0v2m1 0v2m1 0v3m1 0v2m1 0v2m1 0v2m1 0v2m1 0v3m1 0v2m1 0v2m1 0v2m1 0v2m1 0v2m1 0v2m1 0v3m1 0v2m1 0v2m1 0v2m1 0v2m1 0v2m1 0v2m1 0v2m1 0v2m1 0v2m1 0v2m1 0v2m1 0v2m1 0v2m1 0v2m1 0v2m1 0v2m1 0v2m1 0v2m1 0v2m1 0v2m1 0v2m1 0v2m1 0v2m1 0v2m1 0v2m1 0v2m1 0v2m1 0v2m1 0v2m1 0v2m1 0v2m1 0v1m1 0v2m1 0v2m1 0v2m1 0v2m1 0v2m1 0v1m1 0v2m1 0v2m1 0v2m1 0v2m1 0v1m1 0v2m1 0v2m1 0v2m1 0v2m1 0v1m1 0v2m1 0v2m1 0v1m1 0v2m1 0v2m1 0v1m1 0v2m1 0v2m1 0v1m1 0v2m1 0v2m1 0v1m1 0v2m1 0v2m1 0v1m1 0v2m1 0v1m1 0v2m1 0v1m1 0v2m1 0v2m1 0v1m1 0v2m1 0v1m1 0v2m1 0v1m1 0v2m1 0v1m1 0v2m1 0v1m1 0v1m1 0v2m1 0v1m1 0v2m1 0v1m1 0v2m1 0v1m1 0v1m1 0v2m1 0v1m1 0v1m1 0v2m1 0v1m1 0v1m1 0v2m1 0v1m1 0v1m1 0v1m1 0v2m1 0v1m1 0v1m1 0v1m1 0v2m1 0v1m1 0v1m1 0v1m1 0v1m1 0v1m1 0v2m1 0v1m1 0v1m1 0v1m1 0v1m1 0v1m1 0v1m1 0v1m1 0v1m1 0v2m1 0v1m1 0v1m1 0v1m1 0v1m1 0v1m1 0v1m1 0v1m1 0v1m1 -1v1m1 0v1m1 0v1m1 0v1m1 0v1m1 0v1m1 0v1m1 0v1m1 0v1m1 0v1m1 -1v1m1 0v1m1 0v1m1 0v1m1 0v1m1 0v1m1 -1v1m1 0v1m1 0v1m1 0v1m1 -1v1m1 0v1m1 0v1m1 -1v1m1 0v1m1 0v1m1 -1v1m1 0v1m1 0v1m1 -1v1m1 0v1m1 0v1m1 -1v1m1 0v1m1 -1v1m1 0v1m1 -1v1m1 0v1m1 -1v1m1 0v1m1 -1v1m1 0v1m1 -1v1m1 0v1m1 -1v1m1 0v1m1 -1v1m1 0v1m1 -1v1m1 -1v1m1 0v1m1 -1v1m1 -1v1m1 0v1m1 -1v1m1 -1v1m1 0v1m1 -1v1m1 -1v1m1 0v1m1 -1v1m1 -1v1m1 -1v1m1 -1v1m1 0v1m1 -1v1m1 -1v1m1 -1v1m1 -1v1m1 0v1m1 -1v1m1 -1v1m1 -1v1m1 -1v1m1 -1v1m1 -1v1m1 -1v1m1 -1v1m1 -1v1m1 -1v1m1 -1v1m1 -1v1m1 -1v1m1 -1v1m1 -1v1m1 -1v1m1 -1v1m1 -1v1m1 -1v1m1 -1v1m1 -1v1m1 -1v1m1 -1v1m1 -2v1m1 -1v1m1 -1v1m1 -1v1m1 -1v1m1 -1v1m1 -2v1m1 -1v1m1 -1v1m1 -1v1m1 -2v1m1 -1v1m1 -1v1m1 -1v1m1 -2v1m1 -1v1m1 -1v1m1 -2v1m1 -1v1m1 -1v1m1 -2v1m1 -1v1m1 -2v1m1 -1v1m1 -2v1m1 -1v1m1 -1v1m1 -2v1m1 -1v1m1 -2v1m1 -1v1m1 -2v1m1 -1v1m1 -2v1m1 -1v1m1 -2v1m1 -2v1m1 -1v1m1 -2v1m1 -1v1m1 -2v1m1 -2v1m1 -1v1m1 -2v1m1 -2v1m1 -1v1m1 -2v1m1 -2v1m1 -1v1m1 -2v1m1 -2v1m1 -2v1m1 -1v1m1 -2v1m1 -2v1m1 -2v1m1 -1v1m1 -2v1m1 -2v1m1 -2v1m1 -2v1m1 -2v1m1 -2v1m1 -1v1m1 -2v1m1 -2v1m1 -2v1m1 -2v1m1 -2v1m1 -2v1m1 -2v1m1 -2v1m1 -2v1m1 -2v1m1 -2v1m1 -2v1m1 -2v1m1 -2v1m1 -2v1m1 -2v1m1 -2v1m1 -2v1m1 -2v1m1 -2v1m1 -3v2m1 -3v1m1 -2v1m1 -2v1m1 -2v1m1 -2v1m1 -3v2m1 -3v1m1 -2v1m1 -2v1m1 -2v1m1 -3v2m1 -3v1m1 -2v1m1 -2v1m1 -3v2m1 -3v1m1 -2v1m1 -3v2m1 -3v1m1 -2v1m1 -3v2m1 -3v1m1 -2v1m1 -3v2m1 -3v1m1 -3v2m1 -3v1m1 -2v1m1 -3v2m1 -3v1m1 -3v2m1 -3v1m1 -3v2m1 -3v1m1 -3v2m1 -3v1m1 -3v2m1 -3v1m1 -3v2m1 -3v1m1 -3v2m1 -3v1m1 -3v2m1 -3v1m1 -3v2m1 -4v2m1 -3v1m1 -3v2m1 -3v1m1 -3v2m1 -4v2m1 -3v1m1 -3v2m1 -4v2m1 -3v1m1 -3v2m1 -4v2m1 -3v1m1 -3v2m1 -4v2m1 -4v2m1 -3v1m1 -3v2m1 -4v2m1 -4v2m1 -3v1m1 -3v2m1 -4v2m1 -4v2m1 -4v2m1 -3v1m1 -3v2m1 -4v2m1 -4v2m1 -4v2m1 -4v2m1 -3v1m1 -3v2m1 -4v2m1 -4v2m1 -4v2m1 -4v2m1 -4v2m1 -4v2m1 -4v2m1 -4v2m1 -4v2m1 -4v2m1 -4v2m1 -4v2m1 -3v1m1 -3v2m1 -4v2m1 -4v2m1 -4v2m1 -5v3m1 -5v2m1 -4v2m1 -4v2m1 -4v2m1 -4v2m1 -4v2m1 -4v2m1 -4v2m1 -4v2m1 -4v2m1 -4v2m1 -4v2m1 -4v2m1 -5v3m1 -5v2m1 -4v2m1 -4v2m1 -4v2m1 -4v2m1 -4v2m1 -5v3m1 -5v2m1 -4v2m1 -4v2m1 -4v2m1 -5v3m1 -5v2m1 -4v2m1 -4v2m1 -4v2m1 -5v3m1 -5v2m1 -4v2m1 -4v2m1 -5v3m1 -5v2m1 -4v2m1 -4v2m1 -5v3m1 -5v2m1 -4v2m1 -5v3m1 -5v2m1 -4v2m1 -4v2m1 -5v3m1 -5v2m1 -4v2m1 -5v3m1 -5v2m1 -4v2m1 -5v3" stroke="#585014"/>
<path d="M95.5 30v1m1 0v2m1 0v2m1 0v3m1 0v2m1 0v2m1 0v3m1 0v2m1 0v2m1 0v3m1 0v2m1 0v2m1 0v2m1 0v3m1 0v2m1 0v2m1 0v3m1 0v2m1 0v2m1 0v2m1 0v3m1 0v2m1 0v2m1 0v2m1 0v2m1 0v3m1 0v2m1 0v2m1 0v2m1 0v2m1 0v3m1 0v2m1 0v2m1 0v2m1 0v2m1 0v2m1 0v3m1 0v2m1 0v2m1 0v2m1 0v2m1 0v2m1 0v2m1 0v2m1 0v2m1 0v3m1 0v2m1 0v2m1 0v2m1 0v2m1 0v2m1 0v2m1 0v2m1 0v2m1 0v2m1 0v2m1 0v2m1 0v2m1 0v2m1 0v2m1 0v2m1 0v2m1 0v2m1 0v2m1 0v2m1 0v2m1 0v1m1 0v2m1 0v2m1 0v2m1 0v2m1 0v2m1 0v2m1 0v2m1 0v2m1 0v1m1 0v2m1 0v2m1 0v2m1 0v2m1 0v1m1 0v2m1 0v2m1 0v2m1 0v2m1 0v1m1 0v2m1 0v2m1 0v2m1 0v1m1 0v2m1 0v2m1 0v1m1 0v2m1 0v2m1 0v1m1 0v2m1 0v2m1 0v1m1 0v2m1 0v2m1 0v1m1 0v2m1 0v1m1 0v2m1 0v2m1 0v1m1 0v2m1 0v1m1 0v2m1 0v1m1 0v2m1 0v1m1 0v2m1 0v1m1 0v2m1 0v1m1 0v2m1 0v1m1 0v2m1 0v1m1 0v1m1 0v2m1 0v1m1 0v2m1 0v1m1 0v1m1 0v2m1 0v1m1 0v1m1 0v2m1 0v1m1 0v1m1 0v2m1 0v1m1 0v1m1 0v1m1 0v2m1 0v1m1 0v1m1 0v1m1 0v1m1 0v2m1 0v1m1 0v1m1 0v1m1 0v1m1 0v1m1 0v2m1 0v1m1 0v1m1 0v1m1 0v1m1 0v1m1 0v1m1 0v1m1 0v1m1 0v1m1 0v1m1 0v1m1 0v1m1 0v1m1 0v1m1 0v1m1 0v1m1 0v1m1 0v1m1 0v1m1 0v1m1 0v1m1 0v1m1 0v1m1 0v1m1 -1v1m1 0v1m1 0v1m1 0v1m1 0v1m1 0v1m1 -1v1m1 0v1m1 0v1m1 0v1m1 -1v1m1 0v1m1 0v1m1 0v1m1 -1v1m1 0v1m1 0v1m1 -1v1m1 0v1m1 0v1m1 -1v1m1 0v1m1 -1v1m1 0v1m1 0v1m1 -1v1m1 0v1m1 -1v1m1 0v1m1 -1v1m1 0v1m1 -1v1m1 0v1m1 -1v1m1 0v1m1 -1v1m1 0v1m1 -1v1m1 -1v1m1 0v1m1 -1v1m1 0v1m1 -1v1m1 -1v1m1 0v1m1 -1v1m1 -1v1m1 0v1m1 -1v1m1 -1v1m1 -1v1m1 0v1m1 -1v1m1 -1v1m1 -1v1m1 0v1m1 -1v1m1 -1v1m1 -1v1m1 -1v1m1 0v1m1 -1v1m1 -1v1m1 -1v1m1 -1v1m1 -1v1m1 -1v1m1 -1v1m1 -1v1m1 -1v1m1 -1v1m1 -1v1m1 -1v1m1 -1v1m1 -1v1m1 -1v1m1 -1v1m1 -1v1m1 -1v1m1 -1v1m1 -1v1m1 -1v1m1 -1v1m1 -1v1m1 -1v1m1 -2v1m1 -1v1m1 -1v1m1 -1v1m1 -1v1m1 -2v1m1 -1v1m1 -1v1m1 -1v1m1 -2v1m1 -1v1m1 -1v1m1 -1v1m1 -2v1m1 -1v1m1 -1v1m1 -2v1m1 -1v1m1 -1v1m1 -2v1m1 -1v1m1 -2v1m1 -1v1m1 -1v1m1 -2v1m1 -1v1m1 -2v1m1 -1v1m1 -2v1m1 -1v1m1 -2v1m1 -1v1m1 -2v1m1 -1v1m1 -2v1m1 -1v1m1 -2v1m1 -2v1m1 -1v1m1 -2v1m1 -1v1m1 -2v1m1 -2v1m1 -1v1m1 -2v1m1 -2v1m1 -1v1m1 -2v1m1 -2v1m1 -2v1m1 -1v1m1 -2v1m1 -2v1m1 -2v1m1 -1v1m1 -2v1m1 -2v1m1 -2v1m1 -2v1m1 -2v1m1 -1v1m1 -2v1m1 -2v1m1 -2v1m1 -2v1m1 -2v1m1 -2v1m1 -2v1m1 -2v1m1 -2v1m1 -2v1m1 -2v1m1 -2v1m1 -2v1m1 -2v1m1 -2v1m1 -2v1m1 -2v1m1 -2v1m1 -2v1m1 -2v1m1 -2v1m1 -2v1m1 -2v1m1 -2v1m1 -3v2m1 -3v1m1 -2v1m1 -2v1m1 -2v1m1 -2v1m1 -3v2m1 -3v1m1 -2v1m1 -2v1m1 -3v2m1 -3v1m1 -2v1m1 -2v1m1 -3v2m1 -3v1m1 -2v1m1 -3v2m1 -3v1m1 -2v1m1 -3v2m1 -3v1m1 -2v1m1 -3v2m1 -3v1m1 -3v2m1 -3v1m1 -2v1m1 -3v2m1 -3v1m1 -3v2m1 -3v1m1 -3v2m1 -3v1m1 -3v2m1 -3v1m1 -3v2m1 -3v1m1 -3v2m1 -3v1m1 -3v2m1 -3v1m1 -3v2m1 -4v2m1 -3v1m1 -3v2m1 -3v1m1 -3v2m1 -4v2m1 -3v1m1 -3v2m1 -4v2m1 -3v1m1 -3v2m1 -4v2m1 -3v1m1 -3v2m1 -4v2m1 -3v1m1 -3v2m1 -4v2m1 -4v2m1 -3v1m1 -3v2m1 -4v2m1 -4v2m1 -3v1m1 -3v2m1 -4v2m1 -4v2m1 -4v2m1 -4v2m1 -3v1m1 -3v2m1 -4v2m1 -4v2m1 -4v2m1 -4v2m1 -4v2m1 -4v2m1 -3v1m1 -3v2m1 -4v2m1 -4v2m1 -4v2m1 -4v2m1 -4v2m1 -4v2m1 -4v2m1 -4v2m1 -4v2m1 -4v2m1 -4v2m1 -4v2m1 -4v2m1 -4v2m1 -4v2m1 -4v2m1 -4v2m1 -4v2m1 -4v2m1 -4v2m1 -4v2m1 -4v2m1 -5v3m1 -5v2m1 -4v2m1 -4v2m1 -4v2m1 -4v2m1 -4v2m1 -4v2m1 -5v3m1 -5v2m1 -4v2m1 -4v2m1 -4v2m1 -4v2m1 -5v3m1 -5v2m1 -4v2m1 -4v2m1 -4v2m1 -5v3m1 -5v2m1 -4v2m1 -4v2m1 -5v3m1 -5v2m1 -4v2m1 -4v2m1 -5v3m1 -5v2m1 -4v2m1 -4v2m1 -5v3m1 -5v2m1 -4v2m1 -5v3m1 -5v2m1 -4v2m1 -5v3m1 -5v2m1 -4v2m1 -5v3m1 -5v2m1 -4v2m1 -3v1" stroke="#c8c83c"/>
<path d="M92.5 30v2m1 0v3m1 0v2m1 0v2m1 0v3m1 0v2m1 0v2m1 0v3m1 0v2m1 0v2m1 0v3m1 0v2m1 0v2m1 0v2m1 0v3m1 0v2m1 0v2m1 0v3m1 0v2m1 0v2m1 0v2m1 0v2m1 0v3m1 0v2m1 0v2m1 0v2m1 0v3m1 0v2m1 0v2m1 0v2m1 0v2m1 0v2m1 0v3m1 0v2m1 0v2m1 0v2m1 0v2m1 0v2m1 0v2m1 0v3m1 0v2m1 0v2m1 0v2m1 0v2m1 0v2m1 0v2m1 0v2m1 0v2m1 0v2m1 0v2m1 0v2m1 0v2m1 0v2m1 0v2m1 0v2m1 0v2m1 0v2m1 0v2m1 0v2m1 0v2m1 0v2m1 0v2m1 0v2m1 0v2m1 0v2m1 0v2m1 0v2m1 0v2m1 0v2m1 0v2m1 0v1m1 0v2m1 0v2m1 0v2m1 0v2m1 0v2m1 0v2m1 0v1m1 0v2m1 0v2m1 0v2m1 0v2m1 0v1m1 0v2m1 0v2m1 0v2m1 0v1m1 0v2m1 0v2m1 0v2m1 0v1m1 0v2m1 0v2m1 0v1m1 0v2m1 0v2m1 0v1m1 0v2m1 0v2m1 0v1m1 0v2m1 0v1m1 0v2m1 0v2m1 0v1m1 0v2m1 0v1m1 0v2m1 0v1m1 0v2m1 0v1m1 0v2m1 0v1m1 0v2m1 0v1m1 0v2m1 0v1m1 0v2m1 0v1m1 0v2m1 0v1m1 0v1m1 0v2m1 0v1m1 0v2m1 0v1m1 0v1m1 0v2m1 0v1m1 0v1m1 0v2m1 0v1m1 0v1m1 0v1m1 0v2m1 0v1m1 0v1m1 0v2m1 0v1m1 0v1m1 0v1m1 0v1m1 0v2m1 0v1m1 0v1m1 0v1m1 0v1m1 0v1m1 0v1m1 0v2m1 0v1m1 0v1m1 0v1m1 0v1m1 0v1m1 0v1m1 0v1m1 0v1m1 0v1m1 0v1m1 0v1m1 0v1m1 0v1m1 0v1m1 0v1m1 0v1m1 0v1m1 0v1m1 0v1m1 0v1m1 -1v1m1 0v1m1 0v1m1 0v1m1 0v1m1 0v1m1 0v1m1 -1v1m1 0v1m1 0v1m1 0v1m1 -1v1m1 0v1m1 0v1m1 0v1m1 -1v1m1 0v1m1 0v1m1 -1v1m1 0v1m1 0v1m1 -1v1m1 0v1m1 0v1m1 -1v1m1 0v1m1 -1v1m1 0v1m1 0v1m1 -1v1m1 0v1m1 -1v1m1 0v1m1 -1v1m1 0v1m1 -1v1m1 0v1m1 -1v1m1 -1v1m1 0v1m1 -1v1m1 0v1m1 -1v1m1 0v1m1 -1v1m1 -1v1m1 0v1m1 -1v1m1 -1v1m1 0v1m1 -1v1m1 -1v1m1 -1v1m1 0v1m1 -1v1m1 -1v1m1 -1v1m1 0v1m1 -1v1m1 -1v1m1 -1v1m1 -1v1m1 -1v1m1 0v1m1 -1v1m1 -1v1m1 -1v1m1 -1v1m1 -1v1m1 -1v1m1 -1v1m1 -1v1m1 -1v1m1 -1v1m1 -1v1m1 -1v1m1 -1v1m1 -1v1m1 -1v1m1 -1v1m1 -1v1m1 -1v1m1 -1v1m1 -1v1m1 -1v1m1 -1v1m1 -1v1m1 -2v1m1 -1v1m1 -1v1m1 -1v1m1 -1v1m1 -1v1m1 -2v1m1 -1v1m1 -1v1m1 -1v1m1 -2v1m1 -1v1m1 -1v1m1 -2v1m1 -1v1m1 -1v1m1 -2v1m1 -1v1m1 -1v1m1 -2v1m1 -1v1m1 -1v1m1 -2v1m1 -1v1m1 -2v1m1 -1v1m1 -2v1m1 -1v1m1 -2v1m1 -1v1m1 -2v1m1 -1v1m1 -2v1m1 -1v1m1 -2v1m1 -1v1m1 -2v1m1 -1v1m1 -2v1m1 -2v1m1 -1v1m1 -2v1m1 -2v1m1 -1v1m1 -2v1m1 -2v1m1 -1v1m1 -2v1m1 -2v1m1 -1v1m1 -2v1m1 -2v1m1 -2v1m1 -1v1m1 -2v1m1 -2v1m1 -2v1m1 -2v1m1 -2v1m1 -1v1m1 -2v1m1 -2v1m1 -2v1m1 -2v1m1 -2v1m1 -2v1m1 -2v1m1 -2v1m1 -1v1m1 -2v1m1 -2v1m1 -2v1m1 -2v1m1 -2v1m1 -2v1m1 -2v1m1 -2v1m1 -2v1m1 -3v2m1 -3v1m1 -2v1m1 -2v1m1 -2v1m1 -2v1m1 -2v1m1 -2v1m1 -2v1m1 -3v2m1 -3v1m1 -2v1m1 -2v1m1 -2v1m1 -3v2m1 -3v1m1 -2v1m1 -2v1m1 -3v2m1 -3v1m1 -2v1m1 -2v1m1 -3v2m1 -3v1m1 -2v1m1 -3v2m1 -3v1m1 -2v1m1 -3v2m1 -3v1m1 -2v1m1 -3v2m1 -3v1m1 -3v2m1 -3v1m1 -2v1m1 -3v2m1 -3v1m1 -3v2m1 -3v1m1 -3v2m1 -3v1m1 -3v2m1 -3v1m1 -3v2m1 -3v1m1 -3v2m1 -3v1m1 -3v2m1 -4v2m1 -3v1m1 -3v2m1 -3v1m1 -3v2m1 -4v2m1 -3v1m1 -3v2m1 -3v1m1 -3v2m1 -4v2m1 -3v1m1 -3v2m1 -4v2m1 -4v2m1 -3v1m1 -3v2m1 -4v2m1 -3v1m1 -3v2m1 -4v2m1 -4v2m1 -3v1m1 -3v2m1 -4v2m1 -4v2m1 -4v2m1 -3v1m1 -3v2m1 -4v2m1 -4v2m1 -4v2m1 -4v2m1 -3v1m1 -3v2m1 -4v2m1 -4v2m1 -4v2m1 -4v2m1 -4v2m1 -4v2m1 -4v2m1 -4v2m1 -4v2m1 -4v2m1 -4v2m1 -3v1m1 -3v2m1 -4v2m1 -4v2m1 -4v2m1 -4v2m1 -4v2m1 -4v2m1 -5v3m1 -5v2m1 -4v2m1 -4v2m1 -4v2m1 -4v2m1 -4v2m1 -4v2m1 -4v2m1 -4v2m1 -4v2m1 -4v2m1 -4v2m1 -5v3m1 -5v2m1 -4v2m1 -4v2m1 -4v2m1 -4v2m1 -4v2m1 -5v3m1 -5v2m1 -4v2m1 -4v2m1 -4v2m1 -5v3m1 -5v2m1 -4v2m1 -4v2m1 -4v2m1 -5v3m1 -5v2m1 -4v2m1 -4v2m1 -5v3m1 -5v2m1 -4v2m1 -5v3m1 -5v2m1 -4v2m1 -4v2m1 -5v3m1 -5v2m1 -4v2m1 -5v3m1 -5v2m1 -4v2m1 -5v3m1 -5v2m1 -4v2m1 -5v3m1 -4v1" stroke="#50f0a0"/>
<path d="M88.5 30v2m1 0v2m1 0v2m1 0v3m1 0v2m1 0v2m1 0v3m1 0v2m1 0v2m1 0v3m1 0v2m1 0v2m1 0v3m1 0v2m1 0v2m1 0v2m1 0v3m1 0v2m1 0v2m1 0v2m1 0v3m1 0v2m1 0v2m1 0v2m1 0v3m1 0v2m1 0v2m1 0v2m1 0v2m1 0v3m1 0v2m1 0v2m1 0v2m1 0v2m1 0v2m1 0v3m1 0v2m1 0v2m1 0v2m1 0v2m1 0v2m1 0v2m1 0v2m1 0v2m1 0v2m1 0v3m1 0v2m1 0v2m1 0v2m1 0v2m1 0v2m1 0v2m1 0v2m1 0v2m1 0v2m1 0v2m1 0v2m1 0v2m1 0v2m1 0v2m1 0v2m1 0v2m1 0v2m1 0v2m1 0v2m1 0v1m1 0v2m1 0v2m1 0v2m1 0v2m1 0v2m1 0v2m1 0v2m1 0v2m1 0v1m1 0v2m1 0v2m1 0v2m1 0v2m1 0v2m1 0v1m1 0v2m1 0v2m1 0v2m1 0v1m1 0v2m1 0v2m1 0v2m1 0v1m1 0v2m1 0v2m1 0v1m1 0v2m1 0v2m1 0v2m1 0v1m1 0v2m1 0v1m1 0v2m1 0v2m1 0v1m1 0v2m1 0v2m1 0v1m1 0v2m1 0v1m1 0v2m1 0v1m1 0v2m1 0v1m1 0v2m1 0v1m1 0v2m1 0v1m1 0v2m1 0v1m1 0v2m1 0v1m1 0v2m1 0v1m1 0v2m1 0v1m1 0v1m1 0v2m1 0v1m1 0v2m1 0v1m1 0v1m1 0v2m1 0v1m1 0v1m1 0v2m1 0v1m1 0v1m1 0v1m1 0v2m1 0v1m1 0v1m1 0v1m1 0v2m1 0v1m1 0v1m1 0v1m1 0v1m1 0v2m1 0v1m1 0v1m1 0v1m1 0v1m1 0v1m1 0v1m1 0v1m1 0v2m1 0v1m1 0v1m1 0v1m1 0v1m1 0v1m1 0v1m1 0v1m1 0v1m1 0v1m1 0v1m1 0v1m1 0v1m1 0v1m1 0v1m1 0v1m1 -1v1m1 0v1m1 0v1m1 0v1m1 0v1m1 0v1m1 0v1m1 -1v1m1 0v1m1 0v1m1 0v1m1 0v1m1 -1v1m1 0v1m1 0v1m1 0v1m1 -1v1m1 0v1m1 0v1m1 0v1m1 -1v1m1 0v1m1 0v1m1 -1v1m1 0v1m1 -1v1m1 0v1m1 0v1m1 -1v1m1 0v1m1 -1v1m1 0v1m1 -1v1m1 0v1m1 0v1m1 -1v1m1 0v1m1 -1v1m1 -1v1m1 0v1m1 -1v1m1 0v1m1 -1v1m1 0v1m1 -1v1m1 -1v1m1 0v1m1 -1v1m1 -1v1m1 0v1m1 -1v1m1 -1v1m1 0v1m1 -1v1m1 -1v1m1 0v1m1 -1v1m1 -1v1m1 -1v1m1 0v1m1 -1v1m1 -1v1m1 -1v1m1 -1v1m1 -1v1m1 0v1m1 -1v1m1 -1v1m1 -1v1m1 -1v1m1 -1v1m1 -1v1m1 -1v1m1 -1v1m1 -1v1m1 -1v1m1 -1v1m1 -1v1m1 -1v1m1 -1v1m1 -1v1m1 -1v1m1 -1v1m1 -1v1m1 -1v1m1 -1v1m1 -1v1m1 -1v1m1 -1v1m1 -2v1m1 -1v1m1 -1v1m1 -1v1m1 -1v1m1 -1v1m1 -2v1m1 -1v1m1 -1v1m1 -1v1m1 -2v1m1 -1v1m1 -1v1m1 -2v1m1 -1v1m1 -1v1m1 -1v1m1 -2v1m1 -1v1m1 -2v1m1 -1v1m1 -1v1m1 -2v1m1 -1v1m1 -2v1m1 -1v1m1 -2v1m1 -1v1m1 -1v1m1 -2v1m1 -1v1m1 -2v1m1 -1v1m1 -2v1m1 -2v1m1 -1v1m1 -2v1m1 -1v1m1 -2v1m1 -2v1m1 -1v1m1 -2v1m1 -1v1m1 -2v1m1 -2v1m1 -1v1m1 -2v1m1 -2v1m1 -2v1m1 -1v1m1 -2v1m1 -2v1m1 -1v1m1 -2v1m1 -2v1m1 -2v1m1 -2v1m1 -1v1m1 -2v1m1 -2v1m1 -2v1m1 -2v1m1 -2v1m1 -2v1m1 -2v1m1 -1v1m1 -2v1m1 -2v1m1 -2v1m1 -2v1m1 -2v1m1 -2v1m1 -2v1m1 -2v1m1 -2v1m1 -2v1m1 -2v1m1 -2v1m1 -2v1m1 -2v1m1 -2v1m1 -3v2m1 -3v1m1 -2v1m1 -2v1m1 -2v1m1 -2v1m1 -2v1m1 -2v1m1 -3v2m1 -3v1m1 -2v1m1 -2v1m1 -2v1m1 -3v2m1 -3v1m1 -2v1m1 -2v1m1 -3v2m1 -3v1m1 -2v1m1 -3v2m1 -3v1m1 -2v1m1 -3v2m1 -3v1m1 -2v1m1 -3v2m1 -3v1m1 -2v1m1 -3v2m1 -3v1m1 -3v2m1 -3v1m1 -3v2m1 -3v1m1 -2v1m1 -3v2m1 -3v1m1 -3v2m1 -3v1m1 -3v2m1 -3v1m1 -3v2m1 -3v1m1 -3v2m1 -4v2m1 -3v1m1 -3v2m1 -3v1m1 -3v2m1 -4v2m1 -3v1m1 -3v2m1 -3v1m1 -3v2m1 -4v2m1 -3v1m1 -3v2m1 -4v2m1 -3v1m1 -3v2m1 -4v2m1 -3v1m1 -3v2m1 -4v2m1 -4v2m1 -3v1m1 -3v2m1 -4v2m1 -4v2m1 -4v2m1 -3v1m1 -3v2m1 -4v2m1 -4v2m1 -4v2m1 -3v1m1 -3v2m1 -4v2m1 -4v2m1 -4v2m1 -4v2m1 -4v2m1 -4v2m1 -3v1m1 -3v2m1 -4v2m1 -4v2m1 -4v2m1 -4v2m1 -4v2m1 -4v2m1 -4v2m1 -4v2m1 -4v2m1 -4v2m1 -4v2m1 -4v2m1 -4v2m1 -4v2m1 -4v2m1 -4v2m1 -4v2m1 -4v2m1 -4v2m1 -4v2m1 -4v2m1 -4v2m1 -5v3m1 -5v2m1 -4v2m1 -4v2m1 -4v2m1 -4v2m1 -4v2m1 -4v2m1 -4v2m1 -5v3m1 -5v2m1 -4v2m1 -4v2m1 -4v2m1 -4v2m1 -5v3m1 -5v2m1 -4v2m1 -4v2m1 -4v2m1 -5v3m1 -5v2m1 -4v2m1 -4v2m1 -5v3m1 -5v2m1 -4v2m1 -4v2m1 -5v3m1 -5v2m1 -4v2m1 -5v3m1 -5v2m1 -4v2m1 -4v2m1 -5v3m1 -5v2m1 -4v2m1 -5v3m1 -5v2m1 -4v2m1 -5v3m1 -5v2m1 -4v2" stroke="#90d040"/>
<path d="M84.5 30v1m1 0v3m1 0v2m1 0v2m1 0v3m1 0v2m1 0v2m1 0v3m1 0v2m1 0v2m1 0v2m1 0v3m1 0v2m1 0v2m1 0v3m1 0v2m1 0v2m1 0v2m1 0v3m1 0v2m1 0v2m1 0v2m1 0v3m1 0v2m1 0v2m1 0v2m1 0v2m1 0v3m1 0v2m1 0v2m1 0v2m1 0v2m1 0v3m1 0v2m1 0v2m1 0v2m1 0v2m1 0v2m1 0v2m1 0v2m1 0v3m1 0v2m1 0v2m1 0v2m1 0v2m1 0v2m1 0v2m1 0v2m1 0v2m1 0v2m1 0v2m1 0v2m1 0v2m1 0v2m1 0v2m1 0v2m1 0v2m1 0v2m1 0v2m1 0v2m1 0v2m1 0v2m1 0v2m1 0v2m1 0v2m1 0v2m1 0v2m1 0v2m1 0v2m1 0v2m1 0v1m1 0v2m1 0v2m1 0v2m1 0v2m1 0v2m1 0v2m1 0v1m1 0v2m1 0v2m1 0v2m1 0v2m1 0v1m1 0v2m1 0v2m1 0v2m1 0v1m1 0v2m1 0v2m1 0v2m1 0v1m1 0v2m1 0v2m1 0v1m1 0v2m1 0v2m1 0v1m1 0v2m1 0v2m1 0v1m1 0v2m1 0v2m1 0v1m1 0v2m1 0v1m1 0v2m1 0v1m1 0v2m1 0v2m1 0v1m1 0v2m1 0v1m1 0v2m1 0v1m1 0v2m1 0v1m1 0v2m1 0v1m1 0v1m1 0v2m1 0v1m1 0v2m1 0v1m1 0v1m1 0v2m1 0v1m1 0v2m1 0v1m1 0v1m1 0v2m1 0v1m1 0v1m1 0v2m1 0v1m1 0v1m1 0v1m1 0v2m1 0v1m1 0v1m1 0v1m1 0v2m1 0v1m1 0v1m1 0v1m1 0v1m1 0v1m1 0v2m1 0v1m1 0v1m1 0v1m1 0v1m1 0v1m1 0v1m1 0v1m1 0v1m1 0v1m1 0v2m1 0v1m1 0v1m1 0v1m1 0v1m1 0v1m1 0v1m1 0v1m1 -1v1m1 0v1m1 0v1m1 0v1m1 0v1m1 0v1m1 0v1m1 0v1m1 0v1m1 0v1m1 -1v1m1 0v1m1 0v1m1 0v1m1 0v1m1 -1v1m1 0v1m1 0v1m1 0v1m1 0v1m1 -1v1m1 0v1m1 0v1m1 -1v1m1 0v1m1 0v1m1 -1v1m1 0v1m1 0v1m1 -1v1m1 0v1m1 0v1m1 -1v1m1 0v1m1 -1v1m1 0v1m1 -1v1m1 0v1m1 -1v1m1 0v1m1 -1v1m1 0v1m1 -1v1m1 0v1m1 -1v1m1 0v1m1 -1v1m1 0v1m1 -1v1m1 -1v1m1 0v1m1 -1v1m1 -1v1m1 0v1m1 -1v1m1 -1v1m1 0v1m1 -1v1m1 -1v1m1 0v1m1 -1v1m1 -1v1m1 -1v1m1 -1v1m1 0v1m1 -1v1m1 -1v1m1 -1v1m1 -1v1m1 0v1m1 -1v1m1 -1v1m1 -1v1m1 -1v1m1 -1v1m1 -1v1m1 -1v1m1 -1v1m1 -1v1m1 -1v1m1 -1v1m1 -1v1m1 -1v1m1 -1v1m1 -1v1m1 -1v1m1 -1v1m1 -1v1m1 -1v1m1 -1v1m1 -1v1m1 -1v1m1 -1v1m1 -1v1m1 -2v1m1 -1v1m1 -1v1m1 -1v1m1 -1v1m1 -2v1m1 -1v1m1 -1v1m1 -1v1m1 -2v1m1 -1v1m1 -1v1m1 -1v1m1 -2v1m1 -1v1m1 -1v1m1 -2v1m1 -1v1m1 -1v1m1 -2v1m1 -1v1m1 -2v1m1 -1v1m1 -1v1m1 -2v1m1 -1v1m1 -2v1m1 -1v1m1 -2v1m1 -1v1m1 -2v1m1 -1v1m1 -2v1m1 -1v1m1 -2v1m1 -2v1m1 -1v1m1 -2v1m1 -1v1m1 -2v1m1 -2v1m1 -1v1m1 -2v1m1 -2v1m1 -1v1m1 -2v1m1 -2v1m1 -1v1m1 -2v1m1 -2v1m1 -2v1m1 -1v1m1 -2v1m1 -2v1m1 -2v1m1 -1v1m1 -2v1m1 -2v1m1 -2v1m1 -2v1m1 -2v1m1 -1v1m1 -2v1m1 -2v1m1 -2v1m1 -2v1m1 -2v1m1 -2v1m1 -2v1m1 -2v1m1 -2v1m1 -2v1m1 -2v1m1 -2v1m1 -2v1m1 -2v1m1 -2v1m1 -2v1m1 -2v1m1 -2v1m1 -2v1m1 -2v1m1 -2v1m1 -3v2m1 -3v1m1 -2v1m1 -2v1m1 -2v1m1 -2v1m1 -3v2m1 -3v1m1 -2v1m1 -2v1m1 -2v1m1 -3v2m1 -3v1m1 -2v1m1 -2v1m1 -3v2m1 -3v1m1 -2v1m1 -3v2m1 -3v1m1 -2v1m1 -3v2m1 -3v1m1 -2v1m1 -3v2m1 -3v1m1 -2v1m1 -3v2m1 -3v1m1 -3v2m1 -3v1m1 -3v2m1 -3v1m1 -3v2m1 -3v1m1 -3v2m1 -3v1m1 -3v2m1 -3v1m1 -3v2m1 -3v1m1 -3v2m1 -3v1m1 -3v2m1 -3v1m1 -3v2m1 -3v1m1 -3v2m1 -4v2m1 -3v1m1 -3v2m1 -4v2m1 -3v1m1 -3v2m1 -4v2m1 -3v1m1 -3v2m1 -4v2m1 -3v1m1 -3v2m1 -4v2m1 -4v2m1 -3v1m1 -3v2m1 -4v2m1 -4v2m1 -3v1m1 -3v2m1 -4v2m1 -4v2m1 -3v1m1 -3v2m1 -4v2m1 -4v2m1 -4v2m1 -4v2m1 -4v2m1 -3v1m1 -3v2m1 -4v2m1 -4v2m1 -4v2m1 -4v2m1 -4v2m1 -4v2m1 -4v2m1 -4v2m1 -4v2m1 -3v1m1 -3v2m1 -4v2m1 -4v2m1 -4v2m1 -4v2m1 -4v2m1 -4v2m1 -4v2m1 -4v2m1 -5v3m1 -5v2m1 -4v2m1 -4v2m1 -4v2m1 -4v2m1 -4v2m1 -4v2m1 -4v2m1 -4v2m1 -4v2m1 -4v2m1 -4v2m1 -5v3m1 -5v2m1 -4v2m1 -4v2m1 -4v2m1 -4v2m1 -5v3m1 -5v2m1 -4v2m1 -4v2m1 -4v2m1 -4v2m1 -5v3m1 -5v2m1 -4v2m1 -4v2m1 -5v3m1 -5v2m1 -4v2m1 -4v2m1 -5v3m1 -5v2m1 -4v2m1 -4v2m1 -5v3m1 -5v2m1 -4v2m1 -4v2m1 -5v3m1 -5v2m1 -4v2m1 -5v3m1 -5v2m1 -4v2m1 -5v3m1 -5v2m1 -4v2m1 -5v3" stroke="#20e080"/>
<path d="M80.5 30v1m1 0v2m1 0v2m1 0v3m1 0v2m1 0v2m1 0v3m1 0v2m1 0v2m1 0v3m1 0v2m1 0v2m1 0v2m1 0v3m1 0v2m1 0v2m1 0v3m1 0v2m1 0v2m1 0v2m1 0v3m1 0v2m1 0v2m1 0v2m1 0v2m1 0v3m1 0v2m1 0v2m1 0v2m1 0v2m1 0v3m1 0v2m1 0v2m1 0v2m1 0v2m1 0v2m1 0v3m1 0v2m1 0v2m1 0v2m1 0v2m1 0v2m1 0v2m1 0v2m1 0v2m1 0v2m1 0v3m1 0v2m1 0v2m1 0v2m1 0v2m1 0v2m1 0v2m1 0v2m1 0v2m1 0v2m1 0v2m1 0v2m1 0v2m1 0v2m1 0v2m1 0v2m1 0v2m1 0v2m1 0v2m1 0v1m1 0v2m1 0v2m1 0v2m1 0v2m1 0v2m1 0v2m1 0v2m1 0v2m1 0v1m1 0v2m1 0v2m1 0v2m1 0v2m1 0v2m1 0v1m1 0v2m1 0v2m1 0v2m1 0v1m1 0v2m1 0v2m1 0v2m1 0v1m1 0v2m1 0v2m1 0v2m1 0v1m1 0v2m1 0v2m1 0v1m1 0v2m1 0v2m1 0v1m1 0v2m1 0v2m1 0v1m1 0v2m1 0v1m1 0v2m1 0v1m1 0v2m1 0v2m1 0v1m1 0v2m1 0v1m1 0v2m1 0v1m1 0v2m1 0v1m1 0v2m1 0v1m1 0v2m1 0v1m1 0v1m1 0v2m1 0v1m1 0v2m1 0v1m1 0v1m1 0v2m1 0v1m1 0v2m1 0v1m1 0v1m1 0v2m1 0v1m1 0v1m1 0v1m1 0v2m1 0v1m1 0v1m1 0v2m1 0v1m1 0v1m1 0v1m1 0v1m1 0v2m1 0v1m1 0v1m1 0v1m1 0v1m1 0v1m1 0v2m1 0v1m1 0v1m1 0v1m1 0v1m1 0v1m1 0v1m1 0v1m1 0v1m1 0v1m1 0v1m1 0v1m1 0v1m1 0v1m1 0v1m1 0v1m1 0v1m1 0v1m1 0v1m1 0v1m1 0v1m1 0v1m1 0v1m1 0v1m1 0v1m1 -1v1m1 0v1m1 0v1m1 0v1m1 0v1m1 -1v1m1 0v1m1 0v1m1 0v1m1 0v1m1 -1v1m1 0v1m1 0v1m1 -1v1m1 0v1m1 0v1m1 0v1m1 -1v1m1 0v1m1 -1v1m1 0v1m1 0v1m1 -1v1m1 0v1m1 0v1m1 -1v1m1 0v1m1 -1v1m1 0v1m1 -1v1m1 0v1m1 -1v1m1 0v1m1 -1v1m1 0v1m1 -1v1m1 0v1m1 -1v1m1 -1v1m1 0v1m1 -1v1m1 0v1m1 -1v1m1 -1v1m1 0v1m1 -1v1m1 -1v1m1 0v1m1 -1v1m1 -1v1m1 -1v1m1 0v1m1 -1v1m1 -1v1m1 -1v1m1 0v1m1 -1v1m1 -1v1m1 -1v1m1 -1v1m1 0v1m1 -1v1m1 -1v1m1 -1v1m1 -1v1m1 -1v1m1 -1v1m1 -1v1m1 -1v1m1 -1v1m1 -1v1m1 -1v1m1 -1v1m1 -1v1m1 -1v1m1 -1v1m1 -1v1m1 -1v1m1 -1v1m1 -1v1m1 -1v1m1 -1v1m1 -1v1m1 -1v1m1 -1v1m1 -2v1m1 -1v1m1 -1v1m1 -1v1m1 -1v1m1 -2v1m1 -1v1m1 -1v1m1 -1v1m1 -2v1m1 -1v1m1 -1v1m1 -1v1m1 -2v1m1 -1v1m1 -1v1m1 -2v1m1 -1v1m1 -1v1m1 -2v1m1 -1v1m1 -2v1m1 -1v1m1 -1v1m1 -2v1m1 -1v1m1 -2v1m1 -1v1m1 -2v1m1 -1v1m1 -2v1m1 -1v1m1 -2v1m1 -1v1m1 -2v1m1 -1v1m1 -2v1m1 -2v1m1 -1v1m1 -2v1m1 -1v1m1 -2v1m1 -2v1m1 -1v1m1 -2v1m1 -2v1m1 -1v1m1 -2v1m1 -2v1m1 -2v1m1 -1v1m1 -2v1m1 -2v1m1 -2v1m1 -1v1m1 -2v1m1 -2v1m1 -2v1m1 -2v1m1 -2v1m1 -1v1m1 -2v1m1 -2v1m1 -2v1m1 -2v1m1 -2v1m1 -2v1m1 -2v1m1 -2v1m1 -2v1m1 -2v1m1 -2v1m1 -2v1m1 -2v1m1 -2v1m1 -2v1m1 -2v1m1 -2v1m1 -2v1m1 -2v1m1 -2v1m1 -2v1m1 -2v1m1 -2v1m1 -2v1m1 -3v2m1 -3v1m1 -2v1m1 -2v1m1 -2v1m1 -2v1m1 -3v2m1 -3v1m1 -2v1m1 -2v1m1 -3v2m1 -3v1m1 -2v1m1 -2v1m1 -3v2m1 -3v1m1 -2v1m1 -3v2m1 -3v1m1 -2v1m1 -3v2m1 -3v1m1 -2v1m1 -3v2m1 -3v1m1 -3v2m1 -3v1m1 -2v1m1 -3v2m1 -3v1m1 -3v2m1 -3v1m1 -3v2m1 -3v1m1 -3v2m1 -3v1m1 -3v2m1 -3v1m1 -3v2m1 -3v1m1 -3v2m1 -3v1m1 -3v2m1 -3v1m1 -3v2m1 -4v2m1 -3v1m1 -3v2m1 -4v2m1 -3v1m1 -3v2m1 -3v1m1 -3v2m1 -4v2m1 -4v2m1 -3v1m1 -3v2m1 -4v2m1 -3v1m1 -3v2m1 -4v2m1 -4v2m1 -3v1m1 -3v2m1 -4v2m1 -4v2m1 -3v1m1 -3v2m1 -4v2m1 -4v2m1 -4v2m1 -3v1m1 -3v2m1 -4v2m1 -4v2m1 -4v2m1 -4v2m1 -4v2m1 -4v2m1 -3v1m1 -3v2m1 -4v2m1 -4v2m1 -4v2m1 -4v2m1 -4v2m1 -4v2m1 -4v2m1 -4v2m1 -4v2m1 -4v2m1 -4v2m1 -4v2m1 -4v2m1 -4v2m1 -4v2m1 -4v2m1 -4v2m1 -4v2m1 -4v2m1 -4v2m1 -4v2m1 -4v2m1 -4v2m1 -5v3m1 -5v2m1 -4v2m1 -4v2m1 -4v2m1 -4v2m1 -4v2m1 -4v2m1 -4v2m1 -5v3m1 -5v2m1 -4v2m1 -4v2m1 -4v2m1 -5v3m1 -5v2m1 -4v2m1 -4v2m1 -4v2m1 -5v3m1 -5v2m1 -4v2m1 -4v2m1 -4v2m1 -5v3m1 -5v2m1 -4v2m1 -4v2m1 -5v3m1 -5v2m1 -4v2m1 -5v3m1 -5v2m1 -4v2m1 -5v3m1 -5v2m1 -4v2m1 -4v2m1 -5v3m1 -5v2m1 -4v2m1 -5v3m1 -5v2m1 -3v1" stroke="#d0a050"/>
<path d="M77.5 30v2m1 0v3m1 0v2m1 0v2m1 0v3m1 0v2m1 0v2m1 0v3m1 0v2m1 0v2m1 0v3m1 0v2m1 0v2m1 0v2m1 0v3m1 0v2m1 0v2m1 0v2m1 0v3m1 0v2m1 0v2m1 0v2m1 0v3m1 0v2m1 0v2m1 0v2m1 0v2m1 0v3m1 0v2m1 0v2m1 0v2m1 0v2m1 0v3m1 0v2m1 0v2m1 0v2m1 0v2m1 0v2m1 0v2m1 0v2m1 0v3m1 0v2m1 0v2m1 0v2m1 0v2m1 0v2m1 0v2m1 0v2m1 0v2m1 0v2m1 0v2m1 0v2m1 0v2m1 0v2m1 0v2m1 0v2m1 0v2m1 0v2m1 0v2m1 0v2m1 0v2m1 0v2m1 0v2m1 0v2m1 0v2m1 0v2m1 0v2m1 0v2m1 0v2m1 0v2m1 0v1m1 0v2m1 0v2m1 0v2m1 0v2m1 0v2m1 0v1m1 0v2m1 0v2m1 0v2m1 0v2m1 0v1m1 0v2m1 0v2m1 0v2m1 0v2m1 0v1m1 0v2m1 0v2m1 0v1m1 0v2m1 0v2m1 0v2m1 0v1m1 0v2m1 0v2m1 0v1m1 0v2m1 0v1m1 0v2m1 0v2m1 0v1m1 0v2m1 0v1m1 0v2m1 0v2m1 0v1m1 0v2m1 0v1m1 0v2m1 0v1m1 0v2m1 0v1m1 0v2m1 0v1m1 0v2m1 0v1m1 0v2m1 0v1m1 0v2m1 0v1m1 0v1m1 0v2m1 0v1m1 0v2m1 0v1m1 0v1m1 0v2m1 0v1m1 0v1m1 0v2m1 0v1m1 0v1m1 0v1m1 0v2m1 0v1m1 0v1m1 0v1m1 0v2m1 0v1m1 0v1m1 0v1m1 0v2m1 0v1m1 0v1m1 0v1m1 0v1m1 0v1m1 0v1m1 0v2m1 0v1m1 0v1m1 0v1m1 0v1m1 0v1m1 0v1m1 0v1m1 0v1m1 0v1m1 0v1m1 0v1m1 0v1m1 0v1m1 0v1m1 0v1m1 0v1m1 0v1m1 0v1m1 0v1m1 0v1m1 -1v1m1 0v1m1 0v1m1 0v1m1 0v1m1 0v1m1 -1v1m1 0v1m1 0v1m1 0v1m1 0v1m1 -1v1m1 0v1m1 0v1m1 0v1m1 -1v1m1 0v1m1 0v1m1 -1v1m1 0v1m1 0v1m1 -1v1m1 0v1m1 0v1m1 -1v1m1 0v1m1 -1v1m1 0v1m1 0v1m1 -1v1m1 0v1m1 -1v1m1 0v1m1 -1v1m1 0v1m1 -1v1m1 0v1m1 -1v1m1 -1v1m1 0v1m1 -1v1m1 0v1m1 -1v1m1 -1v1m1 0v1m1 -1v1m1 0v1m1 -1v1m1 -1v1m1 0v1m1 -1v1m1 -1v1m1 -1v1m1 0v1m1 -1v1m1 -1v1m1 -1v1m1 0v1m1 -1v1m1 -1v1m1 -1v1m1 -1v1m1 -1v1m1 0v1m1 -1v1m1 -1v1m1 -1v1m1 -1v1m1 -1v1m1 -1v1m1 -1v1m1 -1v1m1 -1v1m1 -1v1m1 -1v1m1 -1v1m1 -1v1m1 -1v1m1 -1v1m1 -1v1m1 -1v1m1 -1v1m1 -1v1m1 -1v1m1 -1v1m1 -1v1m1 -1v1m1 -2v1m1 -1v1m1 -1v1m1 -1v1m1 -1v1m1 -1v1m1 -2v1m1 -1v1m1 -1v1m1 -1v1m1 -2v1m1 -1v1m1 -1v1m1 -2v1m1 -1v1m1 -1v1m1 -2v1m1 -1v1m1 -1v1m1 -2v1m1 -1v1m1 -1v1m1 -2v1m1 -1v1m1 -2v1m1 -1v1m1 -2v1m1 -1v1m1 -2v1m1 -1v1m1 -2v1m1 -1v1m1 -2v1m1 -1v1m1 -2v1m1 -1v1m1 -2v1m1 -1v1m1 -2v1m1 -2v1m1 -1v1m1 -2v1m1 -2v1m1 -1v1m1 -2v1m1 -2v1m1 -1v1m1 -2v1m1 -2v1m1 -1v1m1 -2v1m1 -2v1m1 -2v1m1 -1v1m1 -2v1m1 -2v1m1 -2v1m1 -2v1m1 -1v1m1 -2v1m1 -2v1m1 -2v1m1 -2v1m1 -2v1m1 -2v1m1 -2v1m1 -2v1m1 -1v1m1 -2v1m1 -2v1m1 -2v1m1 -2v1m1 -2v1m1 -2v1m1 -2v1m1 -2v1m1 -2v1m1 -2v1m1 -3v2m1 -3v1m1 -2v1m1 -2v1m1 -2v1m1 -2v1m1 -2v1m1 -2v1m1 -2v1m1 -3v2m1 -3v1m1 -2v1m1 -2v1m1 -2v1m1 -3v2m1 -3v1m1 -2v1m1 -2v1m1 -2v1m1 -3v2m1 -3v1m1 -2v1m1 -3v2m1 -3v1m1 -2v1m1 -3v2m1 -3v1m1 -2v1m1 -3v2m1 -3v1m1 -2v1m1 -3v2m1 -3v1m1 -3v2m1 -3v1m1 -2v1m1 -3v2m1 -3v1m1 -3v2m1 -3v1m1 -3v2m1 -3v1m1 -3v2m1 -3v1m1 -3v2m1 -3v1m1 -3v2m1 -3v1m1 -3v2m1 -4v2m1 -3v1m1 -3v2m1 -3v1m1 -3v2m1 -3v1m1 -3v2m1 -4v2m1 -3v1m1 -3v2m1 -4v2m1 -3v1m1 -3v2m1 -4v2m1 -3v1m1 -3v2m1 -4v2m1 -4v2m1 -3v1m1 -3v2m1 -4v2m1 -4v2m1 -3v1m1 -3v2m1 -4v2m1 -4v2m1 -4v2m1 -3v1m1 -3v2m1 -4v2m1 -4v2m1 -4v2m1 -4v2m1 -3v1m1 -3v2m1 -4v2m1 -4v2m1 -4v2m1 -4v2m1 -4v2m1 -4v2m1 -4v2m1 -4v2m1 -4v2m1 -3v1m1 -3v2m1 -4v2m1 -4v2m1 -4v2m1 -4v2m1 -4v2m1 -4v2m1 -4v2m1 -4v2m1 -4v2m1 -4v2m1 -5v3m1 -5v2m1 -4v2m1 -4v2m1 -4v2m1 -4v2m1 -4v2m1 -4v2m1 -4v2m1 -4v2m1 -4v2m1 -5v3m1 -5v2m1 -4v2m1 -4v2m1 -4v2m1 -4v2m1 -4v2m1 -5v3m1 -5v2m1 -4v2m1 -4v2m1 -4v2m1 -5v3m1 -5v2m1 -4v2m1 -4v2m1 -4v2m1 -5v3m1 -5v2m1 -4v2m1 -4v2m1 -5v3m1 -5v2m1 -4v2m1 -4v2m1 -5v3m1 -5v2m1 -4v2m1 -5v3m1 -5v2m1 -4v2m1 -5v3m1 -5v2m1 -4v2m1 -5v3m1 -5v2m1 -4v2m1 -5v3m1 -4v1" stroke="#f05040"/>
<path d="M73.5 30v2m1 0v2m1 0v2m1 0v3m1 0v2m1 0v2m1 0v3m1 0v2m1 0v2m1 0v3m1 0v2m1 0v2m1 0v3m1 0v2m1 0v2m1 0v2m1 0v3m1 0v2m1 0v2m1 0v2m1 0v3m1 0v2m1 0v2m1 0v2m1 0v2m1 0v3m1 0v2m1 0v2m1 0v2m1 0v2m1 0v3m1 0v2m1 0v2m1 0v2m1 0v2m1 0v2m1 0v3m1 0v2m1 0v2m1 0v2m1 0v2m1 0v2m1 0v2m1 0v2m1 0v2m1 0v3m1 0v2m1 0v2m1 0v2m1 0v2m1 0v2m1 0v2m1 0v2m1 0v2m1 0v2m1 0v2m1 0v2m1 0v2m1 0v2m1 0v2m1 0v2m1 0v2m1 0v2m1 0v2m1 0v1m1 0v2m1 0v2m1 0v2m1 0v2m1 0v2m1 0v2m1 0v2m1 0v2m1 0v1m1 0v2m1 0v2m1 0v2m1 0v2m1 0v2m1 0v1m1 0v2m1 0v2m1 0v2m1 0v2m1 0v1m1 0v2m1 0v2m1 0v2m1 0v1m1 0v2m1 0v2m1 0v1m1 0v2m1 0v2m1 0v1m1 0v2m1 0v2m1 0v1m1 0v2m1 0v2m1 0v1m1 0v2m1 0v1m1 0v2m1 0v2m1 0v1m1 0v2m1 0v1m1 0v2m1 0v1m1 0v2m1 0v1m1 0v2m1 0v1m1 0v2m1 0v1m1 0v2m1 0v1m1 0v2m1 0v1m1 0v2m1 0v1m1 0v1m1 0v2m1 0v1m1 0v2m1 0v1m1 0v1m1 0v2m1 0v1m1 0v1m1 0v2m1 0v1m1 0v1m1 0v1m1 0v2m1 0v1m1 0v1m1 0v1m1 0v2m1 0v1m1 0v1m1 0v1m1 0v1m1 0v2m1 0v1m1 0v1m1 0v1m1 0v1m1 0v1m1 0v1m1 0v1m1 0v2m1 0v1m1 0v1m1 0v1m1 0v1m1 0v1m1 0v1m1 0v1m1 0v1m1 0v1m1 0v1m1 0v1m1 0v1m1 0v1m1 0v1m1 -1v1m1 0v1m1 0v1m1 0v1m1 0v1m1 0v1m1 0v1m1 0v1m1 -1v1m1 0v1m1 0v1m1 0v1m1 0v1m1 -1v1m1 0v1m1 0v1m1 0v1m1 -1v1m1 0v1m1 0v1m1 0v1m1 -1v1m1 0v1m1 0v1m1 -1v1m1 0v1m1 -1v1m1 0v1m1 0v1m1 -1v1m1 0v1m1 -1v1m1 0v1m1 -1v1m1 0v1m1 -1v1m1 0v1m1 -1v1m1 0v1m1 -1v1m1 0v1m1 -1v1m1 0v1m1 -1v1m1 0v1m1 -1v1m1 -1v1m1 0v1m1 -1v1m1 -1v1m1 0v1m1 -1v1m1 -1v1m1 0v1m1 -1v1m1 -1v1m1 0v1m1 -1v1m1 -1v1m1 -1v1m1 0v1m1 -1v1m1 -1v1m1 -1v1m1 -1v1m1 -1v1m1 0v1m1 -1v1m1 -1v1m1 -1v1m1 -1v1m1 -1v1m1 -1v1m1 -1v1m1 -1v1m1 -1v1m1 -1v1m1 -1v1m1 -1v1m1 -1v1m1 -1v1m1 -1v1m1 -1v1m1 -1v1m1 -1v1m1 -1v1m1 -1v1m1 -1v1m1 -1v1m1 -1v1m1 -2v1m1 -1v1m1 -1v1m1 -1v1m1 -1v1m1 -1v1m1 -2v1m1 -1v1m1 -1v1m1 -1v1m1 -2v1m1 -1v1m1 -1v1m1 -1v1m1 -2v1m1 -1v1m1 -1v1m1 -2v1m1 -1v1m1 -2v1m1 -1v1m1 -1v1m1 -2v1m1 -1v1m1 -2v1m1 -1v1m1 -1v1m1 -2v1m1 -1v1m1 -2v1m1 -1v1m1 -2v1m1 -1v1m1 -2v1m1 -2v1m1 -1v1m1 -2v1m1 -1v1m1 -2v1m1 -1v1m1 -2v1m1 -2v1m1 -1v1m1 -2v1m1 -2v1m1 -1v1m1 -2v1m1 -2v1m1 -1v1m1 -2v1m1 -2v1m1 -2v1m1 -1v1m1 -2v1m1 -2v1m1 -2v1m1 -2v1m1 -1v1m1 -2v1m1 -2v1m1 -2v1m1 -2v1m1 -2v1m1 -2v1m1 -1v1m1 -2v1m1 -2v1m1 -2v1m1 -2v1m1 -2v1m1 -2v1m1 -2v1m1 -2v1m1 -2v1m1 -2v1m1 -2v1m1 -2v1m1 -2v1m1 -2v1m1 -2v1m1 -2v1m1 -2v1m1 -3v2m1 -3v1m1 -2v1m1 -2v1m1 -2v1m1 -2v1m1 -2v1m1 -3v2m1 -3v1m1 -2v1m1 -2v1m1 -2v1m1 -3v2m1 -3v1m1 -2v1m1 -2v1m1 -3v2m1 -3v1m1 -2v1m1 -3v2m1 -3v1m1 -2v1m1 -3v2m1 -3v1m1 -2v1m1 -3v2m1 -3v1m1 -2v1m1 -3v2m1 -3v1m1 -3v2m1 -3v1m1 -3v2m1 -3v1m1 -2v1m1 -3v2m1 -3v1m1 -3v2m1 -3v1m1 -3v2m1 -3v1m1 -3v2m1 -3v1m1 -3v2m1 -4v2m1 -3v1m1 -3v2m1 -3v1m1 -3v2m1 -3v1m1 -3v2m1 -4v2m1 -3v1m1 -3v2m1 -4v2m1 -3v1m1 -3v2m1 -4v2m1 -3v1m1 -3v2m1 -4v2m1 -3v1m1 -3v2m1 -4v2m1 -4v2m1 -3v1m1 -3v2m1 -4v2m1 -4v2m1 -3v1m1 -3v2m1 -4v2m1 -4v2m1 -4v2m1 -4v2m1 -3v1m1 -3v2m1 -4v2m1 -4v2m1 -4v2m1 -4v2m1 -4v2m1 -3v1m1 -3v2m1 -4v2m1 -4v2m1 -4v2m1 -4v2m1 -4v2m1 -4v2m1 -4v2m1 -4v2m1 -4v2m1 -4v2m1 -4v2m1 -4v2m1 -4v2m1 -4v2m1 -4v2m1 -4v2m1 -4v2m1 -4v2m1 -4v2m1 -4v2m1 -4v2m1 -4v2m1 -4v2m1 -4v2m1 -5v3m1 -5v2m1 -4v2m1 -4v2m1 -4v2m1 -4v2m1 -4v2m1 -4v2m1 -5v3m1 -5v2m1 -4v2m1 -4v2m1 -4v2m1 -4v2m1 -5v3m1 -5v2m1 -4v2m1 -4v2m1 -4v2m1 -5v3m1 -5v2m1 -4v2m1 -4v2m1 -5v3m1 -5v2m1 -4v2m1 -4v2m1 -5v3m1 -5v2m1 -4v2m1 -4v2m1 -5v3m1 -5v2m1 -4v2m1 -5v3m1 -5v2m1 -4v2m1 -5v3m1 -5v2m1 -4v2m1 -5v3m1 -5v2m1 -4v2" stroke="#30b0e0"/>
<path d="M69.5 30v1m1 0v2m1 0v3m1 0v2m1 0v2m1 0v3m1 0v2m1 0v2m1 0v3m1 0v2m1 0v2m1 0v3m1 0v2m1 0v2m1 0v2m1 0v3m1 0v2m1 0v2m1 0v3m1 0v2m1 0v2m1 0v2m1 0v2m1 0v3m1 0v2m1 0v2m1 0v2m1 0v3m1 0v2m1 0v2m1 0v2m1 0v2m1 0v2m1 0v3m1 0v2m1 0v2m1 0v2m1 0v2m1 0v2m1 0v2m1 0v3m1 0v2m1 0v2m1 0v2m1 0v2m1 0v2m1 0v2m1 0v2m1 0v2m1 0v2m1 0v2m1 0v2m1 0v2m1 0v2m1 0v2m1 0v2m1 0v2m1 0v2m1 0v2m1 0v2m1 0v2m1 0v2m1 0v2m1 0v2m1 0v2m1 0v2m1 0v2m1 0v2m1 0v2m1 0v2m1 0v1m1 0v2m1 0v2m1 0v2m1 0v2m1 0v2m1 0v2m1 0v1m1 0v2m1 0v2m1 0v2m1 0v2m1 0v1m1 0v2m1 0v2m1 0v2m1 0v1m1 0v2m1 0v2m1 0v2m1 0v1m1 0v2m1 0v2m1 0v1m1 0v2m1 0v2m1 0v1m1 0v2m1 0v2m1 0v1m1 0v2m1 0v1m1 0v2m1 0v2m1 0v1m1 0v2m1 0v1m1 0v2m1 0v1m1 0v2m1 0v2m1 0v1m1 0v2m1 0v1m1 0v2m1 0v1m1 0v1m1 0v2m1 0v1m1 0v2m1 0v1m1 0v2m1 0v1m1 0v1m1 0v2m1 0v1m1 0v2m1 0v1m1 0v1m1 0v2m1 0v1m1 0v1m1 0v1m1 0v2m1 0v1m1 0v1m1 0v2m1 0v1m1 0v1m1 0v1m1 0v2m1 0v1m1 0v1m1 0v1m1 0v1m1 0v1m1 0v2m1 0v1m1 0v1m1 0v1m1 0v1m1 0v1m1 0v1m1 0v1m1 0v1m1 0v1m1 0v1m1 0v2m1 0v1m1 0v1m1 0v1m1 0v1m1 0v1m1 -1v1m1 0v1m1 0v1m1 0v1m1 0v1m1 0v1m1 0v1m1 0v1m1 0v1m1 0v1m1 0v1m1 -1v1m1 0v1m1 0v1m1 0v1m1 0v1m1 -1v1m1 0v1m1 0v1m1 0v1m1 -1v1m1 0v1m1 0v1m1 0v1m1 -1v1m1 0v1m1 0v1m1 -1v1m1 0v1m1 0v1m1 -1v1m1 0v1m1 -1v1m1 0v1m1 0v1m1 -1v1m1 0v1m1 -1v1m1 0v1m1 -1v1m1 0v1m1 -1v1m1 0v1m1 -1v1m1 0v1m1 -1v1m1 0v1m1 -1v1m1 0v1m1 -1v1m1 -1v1m1 0v1m1 -1v1m1 -1v1m1 0v1m1 -1v1m1 -1v1m1 0v1m1 -1v1m1 -1v1m1 0v1m1 -1v1m1 -1v1m1 -1v1m1 -1v1m1 0v1m1 -1v1m1 -1v1m1 -1v1m1 -1v1m1 0v1m1 -1v1m1 -1v1m1 -1v1m1 -1v1m1 -1v1m1 -1v1m1 -1v1m1 -1v1m1 -1v1m1 -1v1m1 -1v1m1 -1v1m1 -1v1m1 -1v1m1 -1v1m1 -1v1m1 -1v1m1 -1v1m1 -1v1m1 -1v1m1 -1v1m1 -1v1m1 -1v1m1 -1v1m1 -2v1m1 -1v1m1 -1v1m1 -1v1m1 -1v1m1 -2v1m1 -1v1m1 -1v1m1 -1v1m1 -2v1m1 -1v1m1 -1v1m1 -1v1m1 -2v1m1 -1v1m1 -1v1m1 -2v1m1 -1v1m1 -1v1m1 -2v1m1 -1v1m1 -2v1m1 -1v1m1 -1v1m1 -2v1m1 -1v1m1 -2v1m1 -1v1m1 -2v1m1 -1v1m1 -2v1m1 -1v1m1 -2v1m1 -1v1m1 -2v1m1 -2v1m1 -1v1m1 -2v1m1 -1v1m1 -2v1m1 -2v1m1 -1v1m1 -2v1m1 -2v1m1 -1v1m1 -2v1m1 -2v1m1 -1v1m1 -2v1m1 -2v1m1 -2v1m1 -1v1m1 -2v1m1 -2v1m1 -2v1m1 -1v1m1 -2v1m1 -2v1m1 -2v1m1 -2v1m1 -2v1m1 -1v1m1 -2v1m1 -2v1m1 -2v1m1 -2v1m1 -2v1m1 -2v1m1 -2v1m1 -2v1m1 -2v1m1 -2v1m1 -2v1m1 -2v1m1 -2v1m1 -2v1m1 -2v1m1 -2v1m1 -2v1m1 -2v1m1 -2v1m1 -2v1m1 -2v1m1 -3v2m1 -3v1m1 -2v1m1 -2v1m1 -2v1m1 -2v1m1 -2v1m1 -3v2m1 -3v1m1 -2v1m1 -2v1m1 -3v2m1 -3v1m1 -2v1m1 -2v1m1 -3v2m1 -3v1m1 -2v1m1 -3v2m1 -3v1m1 -2v1m1 -3v2m1 -3v1m1 -2v1m1 -3v2m1 -3v1m1 -2v1m1 -3v2m1 -3v1m1 -3v2m1 -3v1m1 -3v2m1 -3v1m1 -2v1m1 -3v2m1 -3v1m1 -3v2m1 -3v1m1 -3v2m1 -4v2m1 -3v1m1 -3v2m1 -3v1m1 -3v2m1 -3v1m1 -3v2m1 -3v1m1 -3v2m1 -4v2m1 -3v1m1 -3v2m1 -4v2m1 -3v1m1 -3v2m1 -4v2m1 -3v1m1 -3v2m1 -4v2m1 -3v1m1 -3v2m1 -4v2m1 -3v1m1 -3v2m1 -4v2m1 -4v2m1 -3v1m1 -3v2m1 -4v2m1 -4v2m1 -4v2m1 -3v1m1 -3v2m1 -4v2m1 -4v2m1 -4v2m1 -4v2m1 -3v1m1 -3v2m1 -4v2m1 -4v2m1 -4v2m1 -4v2m1 -4v2m1 -4v2m1 -4v2m1 -4v2m1 -4v2m1 -3v1m1 -3v2m1 -4v2m1 -4v2m1 -4v2m1 -4v2m1 -4v2m1 -4v2m1 -4v2m1 -4v2m1 -4v2m1 -4v2m1 -4v2m1 -5v3m1 -5v2m1 -4v2m1 -4v2m1 -4v2m1 -4v2m1 -4v2m1 -4v2m1 -4v2m1 -4v2m1 -4v2m1 -5v3m1 -5v2m1 -4v2m1 -4v2m1 -4v2m1 -4v2m1 -4v2m1 -5v3m1 -5v2m1 -4v2m1 -4v2m1 -4v2m1 -5v3m1 -5v2m1 -4v2m1 -4v2m1 -4v2m1 -5v3m1 -5v2m1 -4v2m1 -4v2m1 -5v3m1 -5v2m1 -4v2m1 -5v3m1 -5v2m1 -4v2m1 -4v2m1 -5v3m1 -5v2m1 -4v2m1 -5v3m1 -5v2m1 -4v2m1 -5v3m1 -5v2m1 -4v2m1 -5v3" stroke="#20d0a0"/>
<path d="M65.5 30v1m1 0v2m1 0v2m1 0v3m1 0v2m1 0v2m1 0v3m1 0v2m1 0v2m1 0v2m1 0v3m1 0v2m1 0v2m1 0v3m1 0v2m1 0v2m1 0v2m1 0v3m1 0v2m1 0v2m1 0v2m1 0v3m1 0v2m1 0v2m1 0v2m1 0v3m1 0v2m1 0v2m1 0v2m1 0v2m1 0v3m1 0v2m1 0v2m1 0v2m1 0v2m1 0v2m1 0v2m1 0v3m1 0v2m1 0v2m1 0v2m1 0v2m1 0v2m1 0v2m1 0v2m1 0v2m1 0v3m1 0v2m1 0v2m1 0v2m1 0v2m1 0v2m1 0v2m1 0v2m1 0v2m1 0v2m1 0v2m1 0v2m1 0v2m1 0v2m1 0v2m1 0v2m1 0v2m1 0v2m1 0v2m1 0v1m1 0v2m1 0v2m1 0v2m1 0v2m1 0v2m1 0v2m1 0v2m1 0v2m1 0v1m1 0v2m1 0v2m1 0v2m1 0v2m1 0v2m1 0v1m1 0v2m1 0v2m1 0v2m1 0v1m1 0v2m1 0v2m1 0v2m1 0v1m1 0v2m1 0v2m1 0v2m1 0v1m1 0v2m1 0v2m1 0v1m1 0v2m1 0v2m1 0v1m1 0v2m1 0v1m1 0v2m1 0v2m1 0v1m1 0v2m1 0v1m1 0v2m1 0v2m1 0v1m1 0v2m1 0v1m1 0v2m1 0v1m1 0v2m1 0v1m1 0v2m1 0v1m1 0v2m1 0v1m1 0v1m1 0v2m1 0v1m1 0v2m1 0v1m1 0v1m1 0v2m1 0v1m1 0v2m1 0v1m1 0v1m1 0v2m1 0v1m1 0v1m1 0v1m1 0v2m1 0v1m1 0v1m1 0v2m1 0v1m1 0v1m1 0v1m1 0v1m1 0v2m1 0v1m1 0v1m1 0v1m1 0v1m1 0v1m1 0v2m1 0v1m1 0v1m1 0v1m1 0v1m1 0v1m1 0v1m1 0v1m1 0v1m1 0v1m1 0v1m1 0v1m1 0v1m1 0v1m1 0v1m1 0v1m1 0v1m1 0v1m1 0v1m1 0v1m1 0v1m1 0v1m1 0v1m1 0v1m1 -1v1m1 0v1m1 0v1m1 0v1m1 0v1m1 0v1m1 -1v1m1 0v1m1 0v1m1 0v1m1 0v1m1 -1v1m1 0v1m1 0v1m1 -1v1m1 0v1m1 0v1m1 0v1m1 -1v1m1 0v1m1 -1v1m1 0v1m1 0v1m1 -1v1m1 0v1m1 0v1m1 -1v1m1 0v1m1 -1v1m1 0v1m1 -1v1m1 0v1m1 -1v1m1 0v1m1 -1v1m1 0v1m1 -1v1m1 0v1m1 -1v1m1 -1v1m1 0v1m1 -1v1m1 0v1m1 -1v1m1 -1v1m1 0v1m1 -1v1m1 -1v1m1 0v1m1 -1v1m1 -1v1m1 -1v1m1 0v1m1 -1v1m1 -1v1m1 -1v1m1 0v1m1 -1v1m1 -1v1m1 -1v1m1 -1v1m1 0v1m1 -1v1m1 -1v1m1 -1v1m1 -1v1m1 -1v1m1 -1v1m1 -1v1m1 -1v1m1 -1v1m1 -1v1m1 -1v1m1 -1v1m1 -1v1m1 -1v1m1 -1v1m1 -1v1m1 -1v1m1 -1v1m1 -1v1m1 -1v1m1 -1v1m1 -1v1m1 -1v1m1 -1v1m1 -2v1m1 -1v1m1 -1v1m1 -1v1m1 -1v1m1 -2v1m1 -1v1m1 -1v1m1 -1v1m1 -1v1m1 -2v1m1 -1v1m1 -1v1m1 -2v1m1 -1v1m1 -1v1m1 -2v1m1 -1v1m1 -1v1m1 -2v1m1 -1v1m1 -2v1m1 -1v1m1 -1v1m1 -2v1m1 -1v1m1 -2v1m1 -1v1m1 -2v1m1 -1v1m1 -2v1m1 -1v1m1 -2v1m1 -1v1m1 -2v1m1 -1v1m1 -2v1m1 -2v1m1 -1v1m1 -2v1m1 -1v1m1 -2v1m1 -2v1m1 -1v1m1 -2v1m1 -2v1m1 -1v1m1 -2v1m1 -2v1m1 -2v1m1 -1v1m1 -2v1m1 -2v1m1 -2v1m1 -1v1m1 -2v1m1 -2v1m1 -2v1m1 -2v1m1 -2v1m1 -1v1m1 -2v1m1 -2v1m1 -2v1m1 -2v1m1 -2v1m1 -2v1m1 -2v1m1 -2v1m1 -2v1m1 -2v1m1 -2v1m1 -2v1m1 -2v1m1 -2v1m1 -2v1m1 -2v1m1 -2v1m1 -2v1m1 -2v1m1 -2v1m1 -2v1m1 -2v1m1 -2v1m1 -2v1m1 -3v2m1 -3v1m1 -2v1m1 -2v1m1 -2v1m1 -2v1m1 -3v2m1 -3v1m1 -2v1m1 -2v1m1 -3v2m1 -3v1m1 -2v1m1 -2v1m1 -3v2m1 -3v1m1 -2v1m1 -3v2m1 -3v1m1 -2v1m1 -3v2m1 -3v1m1 -2v1m1 -3v2m1 -3v1m1 -2v1m1 -3v2m1 -3v1m1 -3v2m1 -3v1m1 -3v2m1 -3v1m1 -3v2m1 -3v1m1 -3v2m1 -3v1m1 -3v2m1 -3v1m1 -3v2m1 -3v1m1 -3v2m1 -3v1m1 -3v2m1 -3v1m1 -3v2m1 -4v2m1 -3v1m1 -3v2m1 -3v1m1 -3v2m1 -4v2m1 -3v1m1 -3v2m1 -4v2m1 -3v1m1 -3v2m1 -4v2m1 -4v2m1 -3v1m1 -3v2m1 -4v2m1 -3v1m1 -3v2m1 -4v2m1 -4v2m1 -4v2m1 -3v1m1 -3v2m1 -4v2m1 -4v2m1 -4v2m1 -3v1m1 -3v2m1 -4v2m1 -4v2m1 -4v2m1 -4v2m1 -4v2m1 -4v2m1 -3v1m1 -3v2m1 -4v2m1 -4v2m1 -4v2m1 -4v2m1 -4v2m1 -4v2m1 -4v2m1 -4v2m1 -4v2m1 -4v2m1 -4v2m1 -4v2m1 -4v2m1 -4v2m1 -4v2m1 -4v2m1 -4v2m1 -4v2m1 -4v2m1 -4v2m1 -4v2m1 -4v2m1 -4v2m1 -4v2m1 -5v3m1 -5v2m1 -4v2m1 -4v2m1 -4v2m1 -4v2m1 -4v2m1 -4v2m1 -5v3m1 -5v2m1 -4v2m1 -4v2m1 -4v2m1 -4v2m1 -5v3m1 -5v2m1 -4v2m1 -4v2m1 -4v2m1 -5v3m1 -5v2m1 -4v2m1 -4v2m1 -5v3m1 -5v2m1 -4v2m1 -4v2m1 -5v3m1 -5v2m1 -4v2m1 -5v3m1 -5v2m1 -4v2m1 -4v2m1 -5v3m1 -5v2m1 -4v2m1 -5v3m1 -5v2m1 -4v2m1 -5v3m1 -5v2m1 -3v1" stroke="#e0b030"/>
<path d="M62.5 30v2m1 0v3m1 0v2m1 0v2m1 0v3m1 0v2m1 0v2m1 0v3m1 0v2m1 0v2m1 0v2m1 0v3m1 0v2m1 0v2m1 0v3m1 0v2m1 0v2m1 0v2m1 0v3m1 0v2m1 0v2m1 0v2m1 0v3m1 0v2m1 0v2m1 0v2m1 0v2m1 0v3m1 0v2m1 0v2m1 0v2m1 0v2m1 0v2m1 0v3m1 0v2m1 0v2m1 0v2m1 0v2m1 0v2m1 0v2m1 0v3m1 0v2m1 0v2m1 0v2m1 0v2m1 0v2m1 0v2m1 0v2m1 0v2m1 0v2m1 0v2m1 0v2m1 0v2m1 0v2m1 0v2m1 0v2m1 0v2m1 0v2m1 0v2m1 0v2m1 0v2m1 0v2m1 0v2m1 0v2m1 0v2m1 0v2m1 0v2m1 0v2m1 0v2m1 0v1m1 0v2m1 0v2m1 0v2m1 0v2m1 0v2m1 0v2m1 0v1m1 0v2m1 0v2m1 0v2m1 0v2m1 0v1m1 0v2m1 0v2m1 0v2m1 0v1m1 0v2m1 0v2m1 0v2m1 0v1m1 0v2m1 0v2m1 0v1m1 0v2m1 0v2m1 0v2m1 0v1m1 0v2m1 0v1m1 0v2m1 0v2m1 0v1m1 0v2m1 0v1m1 0v2m1 0v2m1 0v1m1 0v2m1 0v1m1 0v2m1 0v1m1 0v2m1 0v1m1 0v2m1 0v1m1 0v2m1 0v1m1 0v2m1 0v1m1 0v1m1 0v2m1 0v1m1 0v2m1 0v1m1 0v1m1 0v2m1 0v1m1 0v2m1 0v1m1 0v1m1 0v2m1 0v1m1 0v1m1 0v1m1 0v2m1 0v1m1 0v1m1 0v1m1 0v2m1 0v1m1 0v1m1 0v1m1 0v1m1 0v2m1 0v1m1 0v1m1 0v1m1 0v1m1 0v1m1 0v1m1 0v2m1 0v1m1 0v1m1 0v1m1 0v1m1 0v1m1 0v1m1 0v1m1 0v1m1 0v1m1 0v1m1 0v1m1 0v1m1 0v1m1 0v1m1 0v1m1 0v1m1 0v1m1 0v1m1 -1v1m1 0v1m1 0v1m1 0v1m1 0v1m1 0v1m1 0v1m1 -1v1m1 0v1m1 0v1m1 0v1m1 0v1m1 -1v1m1 0v1m1 0v1m1 0v1m1 -1v1m1 0v1m1 0v1m1 -1v1m1 0v1m1 0v1m1 -1v1m1 0v1m1 0v1m1 -1v1m1 0v1m1 -1v1m1 0v1m1 -1v1m1 0v1m1 0v1m1 -1v1m1 0v1m1 -1v1m1 0v1m1 -1v1m1 0v1m1 -1v1m1 -1v1m1 0v1m1 -1v1m1 0v1m1 -1v1m1 -1v1m1 0v1m1 -1v1m1 0v1m1 -1v1m1 -1v1m1 0v1m1 -1v1m1 -1v1m1 -1v1m1 0v1m1 -1v1m1 -1v1m1 -1v1m1 0v1m1 -1v1m1 -1v1m1 -1v1m1 -1v1m1 -1v1m1 0v1m1 -1v1m1 -1v1m1 -1v1m1 -1v1m1 -1v1m1 -1v1m1 -1v1m1 -1v1m1 -1v1m1 -1v1m1 -1v1m1 -1v1m1 -1v1m1 -1v1m1 -1v1m1 -1v1m1 -1v1m1 -1v1m1 -1v1m1 -1v1m1 -1v1m1 -1v1m1 -1v1m1 -2v1m1 -1v1m1 -1v1m1 -1v1m1 -1v1m1 -1v1m1 -2v1m1 -1v1m1 -1v1m1 -1v1m1 -2v1m1 -1v1m1 -1v1m1 -2v1m1 -1v1m1 -1v1m1 -2v1m1 -1v1m1 -1v1m1 -2v1m1 -1v1m1 -1v1m1 -2v1m1 -1v1m1 -2v1m1 -1v1m1 -2v1m1 -1v1m1 -2v1m1 -1v1m1 -2v1m1 -1v1m1 -2v1m1 -1v1m1 -2v1m1 -1v1m1 -2v1m1 -1v1m1 -2v1m1 -2v1m1 -1v1m1 -2v1m1 -2v1m1 -1v1m1 -2v1m1 -2v1m1 -1v1m1 -2v1m1 -2v1m1 -1v1m1 -2v1m1 -2v1m1 -2v1m1 -1v1m1 -2v1m1 -2v1m1 -2v1m1 -2v1m1 -1v1m1 -2v1m1 -2v1m1 -2v1m1 -2v1m1 -2v1m1 -2v1m1 -2v1m1 -2v1m1 -1v1m1 -2v1m1 -2v1m1 -2v1m1 -2v1m1 -2v1m1 -2v1m1 -2v1m1 -2v1m1 -2v1m1 -2v1m1 -2v1m1 -3v2m1 -3v1m1 -2v1m1 -2v1m1 -2v1m1 -2v1m1 -2v1m1 -2v1m1 -3v2m1 -3v1m1 -2v1m1 -2v1m1 -2v1m1 -2v1m1 -3v2m1 -3v1m1 -2v1m1 -2v1m1 -3v2m1 -3v1m1 -2v1m1 -3v2m1 -3v1m1 -2v1m1 -3v2m1 -3v1m1 -2v1m1 -3v2m1 -3v1m1 -2v1m1 -3v2m1 -3v1m1 -3v2m1 -3v1m1 -2v1m1 -3v2m1 -3v1m1 -3v2m1 -3v1m1 -3v2m1 -3v1m1 -3v2m1 -3v1m1 -3v2m1 -3v1m1 -3v2m1 -3v1m1 -3v2m1 -3v1m1 -3v2m1 -4v2m1 -3v1m1 -3v2m1 -3v1m1 -3v2m1 -4v2m1 -3v1m1 -3v2m1 -4v2m1 -3v1m1 -3v2m1 -4v2m1 -3v1m1 -3v2m1 -4v2m1 -4v2m1 -3v1m1 -3v2m1 -4v2m1 -4v2m1 -3v1m1 -3v2m1 -4v2m1 -4v2m1 -3v1m1 -3v2m1 -4v2m1 -4v2m1 -4v2m1 -4v2m1 -4v2m1 -3v1m1 -3v2m1 -4v2m1 -4v2m1 -4v2m1 -4v2m1 -4v2m1 -4v2m1 -4v2m1 -4v2m1 -3v1m1 -3v2m1 -4v2m1 -4v2m1 -4v2m1 -4v2m1 -4v2m1 -4v2m1 -4v2m1 -4v2m1 -4v2m1 -4v2m1 -4v2m1 -4v2m1 -5v3m1 -5v2m1 -4v2m1 -4v2m1 -4v2m1 -4v2m1 -4v2m1 -4v2m1 -4v2m1 -4v2m1 -4v2m1 -5v3m1 -5v2m1 -4v2m1 -4v2m1 -4v2m1 -4v2m1 -5v3m1 -5v2m1 -4v2m1 -4v2m1 -4v2m1 -4v2m1 -5v3m1 -5v2m1 -4v2m1 -4v2m1 -5v3m1 -5v2m1 -4v2m1 -4v2m1 -5v3m1 -5v2m1 -4v2m1 -4v2m1 -5v3m1 -5v2m1 -4v2m1 -5v3m1 -5v2m1 -4v2m1 -4v2m1 -5v3m1 -5v2m1 -4v2m1 -5v3m1 -5v2m1 -4v2m1 -4v2" stroke="#a0d820"/>
<path d="M58.5 30v2m1 0v2m1 0v2m1 0v3m1 0v2m1 0v2m1 0v3m1 0v2m1 0v2m1 0v3m1 0v2m1 0v2m1 0v2m1 0v3m1 0v2m1 0v2m1 0v3m1 0v2m1 0v2m1 0v2m1 0v3m1 0v2m1 0v2m1 0v2m1 0v2m1 0v3m1 0v2m1 0v2m1 0v2m1 0v2m1 0v3m1 0v2m1 0v2m1 0v2m1 0v2m1 0v2m1 0v3m1 0v2m1 0v2m1 0v2m1 0v2m1 0v2m1 0v2m1 0v2m1 0v2m1 0v2m1 0v3m1 0v2m1 0v2m1 0v2m1 0v2m1 0v2m1 0v2m1 0v2m1 0v2m1 0v2m1 0v2m1 0v2m1 0v2m1 0v2m1 0v2m1 0v2m1 0v2m1 0v2m1 0v1m1 0v2m1 0v2m1 0v2m1 0v2m1 0v2m1 0v2m1 0v2m1 0v2m1 0v1m1 0v2m1 0v2m1 0v2m1 0v2m1 0v2m1 0v1m1 0v2m1 0v2m1 0v2m1 0v2m1 0v1m1 0v2m1 0v2m1 0v2m1 0v1m1 0v2m1 0v2m1 0v1m1 0v2m1 0v2m1 0v1m1 0v2m1 0v2m1 0v1m1 0v2m1 0v2m1 0v1m1 0v2m1 0v1m1 0v2m1 0v2m1 0v1m1 0v2m1 0v1m1 0v2m1 0v1m1 0v2m1 0v1m1 0v2m1 0v1m1 0v2m1 0v1m1 0v2m1 0v1m1 0v2m1 0v1m1 0v2m1 0v1m1 0v1m1 0v2m1 0v1m1 0v1m1 0v2m1 0v1m1 0v2m1 0v1m1 0v1m1 0v1m1 0v2m1 0v1m1 0v1m1 0v2m1 0v1m1 0v1m1 0v1m1 0v2m1 0v1m1 0v1m1 0v1m1 0v1m1 0v2m1 0v1m1 0v1m1 0v1m1 0v1m1 0v1m1 0v1m1 0v1m1 0v1m1 0v2m1 0v1m1 0v1m1 0v1m1 0v1m1 0v1m1 0v1m1 0v1m1 0v1m1 0v1m1 0v1m1 0v1m1 0v1m1 0v1m1 -1v1m1 0v1m1 0v1m1 0v1m1 0v1m1 0v1m1 0v1m1 0v1m1 -1v1m1 0v1m1 0v1m1 0v1m1 0v1m1 -1v1m1 0v1m1 0v1m1 0v1m1 -1v1m1 0v1m1 0v1m1 -1v1m1 0v1m1 0v1m1 0v1m1 -1v1m1 0v1m1 -1v1m1 0v1m1 0v1m1 -1v1m1 0v1m1 -1v1m1 0v1m1 -1v1m1 0v1m1 -1v1m1 0v1m1 -1v1m1 0v1m1 -1v1m1 0v1m1 -1v1m1 0v1m1 -1v1m1 0v1m1 -1v1m1 -1v1m1 0v1m1 -1v1m1 -1v1m1 0v1m1 -1v1m1 -1v1m1 0v1m1 -1v1m1 -1v1m1 0v1m1 -1v1m1 -1v1m1 -1v1m1 0v1m1 -1v1m1 -1v1m1 -1v1m1 -1v1m1 -1v1m1 0v1m1 -1v1m1 -1v1m1 -1v1m1 -1v1m1 -1v1m1 -1v1m1 -1v1m1 -1v1m1 -1v1m1 -1v1m1 -1v1m1 -1v1m1 -1v1m1 -1v1m1 -1v1m1 -1v1m1 -1v1m1 -1v1m1 -1v1m1 -1v1m1 -1v1m1 -1v1m1 -1v1m1 -2v1m1 -1v1m1 -1v1m1 -1v1m1 -1v1m1 -1v1m1 -2v1m1 -1v1m1 -1v1m1 -1v1m1 -2v1m1 -1v1m1 -1v1m1 -1v1m1 -2v1m1 -1v1m1 -1v1m1 -2v1m1 -1v1m1 -2v1m1 -1v1m1 -1v1m1 -2v1m1 -1v1m1 -2v1m1 -1v1m1 -1v1m1 -2v1m1 -1v1m1 -2v1m1 -1v1m1 -2v1m1 -1v1m1 -2v1m1 -2v1m1 -1v1m1 -2v1m1 -1v1m1 -2v1m1 -1v1m1 -2v1m1 -2v1m1 -1v1m1 -2v1m1 -2v1m1 -1v1m1 -2v1m1 -2v1m1 -1v1m1 -2v1m1 -2v1m1 -2v1m1 -1v1m1 -2v1m1 -2v1m1 -2v1m1 -2v1m1 -1v1m1 -2v1m1 -2v1m1 -2v1m1 -2v1m1 -2v1m1 -2v1m1 -1v1m1 -2v1m1 -2v1m1 -2v1m1 -2v1m1 -2v1m1 -2v1m1 -2v1m1 -2v1m1 -2v1m1 -2v1m1 -2v1m1 -2v1m1 -2v1m1 -2v1m1 -2v1m1 -2v1m1 -2v1m1 -3v2m1 -3v1m1 -2v1m1 -2v1m1 -2v1m1 -2v1m1 -2v1m1 -3v2m1 -3v1m1 -2v1m1 -2v1m1 -2v1m1 -3v2m1 -3v1m1 -2v1m1 -2v1m1 -3v2m1 -3v1m1 -2v1m1 -3v2m1 -3v1m1 -2v1m1 -3v2m1 -3v1m1 -2v1m1 -3v2m1 -3v1m1 -2v1m1 -3v2m1 -3v1m1 -3v2m1 -3v1m1 -2v1m1 -3v2m1 -3v1m1 -3v2m1 -3v1m1 -3v2m1 -3v1m1 -3v2m1 -3v1m1 -3v2m1 -3v1m1 -3v2m1 -3v1m1 -3v2m1 -4v2m1 -3v1m1 -3v2m1 -3v1m1 -3v2m1 -4v2m1 -3v1m1 -3v2m1 -4v2m1 -3v1m1 -3v2m1 -4v2m1 -3v1m1 -3v2m1 -4v2m1 -3v1m1 -3v2m1 -4v2m1 -4v2m1 -3v1m1 -3v2m1 -4v2m1 -4v2m1 -3v1m1 -3v2m1 -4v2m1 -4v2m1 -4v2m1 -3v1m1 -3v2m1 -4v2m1 -4v2m1 -4v2m1 -4v2m1 -4v2m1 -4v2m1 -3v1m1 -3v2m1 -4v2m1 -4v2m1 -4v2m1 -4v2m1 -4v2m1 -4v2m1 -4v2m1 -4v2m1 -4v2m1 -4v2m1 -4v2m1 -4v2m1 -4v2m1 -4v2m1 -4v2m1 -4v2m1 -4v2m1 -4v2m1 -4v2m1 -4v2m1 -4v2m1 -4v2m1 -4v2m1 -4v2m1 -4v2m1 -5v3m1 -5v2m1 -4v2m1 -4v2m1 -4v2m1 -4v2m1 -4v2m1 -4v2m1 -5v3m1 -5v2m1 -4v2m1 -4v2m1 -4v2m1 -5v3m1 -5v2m1 -4v2m1 -4v2m1 -4v2m1 -5v3m1 -5v2m1 -4v2m1 -4v2m1 -4v2m1 -5v3m1 -5v2m1 -4v2m1 -5v3m1 -5v2m1 -4v2m1 -4v2m1 -5v3m1 -5v2m1 -4v2m1 -5v3m1 -5v2m1 -4v2m1 -5v3m1 -5v2m1 -4v2m1 -5v3m1 -5v2m1 -4v2" stroke="#d070b0"/>
<path d="M54.5 30v1m1 0v2m1 0v3m1 0v2m1 0v2m1 0v3m1 0v2m1 0v2m1 0v3m1 0v2m1 0v2m1 0v3m1 0v2m1 0v2m1 0v2m1 0v3m1 0v2m1 0v2m1 0v2m1 0v3m1 0v2m1 0v2m1 0v2m1 0v3m1 0v2m1 0v2m1 0v2m1 0v2m1 0v3m1 0v2m1 0v2m1 0v2m1 0v2m1 0v3m1 0v2m1 0v2m1 0v2m1 0v2m1 0v2m1 0v2m1 0v2m1 0v3m1 0v2m1 0v2m1 0v2m1 0v2m1 0v2m1 0v2m1 0v2m1 0v2m1 0v2m1 0v2m1 0v2m1 0v2m1 0v2m1 0v2m1 0v2m1 0v2m1 0v2m1 0v2m1 0v2m1 0v2m1 0v2m1 0v2m1 0v2m1 0v2m1 0v2m1 0v2m1 0v2m1 0v1m1 0v2m1 0v2m1 0v2m1 0v2m1 0v2m1 0v2m1 0v1m1 0v2m1 0v2m1 0v2m1 0v2m1 0v2m1 0v1m1 0v2m1 0v2m1 0v2m1 0v1m1 0v2m1 0v2m1 0v2m1 0v1m1 0v2m1 0v2m1 0v1m1 0v2m1 0v2m1 0v1m1 0v2m1 0v2m1 0v1m1 0v2m1 0v1m1 0v2m1 0v2m1 0v1m1 0v2m1 0v1m1 0v2m1 0v1m1 0v2m1 0v1m1 0v2m1 0v1m1 0v2m1 0v1m1 0v2m1 0v1m1 0v2m1 0v1m1 0v2m1 0v1m1 0v2m1 0v1m1 0v1m1 0v2m1 0v1m1 0v1m1 0v2m1 0v1m1 0v2m1 0v1m1 0v1m1 0v1m1 0v2m1 0v1m1 0v1m1 0v2m1 0v1m1 0v1m1 0v1m1 0v1m1 0v2m1 0v1m1 0v1m1 0v1m1 0v1m1 0v2m1 0v1m1 0v1m1 0v1m1 0v1m1 0v1m1 0v1m1 0v1m1 0v1m1 0v1m1 0v1m1 0v1m1 0v1m1 0v2m1 0v1m1 -1v1m1 0v1m1 0v1m1 0v1m1 0v1m1 0v1m1 0v1m1 0v1m1 0v1m1 0v1m1 0v1m1 0v1m1 0v1m1 -1v1m1 0v1m1 0v1m1 0v1m1 0v1m1 -1v1m1 0v1m1 0v1m1 0v1m1 -1v1m1 0v1m1 0v1m1 0v1m1 -1v1m1 0v1m1 0v1m1 -1v1m1 0v1m1 0v1m1 -1v1m1 0v1m1 -1v1m1 0v1m1 0v1m1 -1v1m1 0v1m1 -1v1m1 0v1m1 -1v1m1 0v1m1 -1v1m1 0v1m1 -1v1m1 0v1m1 -1v1m1 0v1m1 -1v1m1 -1v1m1 0v1m1 -1v1m1 0v1m1 -1v1m1 -1v1m1 0v1m1 -1v1m1 -1v1m1 0v1m1 -1v1m1 -1v1m1 0v1m1 -1v1m1 -1v1m1 -1v1m1 -1v1m1 0v1m1 -1v1m1 -1v1m1 -1v1m1 -1v1m1 0v1m1 -1v1m1 -1v1m1 -1v1m1 -1v1m1 -1v1m1 -1v1m1 -1v1m1 -1v1m1 -1v1m1 -1v1m1 -1v1m1 -1v1m1 -1v1m1 -1v1m1 -1v1m1 -1v1m1 -1v1m1 -1v1m1 -1v1m1 -1v1m1 -1v1m1 -1v1m1 -1v1m1 -1v1m1 -2v1m1 -1v1m1 -1v1m1 -1v1m1 -1v1m1 -2v1m1 -1v1m1 -1v1m1 -1v1m1 -2v1m1 -1v1m1 -1v1m1 -1v1m1 -2v1m1 -1v1m1 -1v1m1 -2v1m1 -1v1m1 -1v1m1 -2v1m1 -1v1m1 -2v1m1 -1v1m1 -1v1m1 -2v1m1 -1v1m1 -2v1m1 -1v1m1 -2v1m1 -1v1m1 -2v1m1 -1v1m1 -2v1m1 -1v1m1 -2v1m1 -2v1m1 -1v1m1 -2v1m1 -1v1m1 -2v1m1 -2v1m1 -1v1m1 -2v1m1 -2v1m1 -1v1m1 -2v1m1 -2v1m1 -1v1m1 -2v1m1 -2v1m1 -1v1m1 -2v1m1 -2v1m1 -2v1m1 -2v1m1 -1v1m1 -2v1m1 -2v1m1 -2v1m1 -2v1m1 -2v1m1 -1v1m1 -2v1m1 -2v1m1 -2v1m1 -2v1m1 -2v1m1 -2v1m1 -2v1m1 -2v1m1 -2v1m1 -2v1m1 -2v1m1 -2v1m1 -2v1m1 -2v1m1 -2v1m1 -2v1m1 -2v1m1 -2v1m1 -2v1m1 -2v1m1 -2v1m1 -3v2m1 -3v1m1 -2v1m1 -2v1m1 -2v1m1 -2v1m1 -2v1m1 -3v2m1 -3v1m1 -2v1m1 -2v1m1 -3v2m1 -3v1m1 -2v1m1 -2v1m1 -3v2m1 -3v1m1 -2v1m1 -3v2m1 -3v1m1 -2v1m1 -3v2m1 -3v1m1 -2v1m1 -3v2m1 -3v1m1 -2v1m1 -3v2m1 -3v1m1 -3v2m1 -3v1m1 -3v2m1 -3v1m1 -2v1m1 -3v2m1 -3v1m1 -3v2m1 -3v1m1 -3v2m1 -3v1m1 -3v2m1 -4v2m1 -3v1m1 -3v2m1 -3v1m1 -3v2m1 -3v1m1 -3v2m1 -4v2m1 -3v1m1 -3v2m1 -3v1m1 -3v2m1 -4v2m1 -3v1m1 -3v2m1 -4v2m1 -4v2m1 -3v1m1 -3v2m1 -4v2m1 -3v1m1 -3v2m1 -4v2m1 -4v2m1 -3v1m1 -3v2m1 -4v2m1 -4v2m1 -4v2m1 -3v1m1 -3v2m1 -4v2m1 -4v2m1 -4v2m1 -4v2m1 -3v1m1 -3v2m1 -4v2m1 -4v2m1 -4v2m1 -4v2m1 -4v2m1 -4v2m1 -4v2m1 -4v2m1 -3v1m1 -3v2m1 -4v2m1 -4v2m1 -4v2m1 -4v2m1 -4v2m1 -4v2m1 -4v2m1 -4v2m1 -4v2m1 -4v2m1 -4v2m1 -4v2m1 -4v2m1 -5v3m1 -5v2m1 -4v2m1 -4v2m1 -4v2m1 -4v2m1 -4v2m1 -4v2m1 -4v2m1 -4v2m1 -4v2m1 -5v3m1 -5v2m1 -4v2m1 -4v2m1 -4v2m1 -4v2m1 -5v3m1 -5v2m1 -4v2m1 -4v2m1 -4v2m1 -5v3m1 -5v2m1 -4v2m1 -4v2m1 -4v2m1 -5v3m1 -5v2m1 -4v2m1 -4v2m1 -5v3m1 -5v2m1 -4v2m1 -4v2m1 -5v3m1 -5v2m1 -4v2m1 -5v3m1 -5v2m1 -4v2m1 -5v3m1 -5v2m1 -4v2m1 -5v3m1 -5v2m1 -4v2m1 -5v3" stroke="#1020f0"/>
<path d="M51.5 30v3m1 0v2m1 0v2m1 0v3m1 0v2m1 0v2m1 0v3m1 0v2m1 0v2m1 0v3m1 0v2m1 0v2m1 0v3m1 0v2m1 0v2m1 0v2m1 0v3m1 0v2m1 0v2m1 0v2m1 0v3m1 0v2m1 0v2m1 0v2m1 0v2m1 0v3m1 0v2m1 0v2m1 0v2m1 0v2m1 0v3m1 0v2m1 0v2m1 0v2m1 0v2m1 0v2m1 0v3m1 0v2m1 0v2m1 0v2m1 0v2m1 0v2m1 0v2m1 0v2m1 0v2m1 0v2m1 0v3m1 0v2m1 0v2m1 0v2m1 0v2m1 0v2m1 0v2m1 0v2m1 0v2m1 0v2m1 0v2m1 0v2m1 0v2m1 0v2m1 0v2m1 0v2m1 0v2m1 0v1m1 0v2m1 0v2m1 0v2m1 0v2m1 0v2m1 0v2m1 0v2m1 0v2m1 0v1m1 0v2m1 0v2m1 0v2m1 0v2m1 0v2m1 0v1m1 0v2m1 0v2m1 0v2m1 0v2m1 0v1m1 0v2m1 0v2m1 0v2m1 0v1m1 0v2m1 0v2m1 0v1m1 0v2m1 0v2m1 0v2m1 0v1m1 0v2m1 0v2m1 0v1m1 0v2m1 0v1m1 0v2m1 0v2m1 0v1m1 0v2m1 0v1m1 0v2m1 0v1m1 0v2m1 0v2m1 0v1m1 0v2m1 0v1m1 0v2m1 0v1m1 0v2m1 0v1m1 0v1m1 0v2m1 0v1m1 0v2m1 0v1m1 0v2m1 0v1m1 0v1m1 0v2m1 0v1m1 0v1m1 0v2m1 0v1m1 0v1m1 0v2m1 0v1m1 0v1m1 0v2m1 0v1m1 0v1m1 0v1m1 0v2m1 0v1m1 0v1m1 0v1m1 0v2m1 0v1m1 0v1m1 0v1m1 0v1m1 0v1m1 0v2m1 0v1m1 0v1m1 0v1m1 0v1m1 0v1m1 0v1m1 0v1m1 0v1m1 0v1m1 0v1m1 0v1m1 0v1m1 0v1m1 0v1m1 0v1m1 0v1m1 0v1m1 0v1m1 0v1m1 0v1m1 0v1m1 0v1m1 0v1m1 -1v1m1 0v1m1 0v1m1 0v1m1 0v1m1 0v1m1 -1v1m1 0v1m1 0v1m1 0v1m1 0v1m1 -1v1m1 0v1m1 0v1m1 -1v1m1 0v1m1 0v1m1 0v1m1 -1v1m1 0v1m1 -1v1m1 0v1m1 0v1m1 -1v1m1 0v1m1 -1v1m1 0v1m1 0v1m1 -1v1m1 0v1m1 -1v1m1 0v1m1 -1v1m1 0v1m1 -1v1m1 0v1m1 -1v1m1 0v1m1 -1v1m1 -1v1m1 0v1m1 -1v1m1 0v1m1 -1v1m1 -1v1m1 0v1m1 -1v1m1 -1v1m1 0v1m1 -1v1m1 -1v1m1 -1v1m1 0v1m1 -1v1m1 -1v1m1 -1v1m1 0v1m1 -1v1m1 -1v1m1 -1v1m1 -1v1m1 0v1m1 -1v1m1 -1v1m1 -1v1m1 -1v1m1 -1v1m1 -1v1m1 -1v1m1 -1v1m1 -1v1m1 -1v1m1 -1v1m1 -1v1m1 -1v1m1 -1v1m1 -1v1m1 -1v1m1 -1v1m1 -1v1m1 -1v1m1 -1v1m1 -1v1m1 -1v1m1 -1v1m1 -1v1m1 -2v1m1 -1v1m1 -1v1m1 -1v1m1 -1v1m1 -2v1m1 -1v1m1 -1v1m1 -1v1m1 -1v1m1 -2v1m1 -1v1m1 -1v1m1 -2v1m1 -1v1m1 -1v1m1 -2v1m1 -1v1m1 -1v1m1 -2v1m1 -1v1m1 -2v1m1 -1v1m1 -1v1m1 -2v1m1 -1v1m1 -2v1m1 -1v1m1 -2v1m1 -1v1m1 -2v1m1 -1v1m1 -2v1m1 -1v1m1 -2v1m1 -1v1m1 -2v1m1 -2v1m1 -1v1m1 -2v1m1 -1v1m1 -2v1m1 -2v1m1 -1v1m1 -2v1m1 -2v1m1 -1v1m1 -2v1m1 -2v1m1 -2v1m1 -1v1m1 -2v1m1 -2v1m1 -2v1m1 -1v1m1 -2v1m1 -2v1m1 -2v1m1 -2v1m1 -1v1m1 -2v1m1 -2v1m1 -2v1m1 -2v1m1 -2v1m1 -2v1m1 -2v1m1 -2v1m1 -2v1m1 -2v1m1 -2v1m1 -2v1m1 -2v1m1 -2v1m1 -2v1m1 -2v1m1 -2v1m1 -2v1m1 -2v1m1 -2v1m1 -2v1m1 -2v1m1 -2v1m1 -2v1m1 -2v1m1 -2v1m1 -3v2m1 -3v1m1 -2v1m1 -2v1m1 -2v1m1 -3v2m1 -3v1m1 -2v1m1 -2v1m1 -2v1m1 -3v2m1 -3v1m1 -2v1m1 -3v2m1 -3v1m1 -2v1m1 -3v2m1 -3v1m1 -2v1m1 -3v2m1 -3v1m1 -2v1m1 -3v2m1 -3v1m1 -2v1m1 -3v2m1 -3v1m1 -3v2m1 -3v1m1 -3v2m1 -3v1m1 -3v2m1 -3v1m1 -3v2m1 -3v1m1 -3v2m1 -3v1m1 -3v2m1 -3v1m1 -3v2m1 -3v1m1 -3v2m1 -3v1m1 -3v2m1 -4v2m1 -3v1m1 -3v2m1 -3v1m1 -3v2m1 -4v2m1 -3v1m1 -3v2m1 -4v2m1 -3v1m1 -3v2m1 -4v2m1 -4v2m1 -3v1m1 -3v2m1 -4v2m1 -3v1m1 -3v2m1 -4v2m1 -4v2m1 -4v2m1 -3v1m1 -3v2m1 -4v2m1 -4v2m1 -4v2m1 -3v1m1 -3v2m1 -4v2m1 -4v2m1 -4v2m1 -4v2m1 -4v2m1 -3v1m1 -3v2m1 -4v2m1 -4v2m1 -4v2m1 -4v2m1 -4v2m1 -4v2m1 -4v2m1 -4v2m1 -4v2m1 -4v2m1 -4v2m1 -4v2m1 -4v2m1 -4v2m1 -4v2m1 -4v2m1 -4v2m1 -4v2m1 -4v2m1 -4v2m1 -4v2m1 -4v2m1 -4v2m1 -4v2m1 -4v2m1 -4v2m1 -5v3m1 -5v2m1 -4v2m1 -4v2m1 -4v2m1 -4v2m1 -4v2m1 -5v3m1 -5v2m1 -4v2m1 -4v2m1 -4v2m1 -4v2m1 -5v3m1 -5v2m1 -4v2m1 -4v2m1 -4v2m1 -5v3m1 -5v2m1 -4v2m1 -4v2m1 -5v3m1 -5v2m1 -4v2m1 -4v2m1 -5v3m1 -5v2m1 -4v2m1 -4v2m1 -5v3m1 -5v2m1 -4v2m1 -5v3m1 -5v2m1 -4v2m1 -5v3m1 -5v2m1 -4v2m1 -5v3m1 -5v2m1 -3v1" stroke="#ff20d0"/>
<path d="M47.5 30v2m1 0v3m1 0v2m1 0v2m1 0v3m1 0v2m1 0v2m1 0v2m1 0v3m1 0v2m1 0v2m1 0v3m1 0v2m1 0v2m1 0v3m1 0v2m1 0v2m1 0v2m1 0v3m1 0v2m1 0v2m1 0v2m1 0v2m1 0v3m1 0v2m1 0v2m1 0v2m1 0v3m1 0v2m1 0v2m1 0v2m1 0v2m1 0v2m1 0v3m1 0v2m1 0v2m1 0v2m1 0v2m1 0v2m1 0v2m1 0v2m1 0v3m1 0v2m1 0v2m1 0v2m1 0v2m1 0v2m1 0v2m1 0v2m1 0v2m1 0v2m1 0v2m1 0v2m1 0v2m1 0v2m1 0v2m1 0v2m1 0v2m1 0v2m1 0v2m1 0v2m1 0v2m1 0v2m1 0v2m1 0v2m1 0v2m1 0v2m1 0v2m1 0v2m1 0v1m1 0v2m1 0v2m1 0v2m1 0v2m1 0v2m1 0v2m1 0v1m1 0v2m1 0v2m1 0v2m1 0v2m1 0v1m1 0v2m1 0v2m1 0v2m1 0v1m1 0v2m1 0v2m1 0v2m1 0v1m1 0v2m1 0v2m1 0v1m1 0v2m1 0v2m1 0v1m1 0v2m1 0v2m1 0v1m1 0v2m1 0v2m1 0v1m1 0v2m1 0v1m1 0v2m1 0v2m1 0v1m1 0v2m1 0v1m1 0v2m1 0v1m1 0v2m1 0v1m1 0v2m1 0v1m1 0v2m1 0v1m1 0v2m1 0v1m1 0v1m1 0v2m1 0v1m1 0v2m1 0v1m1 0v1m1 0v2m1 0v1m1 0v1m1 0v2m1 0v1m1 0v1m1 0v2m1 0v1m1 0v1m1 0v2m1 0v1m1 0v1m1 0v1m1 0v2m1 0v1m1 0v1m1 0v1m1 0v1m1 0v2m1 0v1m1 0v1m1 0v1m1 0v1m1 0v1m1 0v1m1 0v2m1 0v1m1 0v1m1 0v1m1 0v1m1 0v1m1 0v1m1 0v1m1 0v1m1 0v1m1 0v1m1 0v1m1 0v1m1 0v1m1 0v1m1 0v1m1 0v1m1 0v1m1 0v1m1 -1v1m1 0v1m1 0v1m1 0v1m1 0v1m1 0v1m1 0v1m1 -1v1m1 0v1m1 0v1m1 0v1m1 0v1m1 -1v1m1 0v1m1 0v1m1 0v1m1 -1v1m1 0v1m1 0v1m1 -1v1m1 0v1m1 0v1m1 -1v1m1 0v1m1 0v1m1 -1v1m1 0v1m1 -1v1m1 0v1m1 -1v1m1 0v1m1 0v1m1 -1v1m1 0v1m1 -1v1m1 0v1m1 -1v1m1 0v1m1 -1v1m1 -1v1m1 0v1m1 -1v1m1 0v1m1 -1v1m1 -1v1m1 0v1m1 -1v1m1 0v1m1 -1v1m1 -1v1m1 0v1m1 -1v1m1 -1v1m1 -1v1m1 0v1m1 -1v1m1 -1v1m1 -1v1m1 0v1m1 -1v1m1 -1v1m1 -1v1m1 -1v1m1 -1v1m1 0v1m1 -1v1m1 -1v1m1 -1v1m1 -1v1m1 -1v1m1 -1v1m1 -1v1m1 -1v1m1 -1v1m1 -1v1m1 -1v1m1 -1v1m1 -1v1m1 -1v1m1 -1v1m1 -1v1m1 -1v1m1 -1v1m1 -1v1m1 -1v1m1 -1v1m1 -1v1m1 -1v1m1 -2v1m1 -1v1m1 -1v1m1 -1v1m1 -1v1m1 -1v1m1 -2v1m1 -1v1m1 -1v1m1 -1v1m1 -2v1m1 -1v1m1 -1v1m1 -2v1m1 -1v1m1 -1v1m1 -2v1m1 -1v1m1 -1v1m1 -2v1m1 -1v1m1 -1v1m1 -2v1m1 -1v1m1 -2v1m1 -1v1m1 -2v1m1 -1v1m1 -2v1m1 -1v1m1 -2v1m1 -1v1m1 -2v1m1 -1v1m1 -2v1m1 -1v1m1 -2v1m1 -1v1m1 -2v1m1 -2v1m1 -1v1m1 -2v1m1 -2v1m1 -1v1m1 -2v1m1 -2v1m1 -1v1m1 -2v1m1 -2v1m1 -1v1m1 -2v1m1 -2v1m1 -2v1m1 -1v1m1 -2v1m1 -2v1m1 -2v1m1 -2v1m1 -1v1m1 -2v1m1 -2v1m1 -2v1m1 -2v1m1 -2v1m1 -2v1m1 -2v1m1 -1v1m1 -2v1m1 -2v1m1 -2v1m1 -2v1m1 -2v1m1 -2v1m1 -2v1m1 -2v1m1 -2v1m1 -2v1m1 -2v1m1 -2v1m1 -3v2m1 -3v1m1 -2v1m1 -2v1m1 -2v1m1 -2v1m1 -2v1m1 -2v1m1 -2v1m1 -3v2m1 -3v1m1 -2v1m1 -2v1m1 -2v1m1 -3v2m1 -3v1m1 -2v1m1 -2v1m1 -3v2m1 -3v1m1 -2v1m1 -3v2m1 -3v1m1 -2v1m1 -2v1m1 -3v2m1 -3v1m1 -3v2m1 -3v1m1 -2v1m1 -3v2m1 -3v1m1 -2v1m1 -3v2m1 -3v1m1 -3v2m1 -3v1m1 -3v2m1 -3v1m1 -3v2m1 -3v1m1 -3v2m1 -3v1m1 -3v2m1 -3v1m1 -3v2m1 -3v1m1 -3v2m1 -3v1m1 -3v2m1 -4v2m1 -3v1m1 -3v2m1 -3v1m1 -3v2m1 -4v2m1 -3v1m1 -3v2m1 -4v2m1 -3v1m1 -3v2m1 -4v2m1 -3v1m1 -3v2m1 -4v2m1 -4v2m1 -3v1m1 -3v2m1 -4v2m1 -3v1m1 -3v2m1 -4v2m1 -4v2m1 -4v2m1 -3v1m1 -3v2m1 -4v2m1 -4v2m1 -4v2m1 -4v2m1 -3v1m1 -3v2m1 -4v2m1 -4v2m1 -4v2m1 -4v2m1 -4v2m1 -4v2m1 -4v2m1 -4v2m1 -3v1m1 -3v2m1 -4v2m1 -4v2m1 -4v2m1 -4v2m1 -4v2m1 -4v2m1 -4v2m1 -4v2m1 -4v2m1 -4v2m1 -4v2m1 -4v2m1 -4v2m1 -4v2m1 -5v3m1 -5v2m1 -4v2m1 -4v2m1 -4v2m1 -4v2m1 -4v2m1 -4v2m1 -4v2m1 -4v2m1 -5v3m1 -5v2m1 -4v2m1 -4v2m1 -4v2m1 -4v2m1 -4v2m1 -5v3m1 -5v2m1 -4v2m1 -4v2m1 -4v2m1 -5v3m1 -5v2m1 -4v2m1 -4v2m1 -5v3m1 -5v2m1 -4v2m1 -4v2m1 -5v3m1 -5v2m1 -4v2m1 -4v2m1 -5v3m1 -5v2m1 -4v2m1 -4v2m1 -5v3m1 -5v2m1 -4v2m1 -5v3m1 -5v2m1 -4v2m1 -5v3m1 -5v2m1 -4v2m1 -4v2" stroke="#f03070"/>
<path d="M43.5 30v2m1 0v2m1 0v2m1 0v3m1 0v2m1 0v2m1 0v3m1 0v2m1 0v2m1 0v2m1 0v3m1 0v2m1 0v2m1 0v3m1 0v2m1 0v2m1 0v2m1 0v3m1 0v2m1 0v2m1 0v2m1 0v3m1 0v2m1 0v2m1 0v2m1 0v3m1 0v2m1 0v2m1 0v2m1 0v2m1 0v3m1 0v2m1 0v2m1 0v2m1 0v2m1 0v2m1 0v2m1 0v3m1 0v2m1 0v2m1 0v2m1 0v2m1 0v2m1 0v2m1 0v2m1 0v2m1 0v2m1 0v2m1 0v3m1 0v2m1 0v2m1 0v2m1 0v2m1 0v2m1 0v2m1 0v2m1 0v2m1 0v2m1 0v2m1 0v2m1 0v2m1 0v2m1 0v2m1 0v1m1 0v2m1 0v2m1 0v2m1 0v2m1 0v2m1 0v2m1 0v2m1 0v2m1 0v2m1 0v1m1 0v2m1 0v2m1 0v2m1 0v2m1 0v2m1 0v1m1 0v2m1 0v2m1 0v2m1 0v1m1 0v2m1 0v2m1 0v2m1 0v1m1 0v2m1 0v2m1 0v2m1 0v1m1 0v2m1 0v2m1 0v1m1 0v2m1 0v2m1 0v1m1 0v2m1 0v2m1 0v1m1 0v2m1 0v1m1 0v2m1 0v2m1 0v1m1 0v2m1 0v1m1 0v2m1 0v1m1 0v2m1 0v1m1 0v2m1 0v1m1 0v2m1 0v1m1 0v2m1 0v1m1 0v2m1 0v1m1 0v1m1 0v2m1 0v1m1 0v2m1 0v1m1 0v1m1 0v2m1 0v1m1 0v1m1 0v2m1 0v1m1 0v1m1 0v2m1 0v1m1 0v1m1 0v2m1 0v1m1 0v1m1 0v1m1 0v2m1 0v1m1 0v1m1 0v1m1 0v1m1 0v1m1 0v2m1 0v1m1 0v1m1 0v1m1 0v1m1 0v1m1 0v1m1 0v1m1 0v2m1 0v1m1 0v1m1 0v1m1 0v1m1 0v1m1 0v1m1 0v1m1 0v1m1 0v1m1 0v1m1 0v1m1 0v1m1 0v1m1 -1v1m1 0v1m1 0v1m1 0v1m1 0v1m1 0v1m1 0v1m1 0v1m1 -1v1m1 0v1m1 0v1m1 0v1m1 0v1m1 -1v1m1 0v1m1 0v1m1 0v1m1 -1v1m1 0v1m1 0v1m1 -1v1m1 0v1m1 0v1m1 -1v1m1 0v1m1 0v1m1 -1v1m1 0v1m1 0v1m1 -1v1m1 0v1m1 -1v1m1 0v1m1 -1v1m1 0v1m1 -1v1m1 0v1m1 -1v1m1 0v1m1 -1v1m1 0v1m1 -1v1m1 0v1m1 -1v1m1 0v1m1 -1v1m1 -1v1m1 0v1m1 -1v1m1 -1v1m1 0v1m1 -1v1m1 -1v1m1 0v1m1 -1v1m1 -1v1m1 0v1m1 -1v1m1 -1v1m1 -1v1m1 0v1m1 -1v1m1 -1v1m1 -1v1m1 -1v1m1 -1v1m1 0v1m1 -1v1m1 -1v1m1 -1v1m1 -1v1m1 -1v1m1 -1v1m1 -1v1m1 -1v1m1 -1v1m1 -1v1m1 -1v1m1 -1v1m1 -1v1m1 -1v1m1 -1v1m1 -1v1m1 -1v1m1 -1v1m1 -1v1m1 -1v1m1 -1v1m1 -1v1m1 -1v1m1 -2v1m1 -1v1m1 -1v1m1 -1v1m1 -1v1m1 -1v1m1 -2v1m1 -1v1m1 -1v1m1 -1v1m1 -2v1m1 -1v1m1 -1v1m1 -1v1m1 -2v1m1 -1v1m1 -1v1m1 -2v1m1 -1v1m1 -2v1m1 -1v1m1 -1v1m1 -2v1m1 -1v1m1 -2v1m1 -1v1m1 -1v1m1 -2v1m1 -1v1m1 -2v1m1 -1v1m1 -2v1m1 -1v1m1 -2v1m1 -2v1m1 -1v1m1 -2v1m1 -1v1m1 -2v1m1 -1v1m1 -2v1m1 -2v1m1 -1v1m1 -2v1m1 -2v1m1 -1v1m1 -2v1m1 -2v1m1 -1v1m1 -2v1m1 -2v1m1 -2v1m1 -1v1m1 -2v1m1 -2v1m1 -2v1m1 -2v1m1 -1v1m1 -2v1m1 -2v1m1 -2v1m1 -2v1m1 -2v1m1 -2v1m1 -1v1m1 -2v1m1 -2v1m1 -2v1m1 -2v1m1 -2v1m1 -2v1m1 -2v1m1 -2v1m1 -2v1m1 -2v1m1 -2v1m1 -2v1m1 -2v1m1 -2v1m1 -2v1m1 -2v1m1 -2v1m1 -3v2m1 -3v1m1 -2v1m1 -2v1m1 -2v1m1 -2v1m1 -2v1m1 -3v2m1 -3v1m1 -2v1m1 -2v1m1 -2v1m1 -3v2m1 -3v1m1 -2v1m1 -2v1m1 -3v2m1 -3v1m1 -2v1m1 -3v2m1 -3v1m1 -2v1m1 -2v1m1 -3v2m1 -3v1m1 -3v2m1 -3v1m1 -2v1m1 -3v2m1 -3v1m1 -3v2m1 -3v1m1 -2v1m1 -3v2m1 -3v1m1 -3v2m1 -3v1m1 -3v2m1 -3v1m1 -3v2m1 -3v1m1 -3v2m1 -3v1m1 -3v2m1 -3v1m1 -3v2m1 -4v2m1 -3v1m1 -3v2m1 -3v1m1 -3v2m1 -4v2m1 -3v1m1 -3v2m1 -4v2m1 -3v1m1 -3v2m1 -4v2m1 -3v1m1 -3v2m1 -4v2m1 -3v1m1 -3v2m1 -4v2m1 -4v2m1 -3v1m1 -3v2m1 -4v2m1 -4v2m1 -3v1m1 -3v2m1 -4v2m1 -4v2m1 -4v2m1 -3v1m1 -3v2m1 -4v2m1 -4v2m1 -4v2m1 -4v2m1 -4v2m1 -3v1m1 -3v2m1 -4v2m1 -4v2m1 -4v2m1 -4v2m1 -4v2m1 -4v2m1 -4v2m1 -4v2m1 -4v2m1 -4v2m1 -4v2m1 -4v2m1 -4v2m1 -4v2m1 -4v2m1 -4v2m1 -4v2m1 -4v2m1 -4v2m1 -4v2m1 -4v2m1 -4v2m1 -4v2m1 -4v2m1 -4v2m1 -4v2m1 -4v2m1 -5v3m1 -5v2m1 -4v2m1 -4v2m1 -4v2m1 -4v2m1 -4v2m1 -5v3m1 -5v2m1 -4v2m1 -4v2m1 -4v2m1 -4v2m1 -5v3m1 -5v2m1 -4v2m1 -4v2m1 -4v2m1 -5v3m1 -5v2m1 -4v2m1 -4v2m1 -5v3m1 -5v2m1 -4v2m1 -4v2m1 -5v3m1 -5v2m1 -4v2m1 -5v3m1 -5v2m1 -4v2m1 -4v2m1 -5v3m1 -5v2m1 -4v2m1 -5v3m1 -5v2m1 -4v2m1 -5v3m1 -5v2" stroke="#90e020"/>
<path d="M42.5 36v2m1 0v2m1 0v3m1 0v2m1 0v2m1 0v3m1 0v2m1 0v2m1 0v2m1 0v3m1 0v2m1 0v2m1 0v3m1 0v2m1 0v2m1 0v2m1 0v3m1 0v2m1 0v2m1 0v2m1 0v3m1 0v2m1 0v2m1 0v2m1 0v2m1 0v3m1 0v2m1 0v2m1 0v2m1 0v2m1 0v2m1 0v3m1 0v2m1 0v2m1 0v2m1 0v2m1 0v2m1 0v2m1 0v2m1 0v3m1 0v2m1 0v2m1 0v2m1 0v2m1 0v2m1 0v2m1 0v2m1 0v2m1 0v2m1 0v2m1 0v2m1 0v2m1 0v2m1 0v2m1 0v2m1 0v2m1 0v2m1 0v2m1 0v2m1 0v2m1 0v2m1 0v2m1 0v2m1 0v2m1 0v2m1 0v2m1 0v1m1 0v2m1 0v2m1 0v2m1 0v2m1 0v2m1 0v2m1 0v1m1 0v2m1 0v2m1 0v2m1 0v2m1 0v1m1 0v2m1 0v2m1 0v2m1 0v2m1 0v1m1 0v2m1 0v2m1 0v1m1 0v2m1 0v2m1 0v2m1 0v1m1 0v2m1 0v2m1 0v1m1 0v2m1 0v2m1 0v1m1 0v2m1 0v1m1 0v2m1 0v2m1 0v1m1 0v2m1 0v1m1 0v2m1 0v1m1 0v2m1 0v1m1 0v2m1 0v1m1 0v2m1 0v1m1 0v2m1 0v1m1 0v2m1 0v1m1 0v2m1 0v1m1 0v2m1 0v1m1 0v1m1 0v2m1 0v1m1 0v1m1 0v2m1 0v1m1 0v1m1 0v2m1 0v1m1 0v1m1 0v2m1 0v1m1 0v1m1 0v1m1 0v2m1 0v1m1 0v1m1 0v1m1 0v2m1 0v1m1 0v1m1 0v1m1 0v1m1 0v1m1 0v2m1 0v1m1 0v1m1 0v1m1 0v1m1 0v1m1 0v1m1 0v1m1 0v1m1 0v1m1 0v1m1 0v1m1 0v1m1 0v1m1 0v1m1 0v1m1 0v1m1 0v1m1 0v1m1 0v1m1 0v1m1 0v1m1 0v1m1 0v1m1 0v1m1 0v1m1 -1v1m1 0v1m1 0v1m1 0v1m1 0v1m1 0v1m1 -1v1m1 0v1m1 0v1m1 0v1m1 -1v1m1 0v1m1 0v1m1 0v1m1 -1v1m1 0v1m1 0v1m1 -1v1m1 0v1m1 0v1m1 -1v1m1 0v1m1 -1v1m1 0v1m1 0v1m1 -1v1m1 0v1m1 -1v1m1 0v1m1 -1v1m1 0v1m1 -1v1m1 0v1m1 -1v1m1 0v1m1 -1v1m1 0v1m1 -1v1m1 -1v1m1 0v1m1 -1v1m1 0v1m1 -1v1m1 -1v1m1 0v1m1 -1v1m1 -1v1m1 0v1m1 -1v1m1 -1v1m1 0v1m1 -1v1m1 -1v1m1 -1v1m1 -1v1m1 0v1m1 -1v1m1 -1v1m1 -1v1m1 -1v1m1 0v1m1 -1v1m1 -1v1m1 -1v1m1 -1v1m1 -1v1m1 -1v1m1 -1v1m1 -1v1m1 -1v1m1 -1v1m1 -1v1m1 -1v1m1 -1v1m1 -1v1m1 -1v1m1 -1v1m1 -1v1m1 -1v1m1 -1v1m1 -1v1m1 -1v1m1 -1v1m1 -1v1m1 -1v1m1 -2v1m1 -1v1m1 -1v1m1 -1v1m1 -1v1m1 -2v1m1 -1v1m1 -1v1m1 -1v1m1 -2v1m1 -1v1m1 -1v1m1 -1v1m1 -2v1m1 -1v1m1 -1v1m1 -2v1m1 -1v1m1 -1v1m1 -2v1m1 -1v1m1 -2v1m1 -1v1m1 -1v1m1 -2v1m1 -1v1m1 -2v1m1 -1v1m1 -2v1m1 -1v1m1 -2v1m1 -1v1m1 -2v1m1 -1v1m1 -2v1m1 -2v1m1 -1v1m1 -2v1m1 -1v1m1 -2v1m1 -2v1m1 -1v1m1 -2v1m1 -1v1m1 -2v1m1 -2v1m1 -2v1m1 -1v1m1 -2v1m1 -2v1m1 -1v1m1 -2v1m1 -2v1m1 -2v1m1 -2v1m1 -1v1m1 -2v1m1 -2v1m1 -2v1m1 -2v1m1 -2v1m1 -1v1m1 -2v1m1 -2v1m1 -2v1m1 -2v1m1 -2v1m1 -2v1m1 -2v1m1 -2v1m1 -2v1m1 -2v1m1 -2v1m1 -2v1m1 -2v1m1 -2v1m1 -2v1m1 -2v1m1 -2v1m1 -2v1m1 -2v1m1 -2v1m1 -2v1m1 -2v1m1 -3v2m1 -3v1m1 -2v1m1 -2v1m1 -2v1m1 -2v1m1 -3v2m1 -3v1m1 -2v1m1 -2v1m1 -3v2m1 -3v1m1 -2v1m1 -2v1m1 -3v2m1 -3v1m1 -2v1m1 -2v1m1 -3v2m1 -3v1m1 -2v1m1 -3v2m1 -3v1m1 -3v2m1 -3v1m1 -2v1m1 -3v2m1 -3v1m1 -3v2m1 -3v1m1 -2v1m1 -3v2m1 -3v1m1 -3v2m1 -3v1m1 -3v2m1 -3v1m1 -3v2m1 -3v1m1 -3v2m1 -3v1m1 -3v2m1 -4v2m1 -3v1m1 -3v2m1 -3v1m1 -3v2m1 -4v2m1 -3v1m1 -3v2m1 -3v1m1 -3v2m1 -4v2m1 -3v1m1 -3v2m1 -4v2m1 -3v1m1 -3v2m1 -4v2m1 -4v2m1 -3v1m1 -3v2m1 -4v2m1 -4v2m1 -3v1m1 -3v2m1 -4v2m1 -4v2m1 -4v2m1 -3v1m1 -3v2m1 -4v2m1 -4v2m1 -4v2m1 -3v1m1 -3v2m1 -4v2m1 -4v2m1 -4v2m1 -4v2m1 -4v2m1 -4v2m1 -4v2m1 -4v2m1 -3v1m1 -3v2m1 -4v2m1 -4v2m1 -4v2m1 -4v2m1 -4v2m1 -4v2m1 -4v2m1 -4v2m1 -4v2m1 -4v2m1 -4v2m1 -4v2m1 -4v2m1 -4v2m1 -4v2m1 -5v3m1 -5v2m1 -4v2m1 -4v2m1 -4v2m1 -4v2m1 -4v2m1 -4v2m1 -4v2m1 -4v2m1 -5v3m1 -5v2m1 -4v2m1 -4v2m1 -4v2m1 -4v2m1 -4v2m1 -5v3m1 -5v2m1 -4v2m1 -4v2m1 -4v2m1 -5v3m1 -5v2m1 -4v2m1 -4v2m1 -5v3m1 -5v2m1 -4v2m1 -4v2m1 -5v3m1 -5v2m1 -4v2m1 -4v2m1 -5v3m1 -5v2m1 -4v2m1 -5v3m1 -5v2m1 -4v2m1 -5v3m1 -5v2m1 -4v2m1 -4v2m1 -5v3m1 -5v2m1 -5v3" stroke="#e0a040"/>
<path d="M42.5 44v3m1 0v2m1 0v2m1 0v3m1 0v2m1 0v2m1 0v2m1 0v3m1 0v2m1 0v2m1 0v3m1 0v2m1 0v2m1 0v2m1 0v3m1 0v2m1 0v2m1 0v2m1 0v2m1 0v3m1 0v2m1 0v2m1 0v2m1 0v2m1 0v3m1 0v2m1 0v2m1 0v2m1 0v2m1 0v2m1 0v2m1 0v3m1 0v2m1 0v2m1 0v2m1 0v2m1 0v2m1 0v2m1 0v2m1 0v2m1 0v2m1 0v2m1 0v3m1 0v2m1 0v2m1 0v2m1 0v2m1 0v2m1 0v2m1 0v2m1 0v2m1 0v2m1 0v2m1 0v2m1 0v2m1 0v1m1 0v2m1 0v2m1 0v2m1 0v2m1 0v2m1 0v2m1 0v2m1 0v2m1 0v2m1 0v2m1 0v1m1 0v2m1 0v2m1 0v2m1 0v2m1 0v2m1 0v1m1 0v2m1 0v2m1 0v2m1 0v2m1 0v1m1 0v2m1 0v2m1 0v2m1 0v1m1 0v2m1 0v2m1 0v1m1 0v2m1 0v2m1 0v1m1 0v2m1 0v2m1 0v1m1 0v2m1 0v2m1 0v1m1 0v2m1 0v2m1 0v1m1 0v2m1 0v1m1 0v2m1 0v1m1 0v2m1 0v2m1 0v1m1 0v2m1 0v1m1 0v2m1 0v1m1 0v2m1 0v1m1 0v1m1 0v2m1 0v1m1 0v2m1 0v1m1 0v2m1 0v1m1 0v1m1 0v2m1 0v1m1 0v1m1 0v2m1 0v1m1 0v1m1 0v2m1 0v1m1 0v1m1 0v2m1 0v1m1 0v1m1 0v1m1 0v2m1 0v1m1 0v1m1 0v1m1 0v2m1 0v1m1 0v1m1 0v1m1 0v1m1 0v1m1 0v1m1 0v2m1 0v1m1 0v1m1 0v1m1 0v1m1 0v1m1 0v1m1 0v1m1 0v1m1 0v1m1 0v1m1 0v1m1 0v1m1 0v1m1 0v1m1 0v1m1 0v1m1 0v1m1 0v1m1 0v1m1 0v1m1 0v1m1 0v1m1 -1v1m1 0v1m1 0v1m1 0v1m1 0v1m1 0v1m1 -1v1m1 0v1m1 0v1m1 0v1m1 0v1m1 -1v1m1 0v1m1 0v1m1 -1v1m1 0v1m1 0v1m1 -1v1m1 0v1m1 0v1m1 -1v1m1 0v1m1 0v1m1 -1v1m1 0v1m1 -1v1m1 0v1m1 0v1m1 -1v1m1 0v1m1 -1v1m1 0v1m1 -1v1m1 0v1m1 -1v1m1 0v1m1 -1v1m1 0v1m1 -1v1m1 -1v1m1 0v1m1 -1v1m1 0v1m1 -1v1m1 -1v1m1 0v1m1 -1v1m1 -1v1m1 0v1m1 -1v1m1 -1v1m1 -1v1m1 0v1m1 -1v1m1 -1v1m1 -1v1m1 0v1m1 -1v1m1 -1v1m1 -1v1m1 -1v1m1 0v1m1 -1v1m1 -1v1m1 -1v1m1 -1v1m1 -1v1m1 -1v1m1 -1v1m1 -1v1m1 -1v1m1 -1v1m1 -1v1m1 -1v1m1 -1v1m1 -1v1m1 -1v1m1 -1v1m1 -1v1m1 -1v1m1 -1v1m1 -1v1m1 -1v1m1 -1v1m1 -1v1m1 -1v1m1 -2v1m1 -1v1m1 -1v1m1 -1v1m1 -1v1m1 -2v1m1 -1v1m1 -1v1m1 -1v1m1 -1v1m1 -2v1m1 -1v1m1 -1v1m1 -2v1m1 -1v1m1 -1v1m1 -2v1m1 -1v1m1 -1v1m1 -2v1m1 -1v1m1 -1v1m1 -2v1m1 -1v1m1 -2v1m1 -1v1m1 -2v1m1 -1v1m1 -2v1m1 -1v1m1 -2v1m1 -1v1m1 -2v1m1 -1v1m1 -2v1m1 -1v1m1 -2v1m1 -2v1m1 -1v1m1 -2v1m1 -1v1m1 -2v1m1 -2v1m1 -1v1m1 -2v1m1 -2v1m1 -1v1m1 -2v1m1 -2v1m1 -2v1m1 -1v1m1 -2v1m1 -2v1m1 -2v1m1 -1v1m1 -2v1m1 -2v1m1 -2v1m1 -2v1m1 -1v1m1 -2v1m1 -2v1m1 -2v1m1 -2v1m1 -2v1m1 -2v1m1 -2v1m1 -2v1m1 -2v1m1 -2v1m1 -2v1m1 -1v1m1 -2v1m1 -2v1m1 -3v2m1 -3v1m1 -2v1m1 -2v1m1 -2v1m1 -2v1m1 -2v1m1 -2v1m1 -2v1m1 -2v1m1 -2v1m1 -2v1m1 -3v2m1 -3v1m1 -2v1m1 -2v1m1 -2v1m1 -3v2m1 -3v1m1 -2v1m1 -2v1m1 -2v1m1 -3v2m1 -3v1m1 -2v1m1 -3v2m1 -3v1m1 -2v1m1 -2v1m1 -3v2m1 -3v1m1 -2v1m1 -3v2m1 -3v1m1 -3v2m1 -3v1m1 -2v1m1 -3v2m1 -3v1m1 -3v2m1 -3v1m1 -3v2m1 -3v1m1 -2v1m1 -3v2m1 -3v1m1 -3v2m1 -3v1m1 -3v2m1 -4v2m1 -3v1m1 -3v2m1 -3v1m1 -3v2m1 -3v1m1 -3v2m1 -4v2m1 -3v1m1 -3v2m1 -3v1m1 -3v2m1 -4v2m1 -3v1m1 -3v2m1 -4v2m1 -3v1m1 -3v2m1 -4v2m1 -3v1m1 -3v2m1 -4v2m1 -4v2m1 -3v1m1 -3v2m1 -4v2m1 -4v2m1 -3v1m1 -3v2m1 -4v2m1 -4v2m1 -4v2m1 -3v1m1 -3v2m1 -4v2m1 -4v2m1 -4v2m1 -4v2m1 -4v2m1 -3v1m1 -3v2m1 -4v2m1 -4v2m1 -4v2m1 -4v2m1 -4v2m1 -4v2m1 -4v2m1 -4v2m1 -4v2m1 -4v2m1 -4v2m1 -4v2m1 -4v2m1 -4v2m1 -4v2m1 -4v2m1 -4v2m1 -4v2m1 -4v2m1 -4v2m1 -4v2m1 -4v2m1 -4v2m1 -4v2m1 -4v2m1 -4v2m1 -4v2m1 -5v3m1 -5v2m1 -4v2m1 -4v2m1 -4v2m1 -4v2m1 -4v2m1 -4v2m1 -5v3m1 -5v2m1 -4v2m1 -4v2m1 -4v2m1 -4v2m1 -5v3m1 -5v2m1 -4v2m1 -4v2m1 -5v3m1 -5v2m1 -4v2m1 -4v2m1 -4v2m1 -5v3m1 -5v2m1 -4v2m1 -5v3m1 -5v2m1 -4v2m1 -4v2m1 -5v3m1 -5v2m1 -4v2m1 -5v3m1 -5v2m1 -4v2m1 -5v3m1 -5v2m1 -4v2m1 -5v3m1 -5v2m1 -3v1" stroke="#00f080"/>
<path d="M42.5 53v2m1 0v3m1 0v2m1 0v2m1 0v2m1 0v3m1 0v2m1 0v2m1 0v2m1 0v3m1 0v2m1 0v2m1 0v2m1 0v3m1 0v2m1 0v2m1 0v2m1 0v2m1 0v3m1 0v2m1 0v2m1 0v2m1 0v2m1 0v2m1 0v3m1 0v2m1 0v2m1 0v2m1 0v2m1 0v2m1 0v2m1 0v3m1 0v2m1 0v2m1 0v2m1 0v2m1 0v2m1 0v2m1 0v2m1 0v2m1 0v2m1 0v2m1 0v2m1 0v2m1 0v2m1 0v2m1 0v2m1 0v2m1 0v2m1 0v2m1 0v2m1 0v2m1 0v2m1 0v2m1 0v2m1 0v2m1 0v2m1 0v2m1 0v1m1 0v2m1 0v2m1 0v2m1 0v2m1 0v2m1 0v2m1 0v1m1 0v2m1 0v2m1 0v2m1 0v2m1 0v2m1 0v1m1 0v2m1 0v2m1 0v2m1 0v1m1 0v2m1 0v2m1 0v2m1 0v1m1 0v2m1 0v2m1 0v1m1 0v2m1 0v2m1 0v1m1 0v2m1 0v2m1 0v1m1 0v2m1 0v2m1 0v1m1 0v2m1 0v1m1 0v2m1 0v1m1 0v2m1 0v2m1 0v1m1 0v2m1 0v1m1 0v2m1 0v1m1 0v2m1 0v1m1 0v2m1 0v1m1 0v2m1 0v1m1 0v1m1 0v2m1 0v1m1 0v2m1 0v1m1 0v1m1 0v2m1 0v1m1 0v1m1 0v2m1 0v1m1 0v1m1 0v2m1 0v1m1 0v1m1 0v2m1 0v1m1 0v1m1 0v1m1 0v2m1 0v1m1 0v1m1 0v1m1 0v1m1 0v2m1 0v1m1 0v1m1 0v1m1 0v1m1 0v1m1 0v1m1 0v2m1 0v1m1 0v1m1 0v1m1 0v1m1 0v1m1 0v1m1 0v1m1 0v1m1 0v1m1 0v1m1 0v1m1 0v1m1 0v1m1 0v1m1 0v1m1 0v1m1 0v1m1 0v1m1 -1v1m1 0v1m1 0v1m1 0v1m1 0v1m1 0v1m1 0v1m1 -1v1m1 0v1m1 0v1m1 0v1m1 0v1m1 -1v1m1 0v1m1 0v1m1 0v1m1 -1v1m1 0v1m1 0v1m1 -1v1m1 0v1m1 0v1m1 -1v1m1 0v1m1 0v1m1 -1v1m1 0v1m1 -1v1m1 0v1m1 -1v1m1 0v1m1 0v1m1 -1v1m1 0v1m1 -1v1m1 0v1m1 -1v1m1 0v1m1 -1v1m1 -1v1m1 0v1m1 -1v1m1 0v1m1 -1v1m1 -1v1m1 0v1m1 -1v1m1 0v1m1 -1v1m1 -1v1m1 0v1m1 -1v1m1 -1v1m1 -1v1m1 0v1m1 -1v1m1 -1v1m1 -1v1m1 0v1m1 -1v1m1 -1v1m1 -1v1m1 -1v1m1 -1v1m1 0v1m1 -1v1m1 -1v1m1 -1v1m1 -1v1m1 -1v1m1 -1v1m1 -1v1m1 -1v1m1 -1v1m1 -1v1m1 -1v1m1 -1v1m1 -1v1m1 -1v1m1 -1v1m1 -1v1m1 -1v1m1 -1v1m1 -1v1m1 -1v1m1 -1v1m1 -1v1m1 -1v1m1 -2v1m1 -1v1m1 -1v1m1 -1v1m1 -1v1m1 -1v1m1 -2v1m1 -1v1m1 -1v1m1 -1v1m1 -2v1m1 -1v1m1 -1v1m1 -2v1m1 -1v1m1 -1v1m1 -2v1m1 -1v1m1 -1v1m1 -2v1m1 -1v1m1 -1v1m1 -2v1m1 -1v1m1 -2v1m1 -1v1m1 -2v1m1 -1v1m1 -2v1m1 -1v1m1 -2v1m1 -1v1m1 -2v1m1 -1v1m1 -2v1m1 -1v1m1 -2v1m1 -1v1m1 -2v1m1 -2v1m1 -1v1m1 -2v1m1 -1v1m1 -2v1m1 -2v1m1 -1v1m1 -2v1m1 -2v1m1 -2v1m1 -1v1m1 -2v1m1 -2v1m1 -2v1m1 -1v1m1 -2v1m1 -2v1m1 -2v1m1 -2v1m1 -1v1m1 -2v1m1 -2v1m1 -2v1m1 -2v1m1 -2v1m1 -2v1m1 -2v1m1 -1v1m1 -2v1m1 -2v1m1 -2v1m1 -2v1m1 -2v1m1 -2v1m1 -2v1m1 -2v1m1 -2v1m1 -2v1m1 -2v1m1 -2v1m1 -2v1m1 -3v2m1 -3v1m1 -2v1m1 -2v1m1 -2v1m1 -2v1m1 -2v1m1 -2v1m1 -3v2m1 -3v1m1 -2v1m1 -2v1m1 -2v1m1 -3v2m1 -3v1m1 -2v1m1 -2v1m1 -3v2m1 -3v1m1 -2v1m1 -2v1m1 -3v2m1 -3v1m1 -2v1m1 -3v2m1 -3v1m1 -2v1m1 -3v2m1 -3v1m1 -3v2m1 -3v1m1 -2v1m1 -3v2m1 -3v1m1 -3v2m1 -3v1m1 -3v2m1 -3v1m1 -3v2m1 -3v1m1 -3v2m1 -3v1m1 -3v2m1 -3v1m1 -3v2m1 -3v1m1 -3v2m1 -3v1m1 -3v2m1 -4v2m1 -3v1m1 -3v2m1 -3v1m1 -3v2m1 -4v2m1 -3v1m1 -3v2m1 -4v2m1 -3v1m1 -3v2m1 -4v2m1 -3v1m1 -3v2m1 -4v2m1 -3v1m1 -3v2m1 -4v2m1 -4v2m1 -3v1m1 -3v2m1 -4v2m1 -4v2m1 -4v2m1 -3v1m1 -3v2m1 -4v2m1 -4v2m1 -4v2m1 -4v2m1 -3v1m1 -3v2m1 -4v2m1 -4v2m1 -4v2m1 -4v2m1 -4v2m1 -4v2m1 -4v2m1 -3v1m1 -3v2m1 -4v2m1 -4v2m1 -4v2m1 -4v2m1 -4v2m1 -4v2m1 -4v2m1 -4v2m1 -4v2m1 -4v2m1 -4v2m1 -4v2m1 -4v2m1 -4v2m1 -4v2m1 -4v2m1 -5v3m1 -5v2m1 -4v2m1 -4v2m1 -4v2m1 -4v2m1 -4v2m1 -4v2m1 -4v2m1 -4v2m1 -5v3m1 -5v2m1 -4v2m1 -4v2m1 -4v2m1 -4v2m1 -5v3m1 -5v2m1 -4v2m1 -4v2m1 -4v2m1 -5v3m1 -5v2m1 -4v2m1 -4v2m1 -4v2m1 -5v3m1 -5v2m1 -4v2m1 -4v2m1 -5v3m1 -5v2m1 -4v2m1 -5v3m1 -5v2m1 -4v2m1 -4v2m1 -5v3m1 -5v2m1 -4v2m1 -5v3m1 -5v2m1 -4v2m1 -5v3m1 -5v2m1 -4v2m1 -4v2" stroke="#b01010"/>
<path d="M42.5 62v2m1 0v2m1 0v2m1 0v3m1 0v2m1 0v2m1 0v2m1 0v3m1 0v2m1 0v2m1 0v2m1 0v2m1 0v3m1 0v2m1 0v2m1 0v2m1 0v2m1 0v3m1 0v2m1 0v2m1 0v2m1 0v2m1 0v2m1 0v3m1 0v2m1 0v2m1 0v2m1 0v2m1 0v2m1 0v2m1 0v2m1 0v2m1 0v2m1 0v2m1 0v2m1 0v3m1 0v2m1 0v2m1 0v2m1 0v2m1 0v2m1 0v2m1 0v2m1 0v2m1 0v2m1 0v2m1 0v2m1 0v1m1 0v2m1 0v2m1 0v2m1 0v2m1 0v2m1 0v2m1 0v2m1 0v2m1 0v2m1 0v2m1 0v1m1 0v2m1 0v2m1 0v2m1 0v2m1 0v2m1 0v1m1 0v2m1 0v2m1 0v2m1 0v2m1 0v1m1 0v2m1 0v2m1 0v2m1 0v1m1 0v2m1 0v2m1 0v2m1 0v1m1 0v2m1 0v2m1 0v1m1 0v2m1 0v2m1 0v1m1 0v2m1 0v2m1 0v1m1 0v2m1 0v1m1 0v2m1 0v2m1 0v1m1 0v2m1 0v1m1 0v2m1 0v1m1 0v2m1 0v1m1 0v2m1 0v1m1 0v2m1 0v1m1 0v2m1 0v1m1 0v2m1 0v1m1 0v1m1 0v2m1 0v1m1 0v2m1 0v1m1 0v1m1 0v2m1 0v1m1 0v1m1 0v2m1 0v1m1 0v1m1 0v2m1 0v1m1 0v1m1 0v2m1 0v1m1 0v1m1 0v1m1 0v1m1 0v2m1 0v1m1 0v1m1 0v1m1 0v1m1 0v2m1 0v1m1 0v1m1 0v1m1 0v1m1 0v1m1 0v1m1 0v1m1 0v1m1 0v2m1 0v1m1 0v1m1 0v1m1 0v1m1 0v1m1 0v1m1 0v1m1 0v1m1 0v1m1 0v1m1 0v1m1 -1v1m1 0v1m1 0v1m1 0v1m1 0v1m1 0v1m1 0v1m1 0v1m1 0v1m1 -1v1m1 0v1m1 0v1m1 0v1m1 0v1m1 -1v1m1 0v1m1 0v1m1 0v1m1 -1v1m1 0v1m1 0v1m1 -1v1m1 0v1m1 0v1m1 -1v1m1 0v1m1 0v1m1 -1v1m1 0v1m1 0v1m1 -1v1m1 0v1m1 -1v1m1 0v1m1 -1v1m1 0v1m1 -1v1m1 0v1m1 -1v1m1 0v1m1 -1v1m1 0v1m1 -1v1m1 0v1m1 -1v1m1 0v1m1 -1v1m1 -1v1m1 0v1m1 -1v1m1 -1v1m1 0v1m1 -1v1m1 -1v1m1 0v1m1 -1v1m1 -1v1m1 0v1m1 -1v1m1 -1v1m1 -1v1m1 0v1m1 -1v1m1 -1v1m1 -1v1m1 -1v1m1 -1v1m1 0v1m1 -1v1m1 -1v1m1 -1v1m1 -1v1m1 -1v1m1 -1v1m1 -1v1m1 -1v1m1 -1v1m1 -1v1m1 -1v1m1 -1v1m1 -1v1m1 -1v1m1 -1v1m1 -1v1m1 -1v1m1 -1v1m1 -1v1m1 -1v1m1 -1v1m1 -1v1m1 -1v1m1 -2v1m1 -1v1m1 -1v1m1 -1v1m1 -1v1m1 -1v1m1 -2v1m1 -1v1m1 -1v1m1 -1v1m1 -2v1m1 -1v1m1 -1v1m1 -1v1m1 -2v1m1 -1v1m1 -1v1m1 -2v1m1 -1v1m1 -2v1m1 -1v1m1 -1v1m1 -2v1m1 -1v1m1 -2v1m1 -1v1m1 -1v1m1 -2v1m1 -1v1m1 -2v1m1 -1v1m1 -2v1m1 -1v1m1 -2v1m1 -2v1m1 -1v1m1 -2v1m1 -1v1m1 -2v1m1 -1v1m1 -2v1m1 -2v1m1 -1v1m1 -2v1m1 -2v1m1 -1v1m1 -2v1m1 -2v1m1 -1v1m1 -2v1m1 -2v1m1 -2v1m1 -1v1m1 -2v1m1 -2v1m1 -2v1m1 -2v1m1 -1v1m1 -2v1m1 -2v1m1 -2v1m1 -2v1m1 -2v1m1 -1v1m1 -2v1m1 -2v1m1 -2v1m1 -2v1m1 -2v1m1 -2v1m1 -2v1m1 -2v1m1 -2v1m1 -2v1m1 -2v1m1 -2v1m1 -2v1m1 -2v1m1 -2v1m1 -2v1m1 -2v1m1 -2v1m1 -2v1m1 -3v2m1 -3v1m1 -2v1m1 -2v1m1 -2v1m1 -2v1m1 -3v2m1 -3v1m1 -2v1m1 -2v1m1 -2v1m1 -3v2m1 -3v1m1 -2v1m1 -2v1m1 -3v2m1 -3v1m1 -2v1m1 -2v1m1 -3v2m1 -3v1m1 -2v1m1 -3v2m1 -3v1m1 -3v2m1 -3v1m1 -2v1m1 -3v2m1 -3v1m1 -2v1m1 -3v2m1 -3v1m1 -3v2m1 -3v1m1 -3v2m1 -3v1m1 -3v2m1 -3v1m1 -3v2m1 -3v1m1 -3v2m1 -3v1m1 -3v2m1 -3v1m1 -3v2m1 -4v2m1 -3v1m1 -3v2m1 -3v1m1 -3v2m1 -4v2m1 -3v1m1 -3v2m1 -3v1m1 -3v2m1 -4v2m1 -3v1m1 -3v2m1 -4v2m1 -4v2m1 -3v1m1 -3v2m1 -4v2m1 -3v1m1 -3v2m1 -4v2m1 -4v2m1 -4v2m1 -3v1m1 -3v2m1 -4v2m1 -4v2m1 -4v2m1 -3v1m1 -3v2m1 -4v2m1 -4v2m1 -4v2m1 -4v2m1 -4v2m1 -3v1m1 -3v2m1 -4v2m1 -4v2m1 -4v2m1 -4v2m1 -4v2m1 -4v2m1 -4v2m1 -4v2m1 -4v2m1 -4v2m1 -4v2m1 -4v2m1 -4v2m1 -4v2m1 -4v2m1 -4v2m1 -4v2m1 -4v2m1 -4v2m1 -4v2m1 -4v2m1 -4v2m1 -4v2m1 -4v2m1 -4v2m1 -4v2m1 -4v2m1 -5v3m1 -5v2m1 -4v2m1 -4v2m1 -4v2m1 -4v2m1 -4v2m1 -4v2m1 -5v3m1 -5v2m1 -4v2m1 -4v2m1 -4v2m1 -5v3m1 -5v2m1 -4v2m1 -4v2m1 -4v2m1 -5v3m1 -5v2m1 -4v2m1 -4v2m1 -5v3m1 -5v2m1 -4v2m1 -4v2m1 -5v3m1 -5v2m1 -4v2m1 -5v3m1 -5v2m1 -4v2m1 -4v2m1 -5v3m1 -5v2m1 -4v2m1 -5v3m1 -5v2m1 -4v2m1 -5v3m1 -5v2" stroke="#f030e0"/>
</g>
<g fill="#e8e8e8" shape-rendering="crispEdges">
<rect x="40" y="30" width="1" height="346"/>
<rect x="37" y="50" width="3" height="1"/>
<rect x="34" y="77" width="6" height="1"/>
<rect x="37" y="105" width="3" height="1"/>
<rect x="34" y="132" width="6" height="1"/>
<rect x="37" y="160" width="3" height="1"/>
<rect x="34" y="187" width="6" height="1"/>
<rect x="37" y="215" width="3" height="1"/>
<rect x="34" y="243" width="6" height="1"/>
<rect x="37" y="270" width="3" height="1"/>
<rect x="34" y="298" width="6" height="1"/>
<rect x="37" y="325" width="3" height="1"/>
<rect x="34" y="353" width="6" height="1"/>
<rect x="42" y="395" width="564" height="1"/>
<rect x="93" y="395" width="1" height="7"/>
<rect x="147" y="395" width="1" height="4"/>
<rect x="200" y="395" width="1" height="7"/>
<rect x="254" y="395" width="1" height="4"/>
<rect x="307" y="395" width="1" height="7"/>
<rect x="361" y="395" width="1" height="4"/>
<rect x="414" y="395" width="1" height="7"/>
<rect x="468" y="395" width="1" height="4"/>
<rect x="521" y="395" width="1" height="7"/>
<rect x="575" y="395" width="1" height="4"/>
</g>
<g>
<text x="31.4" y="81" text-anchor="end">-0.5</text>
<text x="31.4" y="136" text-anchor="end">-0.6</text>
<text x="31.4" y="191" text-anchor="end">-0.7</text>
<text x="31.4" y="247" text-anchor="end">-0.8</text>
<text x="31.4" y="302" text-anchor="end">-0.9</text>
<text x="31.4" y="357" text-anchor="end">-1.0</text>
<text x="86.1" y="415" textLength="14.4" lengthAdjust="spacingAndGlyphs">3.0</text>
<text x="193.1" y="415" textLength="14.4" lengthAdjust="spacingAndGlyphs">3.5</text>
<text x="300.1" y="415" textLength="14.4" lengthAdjust="spacingAndGlyphs">4.0</text>
<text x="407.1" y="415" textLength="14.4" lengthAdjust="spacingAndGlyphs">4.5</text>
<text x="514.1" y="415" textLength="14.4" lengthAdjust="spacingAndGlyphs">5.0</text>
<text x="300.2" y="428" textLength="46.2" lengthAdjust="spacingAndGlyphs">Time (ms)</text>
</g>
<g shape-rendering="crispEdges">
<rect x="42" y="377" width="565" height="17" fill="#ddd9cc"/><rect x="42" y="378" width="565" height="15" fill="#ffffff"/>
<rect x="42" y="377" width="16" height="17" fill="#ece9d8"/><rect x="42" y="377" width="16" height="1" fill="#f6f5ee"/><rect x="42" y="377" width="1" height="17" fill="#f6f5ee"/><rect x="43" y="378" width="14" height="1" fill="#ffffff"/><rect x="43" y="378" width="1" height="15" fill="#ffffff"/><rect x="43" y="392" width="14" height="1" fill="#aca899"/><rect x="56" y="378" width="1" height="15" fill="#aca899"/><rect x="42" y="393" width="16" height="1" fill="#716f64"/><rect x="57" y="377" width="1" height="17" fill="#716f64"/>
<rect x="50" y="382" width="1" height="7" fill="#000"/><rect x="49" y="383" width="1" height="5" fill="#000"/><rect x="48" y="384" width="1" height="3" fill="#000"/><rect x="47" y="385" width="1" height="1" fill="#000"/>
<rect x="295" y="377" width="226" height="17" fill="#ece9d8"/><rect x="295" y="377" width="226" height="1" fill="#f6f5ee"/><rect x="295" y="377" width="1" height="17" fill="#f6f5ee"/><rect x="296" y="378" width="224" height="1" fill="#ffffff"/><rect x="296" y="378" width="1" height="15" fill="#ffffff"/><rect x="296" y="392" width="224" height="1" fill="#aca899"/><rect x="519" y="378" width="1" height="15" fill="#aca899"/><rect x="295" y="393" width="226" height="1" fill="#716f64"/><rect x="520" y="377" width="1" height="17" fill="#716f64"/>
<rect x="591" y="377" width="16" height="17" fill="#ece9d8"/><rect x="591" y="377" width="16" height="1" fill="#f6f5ee"/><rect x="591" y="377" width="1" height="17" fill="#f6f5ee"/><rect x="592" y="378" width="14" height="1" fill="#ffffff"/><rect x="592" y="378" width="1" height="15" fill="#ffffff"/><rect x="592" y="392" width="14" height="1" fill="#aca899"/><rect x="605" y="378" width="1" height="15" fill="#aca899"/><rect x="591" y="393" width="16" height="1" fill="#716f64"/><rect x="606" y="377" width="1" height="17" fill="#716f64"/>
<rect x="597" y="382" width="1" height="7" fill="#000"/><rect x="598" y="383" width="1" height="5" fill="#000"/><rect x="599" y="384" width="1" height="3" fill="#000"/><rect x="600" y="385" width="1" height="1" fill="#000"/>
<rect x="607" y="30" width="17" height="347" fill="#ddd9cc"/><rect x="608" y="30" width="15" height="347" fill="#ffffff"/>
<rect x="607" y="30" width="17" height="17" fill="#ece9d8"/><rect x="607" y="30" width="17" height="1" fill="#f6f5ee"/><rect x="607" y="30" width="1" height="17" fill="#f6f5ee"/><rect x="608" y="31" width="15" height="1" fill="#ffffff"/><rect x="608" y="31" width="1" height="15" fill="#ffffff"/><rect x="608" y="45" width="15" height="1" fill="#aca899"/><rect x="622" y="31" width="1" height="15" fill="#aca899"/><rect x="607" y="46" width="17" height="1" fill="#716f64"/><rect x="623" y="30" width="1" height="17" fill="#716f64"/>
<rect x="615" y="36" width="1" height="1" fill="#000"/><rect x="614" y="37" width="3" height="1" fill="#000"/><rect x="613" y="38" width="5" height="1" fill="#000"/><rect x="612" y="39" width="7" height="1" fill="#000"/>
<rect x="607" y="265" width="17" height="94" fill="#ece9d8"/><rect x="607" y="265" width="17" height="1" fill="#f6f5ee"/><rect x="607" y="265" width="1" height="94" fill="#f6f5ee"/><rect x="608" y="266" width="15" height="1" fill="#ffffff"/><rect x="608" y="266" width="1" height="92" fill="#ffffff"/><rect x="608" y="357" width="15" height="1" fill="#aca899"/><rect x="622" y="266" width="1" height="92" fill="#aca899"/><rect x="607" y="358" width="17" height="1" fill="#716f64"/><rect x="623" y="265" width="1" height="94" fill="#716f64"/>
<rect x="607" y="359" width="17" height="18" fill="#ece9d8"/><rect x="607" y="359" width="17" height="1" fill="#f6f5ee"/><rect x="607" y="359" width="1" height="18" fill="#f6f5ee"/><rect x="608" y="360" width="15" height="1" fill="#ffffff"/><rect x="608" y="360" width="1" height="16" fill="#ffffff"/><rect x="608" y="375" width="15" height="1" fill="#aca899"/><rect x="622" y="360" width="1" height="16" fill="#aca899"/><rect x="607" y="376" width="17" height="1" fill="#716f64"/><rect x="623" y="359" width="1" height="18" fill="#716f64"/>
<rect x="612" y="367" width="7" height="1" fill="#000"/><rect x="613" y="368" width="5" height="1" fill="#000"/><rect x="614" y="369" width="3" height="1" fill="#000"/><rect x="615" y="370" width="1" height="1" fill="#000"/>
</g>
<g shape-rendering="crispEdges">
<text x="642.6" y="42" textLength="41.6" lengthAdjust="spacingAndGlyphs">Profile32</text>
<rect x="692" y="37" width="23" height="1" fill="#c8c83c"/>
<text x="642.6" y="59" textLength="41.6" lengthAdjust="spacingAndGlyphs">Profile33</text>
<rect x="692" y="54" width="23" height="1" fill="#50f0a0"/>
<text x="642.6" y="76" textLength="41.6" lengthAdjust="spacingAndGlyphs">Profile34</text>
<rect x="692" y="71" width="23" height="1" fill="#90d040"/>
<text x="642.6" y="93" textLength="41.6" lengthAdjust="spacingAndGlyphs">Profile35</text>
<rect x="692" y="88" width="23" height="1" fill="#20e080"/>
<text x="642.6" y="110" textLength="41.6" lengthAdjust="spacingAndGlyphs">Profile36</text>
<rect x="692" y="105" width="23" height="1" fill="#d0a050"/>
<text x="642.6" y="127" textLength="41.6" lengthAdjust="spacingAndGlyphs">Profile37</text>
<rect x="692" y="122" width="23" height="1" fill="#f05040"/>
<text x="642.6" y="144" textLength="41.6" lengthAdjust="spacingAndGlyphs">Profile38</text>
<rect x="692" y="139" width="23" height="1" fill="#30b0e0"/>
<text x="642.6" y="161" textLength="41.6" lengthAdjust="spacingAndGlyphs">Profile39</text>
<rect x="692" y="156" width="23" height="1" fill="#20d0a0"/>
<text x="642.6" y="178" textLength="41.6" lengthAdjust="spacingAndGlyphs">Profile40</text>
<rect x="692" y="173" width="23" height="1" fill="#e0b030"/>
<text x="642.6" y="195" textLength="41.6" lengthAdjust="spacingAndGlyphs">Profile41</text>
<rect x="692" y="190" width="23" height="1" fill="#a0d820"/>
<text x="642.6" y="212" textLength="41.6" lengthAdjust="spacingAndGlyphs">Profile42</text>
<rect x="692" y="207" width="23" height="1" fill="#d070b0"/>
<text x="642.6" y="229" textLength="41.6" lengthAdjust="spacingAndGlyphs">Profile43</text>
<rect x="692" y="224" width="23" height="1" fill="#1020f0"/>
<text x="642.6" y="246" textLength="41.6" lengthAdjust="spacingAndGlyphs">Profile44</text>
<rect x="692" y="241" width="23" height="1" fill="#ff20d0"/>
<text x="642.6" y="263" textLength="41.6" lengthAdjust="spacingAndGlyphs">Profile45</text>
<rect x="692" y="258" width="23" height="1" fill="#f03070"/>
<text x="642.6" y="280" textLength="41.6" lengthAdjust="spacingAndGlyphs">Profile46</text>
<rect x="692" y="275" width="23" height="1" fill="#90e020"/>
<text x="642.6" y="297" textLength="41.6" lengthAdjust="spacingAndGlyphs">Profile47</text>
<rect x="692" y="292" width="23" height="1" fill="#e0a040"/>
<text x="642.6" y="314" textLength="41.6" lengthAdjust="spacingAndGlyphs">Profile48</text>
<rect x="692" y="309" width="23" height="1" fill="#00f080"/>
<text x="642.6" y="331" textLength="41.6" lengthAdjust="spacingAndGlyphs">Profile49</text>
<rect x="692" y="326" width="23" height="1" fill="#b01010"/>
<text x="642.6" y="348" textLength="41.6" lengthAdjust="spacingAndGlyphs">Profile50</text>
<rect x="692" y="343" width="23" height="1" fill="#f030e0"/>
</g>
<g>
<rect x="718" y="30" width="17" height="340" fill="url(#trk)"/>
<rect x="719.5" y="30.5" width="14" height="15" rx="2" fill="url(#btn)" stroke="#ffffff" stroke-width="1"/>
<path d="M720.5 44.5 L721.5 45.5 H731.5 L732.5 44.5" stroke="#9ab2ea" stroke-width="1" fill="none"/>
<path d="M723 40 L726.5 36.6 L730 40" fill="none" stroke="#4d6185" stroke-width="2"/>
<rect x="719.5" y="336.5" width="14" height="15" rx="2" fill="url(#btn)" stroke="#ffffff" stroke-width="1"/>
<path d="M720.5 350.5 L721.5 351.5 H731.5 L732.5 350.5" stroke="#9ab2ea" stroke-width="1" fill="none"/>
<g shape-rendering="crispEdges"><path d="M723 340.5H730M723 342.5H730M723 344.5H730M723 346.5H730" stroke="#eef4fe" stroke-width="1"/><path d="M723 341.5H730M723 343.5H730M723 345.5H730M723 347.5H730" stroke="#86a8f0" stroke-width="1"/></g>
<rect x="719.5" y="353.5" width="14" height="15" rx="2" fill="url(#btn)" stroke="#ffffff" stroke-width="1"/>
<path d="M720.5 367.5 L721.5 368.5 H731.5 L732.5 367.5" stroke="#9ab2ea" stroke-width="1" fill="none"/>
<path d="M723 360 L726.5 363.4 L730 360" fill="none" stroke="#4d6185" stroke-width="2"/>
</g>
<g id="tb" shape-rendering="crispEdges">
<rect x="42" y="3" width="162" height="24" fill="#ece9d8"/>
<rect x="42" y="3" width="162" height="1" fill="#fff"/><rect x="42" y="3" width="1" height="24" fill="#fff"/>
<rect x="42" y="26" width="162" height="1" fill="#dedbcb"/>
<g fill="#6a6a6a">
<rect x="48" y="14" width="5" height="1"/><rect x="56" y="14" width="5" height="1"/>
<rect x="54" y="8" width="1" height="5"/><rect x="54" y="16" width="1" height="5"/>
</g>
<rect x="66" y="4" width="23" height="22" fill="url(#chk)"/>
<rect x="66" y="4" width="23" height="1" fill="#aca899"/><rect x="66" y="4" width="1" height="22" fill="#aca899"/>
<rect x="88" y="4" width="1" height="22" fill="#fff"/><rect x="66" y="25" width="23" height="1" fill="#fff"/>
<g fill="#000">
<rect x="81" y="11" width="5" height="1"/><rect x="83" y="9" width="1" height="5"/><rect x="81" y="15" width="5" height="1"/>
</g>
</g>
<g id="tb2">
<circle cx="75" cy="15" r="4.3" fill="#fff" stroke="#000" stroke-width="1.5"/>
<path d="M78.3 18.3 L83.5 23.5" stroke="#000" stroke-width="2.8" fill="none"/>
<circle cx="98.5" cy="13.5" r="4.9" fill="#f4f2ea" stroke="#000" stroke-width="1.3"/>
<path d="M102 17 L107.3 22.3" stroke="#000" stroke-width="2.7" fill="none"/>
</g>
<g shape-rendering="crispEdges"><rect x="98" y="9" width="1" height="1" fill="#a01010"/>
<rect x="97" y="10" width="3" height="1" fill="#a01010"/>
<rect x="98" y="11" width="1" height="1" fill="#a01010"/>
<rect x="95" y="12" width="1" height="1" fill="#a01010"/>
<rect x="98" y="12" width="1" height="1" fill="#a01010"/>
<rect x="101" y="12" width="1" height="1" fill="#a01010"/>
<rect x="94" y="13" width="9" height="1" fill="#a01010"/>
<rect x="95" y="14" width="1" height="1" fill="#a01010"/>
<rect x="98" y="14" width="1" height="1" fill="#a01010"/>
<rect x="101" y="14" width="1" height="1" fill="#a01010"/>
<rect x="98" y="15" width="1" height="1" fill="#a01010"/>
<rect x="97" y="16" width="3" height="1" fill="#a01010"/>
<rect x="98" y="17" width="1" height="1" fill="#a01010"/></g>
<g shape-rendering="crispEdges">
<rect x="123" y="7" width="1" height="1" fill="#000"/>
<rect x="121" y="8" width="2" height="1" fill="#000"/>
<rect x="123" y="8" width="1" height="1" fill="#fff"/>
<rect x="124" y="8" width="2" height="1" fill="#000"/>
<rect x="120" y="9" width="1" height="1" fill="#000"/>
<rect x="121" y="9" width="1" height="1" fill="#fff"/>
<rect x="122" y="9" width="1" height="1" fill="#000"/>
<rect x="123" y="9" width="1" height="1" fill="#fff"/>
<rect x="124" y="9" width="1" height="1" fill="#000"/>
<rect x="125" y="9" width="1" height="1" fill="#fff"/>
<rect x="126" y="9" width="1" height="1" fill="#000"/>
<rect x="120" y="10" width="1" height="1" fill="#000"/>
<rect x="121" y="10" width="1" height="1" fill="#fff"/>
<rect x="122" y="10" width="1" height="1" fill="#000"/>
<rect x="123" y="10" width="1" height="1" fill="#fff"/>
<rect x="124" y="10" width="1" height="1" fill="#000"/>
<rect x="125" y="10" width="1" height="1" fill="#fff"/>
<rect x="126" y="10" width="2" height="1" fill="#000"/>
<rect x="120" y="11" width="1" height="1" fill="#000"/>
<rect x="121" y="11" width="1" height="1" fill="#fff"/>
<rect x="122" y="11" width="1" height="1" fill="#000"/>
<rect x="123" y="11" width="1" height="1" fill="#fff"/>
<rect x="124" y="11" width="1" height="1" fill="#000"/>
<rect x="125" y="11" width="1" height="1" fill="#fff"/>
<rect x="126" y="11" width="1" height="1" fill="#000"/>
<rect x="127" y="11" width="1" height="1" fill="#fff"/>
<rect x="128" y="11" width="1" height="1" fill="#000"/>
<rect x="120" y="12" width="1" height="1" fill="#000"/>
<rect x="121" y="12" width="1" height="1" fill="#fff"/>
<rect x="122" y="12" width="1" height="1" fill="#000"/>
<rect x="123" y="12" width="1" height="1" fill="#fff"/>
<rect x="124" y="12" width="1" height="1" fill="#000"/>
<rect x="125" y="12" width="1" height="1" fill="#fff"/>
<rect x="126" y="12" width="1" height="1" fill="#000"/>
<rect x="127" y="12" width="1" height="1" fill="#fff"/>
<rect x="128" y="12" width="1" height="1" fill="#000"/>
<rect x="120" y="13" width="1" height="1" fill="#000"/>
<rect x="121" y="13" width="1" height="1" fill="#fff"/>
<rect x="122" y="13" width="1" height="1" fill="#000"/>
<rect x="123" y="13" width="1" height="1" fill="#fff"/>
<rect x="124" y="13" width="1" height="1" fill="#000"/>
<rect x="125" y="13" width="1" height="1" fill="#fff"/>
<rect x="126" y="13" width="1" height="1" fill="#000"/>
<rect x="127" y="13" width="1" height="1" fill="#fff"/>
<rect x="128" y="13" width="1" height="1" fill="#000"/>
<rect x="117" y="14" width="2" height="1" fill="#000"/>
<rect x="120" y="14" width="1" height="1" fill="#000"/>
<rect x="121" y="14" width="5" height="1" fill="#fff"/>
<rect x="126" y="14" width="1" height="1" fill="#000"/>
<rect x="127" y="14" width="1" height="1" fill="#fff"/>
<rect x="128" y="14" width="1" height="1" fill="#000"/>
<rect x="117" y="15" width="1" height="1" fill="#000"/>
<rect x="118" y="15" width="1" height="1" fill="#fff"/>
<rect x="119" y="15" width="2" height="1" fill="#000"/>
<rect x="121" y="15" width="7" height="1" fill="#fff"/>
<rect x="128" y="15" width="1" height="1" fill="#000"/>
<rect x="117" y="16" width="1" height="1" fill="#000"/>
<rect x="118" y="16" width="2" height="1" fill="#fff"/>
<rect x="120" y="16" width="1" height="1" fill="#000"/>
<rect x="121" y="16" width="7" height="1" fill="#fff"/>
<rect x="128" y="16" width="1" height="1" fill="#000"/>
<rect x="118" y="17" width="1" height="1" fill="#000"/>
<rect x="119" y="17" width="9" height="1" fill="#fff"/>
<rect x="128" y="17" width="1" height="1" fill="#000"/>
<rect x="119" y="18" width="1" height="1" fill="#000"/>
<rect x="120" y="18" width="7" height="1" fill="#fff"/>
<rect x="127" y="18" width="1" height="1" fill="#000"/>
<rect x="120" y="19" width="1" height="1" fill="#000"/>
<rect x="121" y="19" width="6" height="1" fill="#fff"/>
<rect x="127" y="19" width="1" height="1" fill="#000"/>
<rect x="121" y="20" width="1" height="1" fill="#000"/>
<rect x="122" y="20" width="5" height="1" fill="#fff"/>
<rect x="127" y="20" width="1" height="1" fill="#000"/>
<rect x="189" y="8" width="9" height="1" fill="#000"/>
<rect x="188" y="9" width="1" height="1" fill="#000"/>
<rect x="189" y="9" width="8" height="1" fill="#fff"/>
<rect x="197" y="9" width="1" height="1" fill="#000"/>
<rect x="187" y="10" width="1" height="1" fill="#000"/>
<rect x="188" y="10" width="2" height="1" fill="#fff"/>
<rect x="190" y="10" width="5" height="1" fill="#000"/>
<rect x="195" y="10" width="1" height="1" fill="#fff"/>
<rect x="196" y="10" width="1" height="1" fill="#000"/>
<rect x="187" y="11" width="1" height="1" fill="#000"/>
<rect x="188" y="11" width="8" height="1" fill="#fff"/>
<rect x="196" y="11" width="2" height="1" fill="#000"/>
<rect x="187" y="12" width="1" height="1" fill="#000"/>
<rect x="188" y="12" width="1" height="1" fill="#fff"/>
<rect x="189" y="12" width="7" height="1" fill="#000"/>
<rect x="196" y="12" width="1" height="1" fill="#c0c0c0"/>
<rect x="197" y="12" width="2" height="1" fill="#000"/>
<rect x="185" y="13" width="2" height="1" fill="#000"/>
<rect x="187" y="13" width="8" height="1" fill="#fff"/>
<rect x="195" y="13" width="2" height="1" fill="#000"/>
<rect x="197" y="13" width="1" height="1" fill="#c0c0c0"/>
<rect x="198" y="13" width="2" height="1" fill="#000"/>
<rect x="184" y="14" width="12" height="1" fill="#000"/>
<rect x="196" y="14" width="1" height="1" fill="#c0c0c0"/>
<rect x="197" y="14" width="1" height="1" fill="#000"/>
<rect x="198" y="14" width="1" height="1" fill="#c0c0c0"/>
<rect x="199" y="14" width="2" height="1" fill="#000"/>
<rect x="184" y="15" width="1" height="1" fill="#000"/>
<rect x="185" y="15" width="11" height="1" fill="#e8e8e8"/>
<rect x="196" y="15" width="1" height="1" fill="#000"/>
<rect x="197" y="15" width="1" height="1" fill="#c0c0c0"/>
<rect x="198" y="15" width="1" height="1" fill="#000"/>
<rect x="199" y="15" width="1" height="1" fill="#c0c0c0"/>
<rect x="200" y="15" width="1" height="1" fill="#000"/>
<rect x="184" y="16" width="14" height="1" fill="#000"/>
<rect x="198" y="16" width="1" height="1" fill="#c0c0c0"/>
<rect x="199" y="16" width="2" height="1" fill="#000"/>
<rect x="184" y="17" width="1" height="1" fill="#000"/>
<rect x="185" y="17" width="6" height="1" fill="#c0c0c0"/>
<rect x="191" y="17" width="1" height="1" fill="#0000ff"/>
<rect x="192" y="17" width="1" height="1" fill="#ff0000"/>
<rect x="193" y="17" width="1" height="1" fill="#00c000"/>
<rect x="194" y="17" width="2" height="1" fill="#c0c0c0"/>
<rect x="196" y="17" width="1" height="1" fill="#000"/>
<rect x="197" y="17" width="1" height="1" fill="#c0c0c0"/>
<rect x="198" y="17" width="2" height="1" fill="#000"/>
<rect x="184" y="18" width="1" height="1" fill="#000"/>
<rect x="185" y="18" width="6" height="1" fill="#c0c0c0"/>
<rect x="191" y="18" width="1" height="1" fill="#0000ff"/>
<rect x="192" y="18" width="1" height="1" fill="#ff0000"/>
<rect x="193" y="18" width="1" height="1" fill="#00c000"/>
<rect x="194" y="18" width="2" height="1" fill="#c0c0c0"/>
<rect x="196" y="18" width="3" height="1" fill="#000"/>
<rect x="184" y="19" width="14" height="1" fill="#000"/>
<rect x="185" y="20" width="1" height="1" fill="#000"/>
<rect x="186" y="20" width="10" height="1" fill="#e8e8e8"/>
<rect x="196" y="20" width="1" height="1" fill="#000"/>
<rect x="186" y="21" width="11" height="1" fill="#000"/>
</g>
<g id="tb3" shape-rendering="crispEdges">
<rect x="139" y="8" width="14" height="14" fill="#000"/>
<rect x="140" y="9" width="12" height="12" fill="#808000"/>
<rect x="142" y="9" width="8" height="6" fill="#c0c0c0"/>
<rect x="150" y="9" width="1" height="6" fill="#000"/><rect x="141" y="9" width="1" height="6" fill="#000"/>
<rect x="151" y="9" width="1" height="1" fill="#fff"/>
<rect x="142" y="17" width="9" height="5" fill="#000"/>
<rect x="148" y="18" width="2" height="3" fill="#c0c0c0"/>
<path d="M161 7 H166 L169 10 V19 H161 Z" fill="#000"/>
<path d="M162 8 H166 V10 H168 V18 H162 Z" fill="#fff"/>
<rect x="163" y="10" width="2" height="1" fill="#000"/>
<rect x="163" y="12" width="4" height="1" fill="#000"/><rect x="163" y="14" width="4" height="1" fill="#000"/><rect x="163" y="16" width="4" height="1" fill="#000"/>
<path d="M168 11 H174 L177 14 V23 H168 Z" fill="#000080"/>
<path d="M169 12 H173 V15 H176 V22 H169 Z" fill="#fff"/>
<rect x="170" y="14" width="2" height="1" fill="#000"/>
<rect x="170" y="16" width="5" height="1" fill="#000"/><rect x="170" y="18" width="5" height="1" fill="#000"/><rect x="170" y="20" width="5" height="1" fill="#000"/>
</g>

</svg>
</body></html>
